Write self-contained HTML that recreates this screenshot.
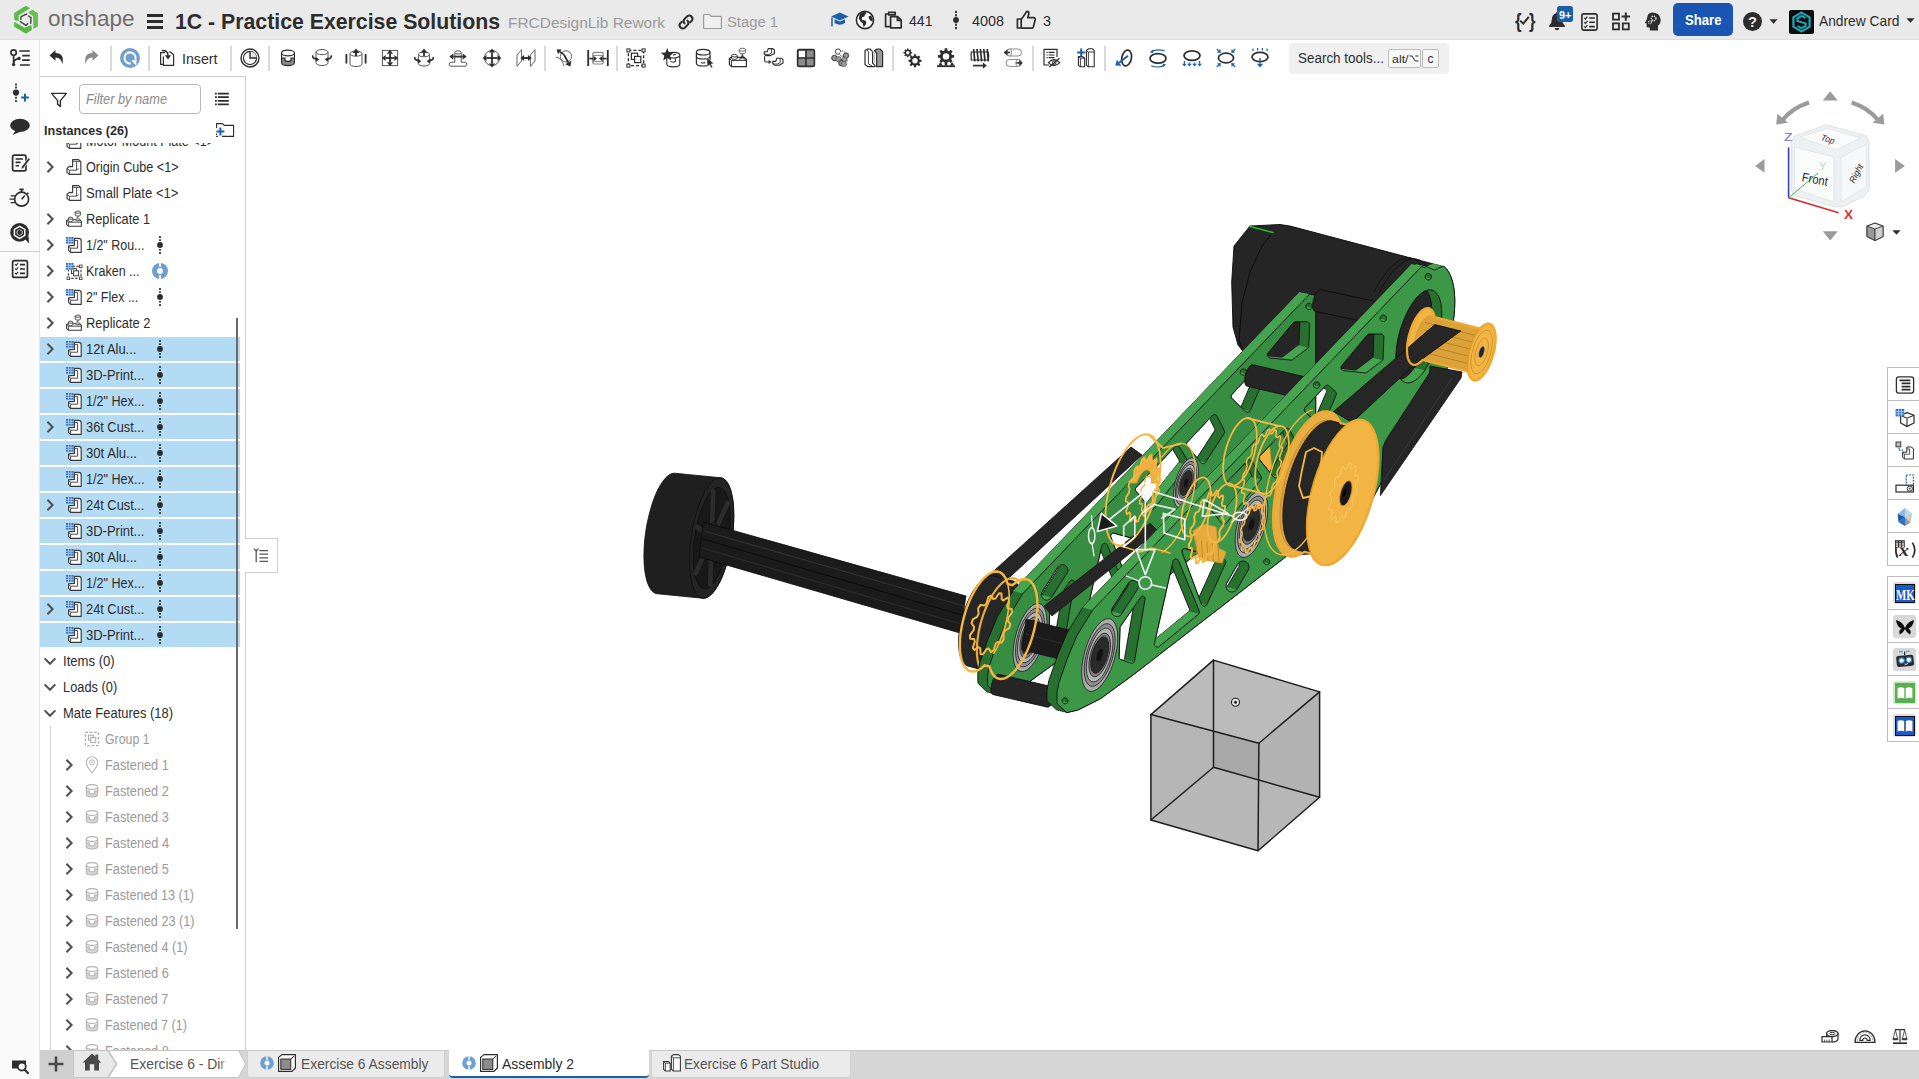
<!DOCTYPE html>
<html lang="en">
<head>
<meta charset="utf-8">
<title>1C - Practice Exercise Solutions</title>
<style>
*{box-sizing:border-box;margin:0;padding:0}
html,body{width:1919px;height:1079px;overflow:hidden;background:#fff}
body{position:relative;font-family:"Liberation Sans",sans-serif;color:#2d2d2d;font-size:14px}
.abs{position:absolute}
#header{position:absolute;left:0;top:0;width:1919px;height:40px;background:#eaeaea;border-bottom:1px solid #dedede}
#leftbar{position:absolute;left:0;top:40px;width:40px;height:1039px;background:#fafafa}
#toolbar{position:absolute;left:40px;top:40px;width:1879px;height:36px;background:#fff}
#panel{position:absolute;left:40px;top:76px;width:206px;height:974px;background:#fff;border-right:1px solid #ccc;overflow:hidden}
#tabs{position:absolute;left:40px;top:1050px;width:1879px;height:29px;background:#d6d6d6}
#view{position:absolute;left:246px;top:76px;width:1673px;height:974px;overflow:hidden}
.t{position:absolute;white-space:nowrap;line-height:1;transform-origin:0 50%}
svg{position:absolute;overflow:visible}
/* header */
/*HEADER_CSS*/
/* toolbar */
.sep{position:absolute;top:6px;width:2px;height:25px;background:#d9d9d9}
/*TOOLBAR_CSS*/
/* panel */
.row{position:absolute;left:0;width:200px;height:24px}
.row.sel{background:#b5dcf4}
.row .lbl{position:absolute;top:5px;font-size:14px;line-height:14px;white-space:nowrap;color:#2d2d2d;transform-origin:0 50%}
.row.dim .lbl{color:#999}
/*PANEL_CSS*/
/* tabs */
/*TABS_CSS*/
</style>
</head>
<body>
<div id="view">
<svg style="left:0;top:0" width="1673" height="974" viewBox="0 0 1673 974">
<path d="M428.5 397.2 L425.7 397.6 L422.9 399.1 L420.0 401.5 L417.1 404.9 L414.3 409.2 L411.5 414.3 L408.9 420.2 L406.5 426.7 L404.4 433.7 L402.5 441.2 L400.8 448.9 L399.6 456.8 L398.6 464.6 L398.1 472.4 L397.9 479.9 L398.1 487.0 L398.6 493.6 L399.6 499.6 L400.8 504.9 L402.5 509.4 L404.4 512.9 L406.5 515.6 L408.9 517.2 L411.5 517.8 L457.2 522.3 L460.0 521.9 L462.8 520.4 L465.7 518.0 L468.6 514.6 L471.4 510.3 L474.2 505.2 L476.8 499.3 L479.2 492.8 L481.3 485.8 L483.2 478.3 L484.9 470.6 L486.1 462.7 L487.1 454.9 L487.6 447.1 L487.8 439.6 L487.6 432.5 L487.1 425.9 L486.1 419.9 L484.9 414.6 L483.2 410.1 L481.3 406.6 L479.2 403.9 L476.8 402.3 L474.2 401.7Z " fill="#1f1f1f" fill-rule="evenodd" stroke="#0c0c0c" stroke-width="0.8" stroke-linejoin="round" /><polygon points="487.8,439.6 487.6,432.5 487.1,425.9 486.1,419.9 484.9,414.6 483.2,410.1 481.3,406.6 479.2,403.9 476.8,402.3 474.2,401.7 471.4,402.1 468.6,403.6 465.7,406.0 462.8,409.4 460.0,413.7 457.2,418.8 454.6,424.7 452.2,431.2 450.1,438.2 448.2,445.7 446.5,453.4 445.3,461.3 444.3,469.1 443.8,476.9 443.6,484.4 443.8,491.5 444.3,498.1 445.3,504.1 446.5,509.4 448.2,513.9 450.1,517.4 452.2,520.1 454.6,521.7 457.2,522.3 460.0,521.9 462.8,520.4 465.7,518.0 468.6,514.6 471.4,510.3 474.2,505.2 476.8,499.3 479.2,492.8 481.3,485.8 483.2,478.3 484.9,470.6 486.1,462.7 487.1,454.9 487.6,447.1" fill="#242424" stroke="#0c0c0c" stroke-width="0.8" stroke-linejoin="round" /><polygon points="484.3,443.2 484.1,437.2 483.6,431.7 482.9,426.6 481.8,422.2 480.4,418.5 478.8,415.5 477.0,413.3 475.0,411.9 472.8,411.4 470.5,411.7 468.1,412.9 465.7,415.0 463.3,417.9 460.9,421.5 458.6,425.8 456.4,430.7 454.4,436.2 452.6,442.1 451.0,448.3 449.6,454.8 448.5,461.4 447.8,468.0 447.3,474.5 447.1,480.8 447.3,486.8 447.8,492.3 448.5,497.4 449.6,501.8 451.0,505.5 452.6,508.5 454.4,510.7 456.4,512.1 458.6,512.6 460.9,512.3 463.3,511.1 465.7,509.0 468.1,506.1 470.5,502.5 472.8,498.2 475.0,493.3 477.0,487.8 478.8,481.9 480.4,475.7 481.8,469.2 482.9,462.6 483.6,456.0 484.1,449.5" fill="#181818" stroke="#0c0c0c" stroke-width="0.8" stroke-linejoin="round" /><polyline points="470.0,452.6 481.8,426.7" fill="none" stroke="#2c2c2c" stroke-width="4.5" stroke-linecap="round" stroke-linejoin="round" /><polyline points="466.1,449.6 467.2,415.6" fill="none" stroke="#2c2c2c" stroke-width="4.5" stroke-linecap="round" stroke-linejoin="round" /><polyline points="461.8,459.0 451.1,450.9" fill="none" stroke="#2c2c2c" stroke-width="4.5" stroke-linecap="round" stroke-linejoin="round" /><polyline points="461.4,471.4 449.6,497.3" fill="none" stroke="#2c2c2c" stroke-width="4.5" stroke-linecap="round" stroke-linejoin="round" /><polyline points="465.3,474.4 464.2,508.4" fill="none" stroke="#2c2c2c" stroke-width="4.5" stroke-linecap="round" stroke-linejoin="round" /><polyline points="469.6,465.0 480.3,473.1" fill="none" stroke="#2c2c2c" stroke-width="4.5" stroke-linecap="round" stroke-linejoin="round" /><polygon points="471.6,456.0 471.6,454.1 471.4,452.3 471.2,450.7 470.8,449.3 470.4,448.1 469.9,447.2 469.3,446.4 468.7,446.0 468.0,445.8 467.2,446.0 466.5,446.3 465.7,447.0 464.9,447.9 464.2,449.1 463.4,450.4 462.7,452.0 462.1,453.8 461.5,455.6 461.0,457.6 460.6,459.7 460.2,461.8 460.0,463.9 459.8,466.0 459.8,468.0 459.8,469.9 460.0,471.7 460.2,473.3 460.6,474.7 461.0,475.9 461.5,476.8 462.1,477.6 462.7,478.0 463.4,478.2 464.2,478.0 464.9,477.7 465.7,477.0 466.5,476.1 467.2,474.9 468.0,473.6 468.7,472.0 469.3,470.2 469.9,468.4 470.4,466.4 470.8,464.3 471.2,462.2 471.4,460.1 471.6,458.0" fill="#222" stroke="#0c0c0c" stroke-width="0.8" stroke-linejoin="round" /><polygon points="457.0,446.0 720.0,520.0 714.0,557.0 453.0,481.0" fill="#1b1b1b" stroke="#0a0a0a" stroke-width="0.8" stroke-linejoin="round" /><polyline points="458.0,455.0 718.0,530.0" fill="none" stroke="#303030" stroke-width="1.2" stroke-linecap="round" stroke-linejoin="round" /><polyline points="456.0,472.0 715.0,548.0" fill="none" stroke="#2c2c2c" stroke-width="1.2" stroke-linecap="round" stroke-linejoin="round" /><polyline points="457.0,463.0 716.0,539.0" fill="none" stroke="#0c0c0c" stroke-width="1" stroke-linecap="round" stroke-linejoin="round" />
<path d="M1034.0 148.5 L1004.0 150.0 L988.0 170.0 L985.7 206.0 L987.0 251.0 L992.0 269.0 L1000.0 279.0 L1016.0 296.0 L1143.2 329.1 L1147.1 330.0 L1151.3 329.6 L1155.6 328.1 L1160.2 325.3 L1164.8 321.4 L1169.4 316.4 L1174.0 310.4 L1178.3 303.6 L1182.5 295.9 L1186.4 287.6 L1189.8 278.8 L1192.9 269.7 L1195.5 260.4 L1197.5 251.0 L1199.0 241.8 L1199.9 232.8 L1200.2 224.3 L1199.9 216.4 L1199.0 209.2 L1197.5 202.8 L1195.5 197.4 L1192.9 193.0 L1189.8 189.8 L1186.4 187.7 L1044.0 150.0Z " fill="#252525" fill-rule="evenodd" stroke="#0a0a0a" stroke-width="0.9" stroke-linejoin="round" /><polyline points="1027.0,156.5 1016.0,170.0 1004.0,196.0 996.0,227.0 993.0,264.0 1000.0,286.0" fill="none" stroke="#0c0c0c" stroke-width="1" stroke-linecap="round" stroke-linejoin="round" /><polyline points="1004.0,150.5 1027.0,156.5" fill="none" stroke="#21c02b" stroke-width="1.6" stroke-linecap="round" stroke-linejoin="round" /><path d="M1184.1 200.8 L1183.6 199.1 L1183.1 197.5 L1182.6 196.0 L1182.0 194.5 L1181.3 193.1 L1180.7 191.8 L1179.9 190.6 L1179.2 189.4 L1178.4 188.4 L1177.6 187.4 L1176.7 186.5 L1175.8 185.8 L1174.9 185.1 L1174.0 184.4 L1173.0 183.9 L1171.9 183.5 L1170.9 183.2 L1169.8 183.0 L1168.7 182.8 L1167.6 182.8 L1166.5 182.8 L1165.3 183.0 L1164.1 183.2 L1162.9 183.5 L1161.7 184.0 L1160.5 184.5 L1159.2 185.1 L1158.0 185.8 L1156.7 186.6 L1155.4 187.5 L1154.1 188.5 L1152.9 189.5 L1151.6 190.7 L1150.3 191.9 L1149.0 193.2 L1147.7 194.6 L1146.4 196.1 L1145.2 197.6 L1143.9 199.3 L1142.6 201.0 L1141.4 202.7 L1140.2 204.6 L1138.9 206.5 L1137.7 208.4 L1136.5 210.5 L1135.4 212.5 L1134.2 214.7 L1133.1 216.9" fill="none" stroke="#0e0e0e" stroke-width="0.9" /><path d="M1179.1 199.8 L1178.6 198.1 L1178.1 196.5 L1177.6 195.0 L1177.0 193.5 L1176.3 192.1 L1175.7 190.8 L1174.9 189.6 L1174.2 188.4 L1173.4 187.4 L1172.6 186.4 L1171.7 185.5 L1170.8 184.8 L1169.9 184.1 L1169.0 183.4 L1168.0 182.9 L1166.9 182.5 L1165.9 182.2 L1164.8 182.0 L1163.7 181.8 L1162.6 181.8 L1161.5 181.8 L1160.3 182.0 L1159.1 182.2 L1157.9 182.5 L1156.7 183.0 L1155.5 183.5 L1154.2 184.1 L1153.0 184.8 L1151.7 185.6 L1150.4 186.5 L1149.1 187.5 L1147.9 188.5 L1146.6 189.7 L1145.3 190.9 L1144.0 192.2 L1142.7 193.6 L1141.4 195.1 L1140.2 196.6 L1138.9 198.3 L1137.6 200.0 L1136.4 201.7 L1135.2 203.6 L1133.9 205.5 L1132.7 207.4 L1131.5 209.5 L1130.4 211.5 L1129.2 213.7 L1128.1 215.9" fill="none" stroke="#0e0e0e" stroke-width="0.9" />
<polygon points="740.0,502.0 885.0,371.0 896.0,379.0 752.0,512.0" fill="#262626" stroke="#0a0a0a" stroke-width="0.8" stroke-linejoin="round" /><path d="M746.2 499.5 L743.6 499.8 L740.8 500.8 L737.9 502.5 L735.0 505.0 L732.1 508.2 L729.2 512.0 L726.4 516.3 L723.8 521.2 L721.3 526.4 L719.1 532.0 L717.2 537.8 L715.5 543.7 L714.2 549.7 L713.3 555.5 L712.7 561.2 L712.5 566.6 L712.7 571.7 L713.3 576.3 L714.2 580.3 L715.5 583.7 L717.2 586.5 L719.1 588.6 L721.3 589.9 L740.3 594.9 L742.8 595.5 L745.4 595.2 L748.2 594.2 L751.1 592.5 L754.0 590.0 L756.9 586.8 L759.8 583.0 L762.6 578.7 L765.2 573.8 L767.7 568.6 L769.9 563.0 L771.8 557.2 L773.5 551.3 L774.8 545.3 L775.7 539.5 L776.3 533.8 L776.5 528.4 L776.3 523.3 L775.7 518.7 L774.8 514.7 L773.5 511.3 L771.8 508.5 L769.9 506.4 L767.7 505.1 L748.7 500.1Z " fill="#262626" fill-rule="evenodd" stroke="#0a0a0a" stroke-width="0.8" stroke-linejoin="round" /><path d="M779.2 527.7 L779.0 522.3 L778.3 517.4 L777.3 513.1 L775.9 509.4 L774.2 506.4 L772.1 504.1 L769.7 502.7 L767.1 502.1 L764.2 502.4 L761.3 503.4 L758.2 505.3 L755.0 508.0 L751.8 511.4 L748.7 515.5 L745.8 520.2 L742.9 525.4 L740.3 531.0 L737.9 537.0 L735.8 543.3 L734.1 549.6 L732.7 556.0 L731.7 562.3 L731.0 568.5 L730.8 574.3 L731.0 579.7 L731.7 584.6 L732.7 588.9 L734.1 592.6 L735.8 595.6 L737.9 597.9 L740.3 599.3 L742.9 599.9 L745.8 599.6 L748.7 598.6 L751.8 596.7 L755.0 594.0 L758.2 590.6 L761.3 586.5 L764.2 581.8 L767.1 576.6 L769.7 571.0 L772.1 565.0 L774.2 558.7 L775.9 552.4 L777.3 546.0 L778.3 539.7 L779.0 533.5Z" fill="none" stroke="#e8aa3c" stroke-width="2.2" /><path d="M767.5 514.4 L767.3 514.7 L767.0 515.1 L751.7 540.1 L751.5 540.3 L751.4 540.6 L741.7 563.9 L741.6 564.1 L733.9 586.4 L733.7 586.9 L731.9 596.1 L731.8 596.5 L731.8 596.9 L731.8 605.6 L731.8 606.0 L731.9 606.4 L732.0 606.8 L732.1 607.2 L732.3 607.5 L732.5 607.9 L732.8 608.2 L733.1 608.5 L741.5 616.3 L742.4 616.1 L743.1 616.7 L744.1 616.5 L744.8 617.1 L745.7 616.9 L746.4 617.5 L747.4 617.3 L748.0 617.9 L749.0 617.7 L749.7 618.4 L750.6 618.1 L751.3 618.8 L761.9 616.3 L762.3 616.1 L762.7 616.0 L783.7 605.5 L784.0 605.3 L784.3 605.1 L816.5 581.7 L816.6 581.7 L899.2 517.7 L969.1 463.6 L969.2 463.5 L969.3 463.5 L1001.7 461.6 L1002.1 461.5 L1002.5 461.5 L1002.8 461.4 L1003.2 461.2 L1003.5 461.0 L1031.3 444.3 L1031.7 444.1 L1032.0 443.8 L1032.3 443.6 L1032.5 443.2 L1032.7 442.9 L1051.9 409.4 L1051.9 409.3 L1069.6 376.0 L1069.7 375.9 L1069.7 219.2 L1053.9 216.3 L1053.9 215.5Z M1021.6 277.5 L1021.8 277.3 L1022.0 277.0 L1047.1 246.9 L1047.3 246.7 L1047.5 246.5 L1047.7 246.3 L1048.0 246.2 L1048.2 246.0 L1048.5 245.9 L1048.8 245.9 L1049.1 245.8 L1049.4 245.8 L1053.7 245.8 L1053.7 245.8 L1053.8 246.1 L1053.8 246.4 L1053.0 267.6 L1052.9 267.9 L1052.9 268.1 L1052.8 268.4 L1052.7 268.7 L1052.6 268.9 L1052.4 269.2 L1052.2 269.4 L1052.0 269.6 L1051.8 269.8 L1037.1 281.1 L1036.9 281.2 L1036.6 281.3 L1036.4 281.5 L1036.1 281.5 L1035.8 281.6 L1035.5 281.6 L1035.3 281.7 L1035.0 281.6 L1021.6 280.2 L1021.5 280.0 L1021.4 279.8 L1021.3 279.5 L1021.3 279.2 L1021.3 278.9 L1021.3 278.6 L1021.3 278.3 L1021.4 278.0 L1021.5 277.8Z M985.6 319.0 L985.7 318.8 L985.9 318.5 L1004.4 298.6 L1006.0 300.1 L1006.2 300.3 L1006.4 300.5 L1006.6 300.7 L1006.7 300.9 L1006.8 301.2 L1006.9 301.5 L1007.0 301.8 L1007.0 302.0 L1007.0 302.3 L1007.0 302.6 L1006.9 302.9 L1006.9 303.1 L1006.8 303.4 L994.9 331.1 L986.1 322.7 L985.9 322.5 L985.7 322.2 L985.5 322.0 L985.4 321.7 L985.3 321.5 L985.2 321.2 L985.2 320.9 L985.2 320.6 L985.2 320.3 L985.2 320.1 L985.2 319.8 L985.3 319.5 L985.4 319.2Z M941.1 366.5 L941.2 366.3 L941.4 366.1 L963.6 342.4 L968.4 352.2 L968.5 352.4 L968.6 352.7 L968.7 353.0 L968.7 353.2 L968.7 353.5 L968.7 353.8 L968.7 354.1 L968.6 354.3 L968.5 354.6 L968.4 354.8 L968.3 355.1 L951.0 381.8 L941.3 370.0 L941.1 369.7 L941.0 369.5 L940.8 369.2 L940.7 369.0 L940.7 368.7 L940.6 368.4 L940.6 368.1 L940.6 367.8 L940.6 367.6 L940.7 367.3 L940.8 367.0 L940.9 366.8Z M889.9 411.8 L890.0 411.6 L890.2 411.4 L926.6 373.3 L932.7 383.4 L932.8 383.7 L932.9 384.0 L933.0 384.3 L933.1 384.6 L933.1 384.9 L933.1 385.2 L933.0 385.4 L933.0 385.7 L932.9 386.0 L932.8 386.3 L932.6 386.6 L932.5 386.8 L900.1 427.6 L890.1 415.3 L889.9 415.1 L889.7 414.8 L889.6 414.6 L889.5 414.3 L889.5 414.0 L889.4 413.7 L889.4 413.4 L889.4 413.2 L889.4 412.9 L889.5 412.6 L889.6 412.3 L889.7 412.1Z M866.6 457.2 L866.9 457.1 L867.2 457.1 L895.9 465.0 L896.2 465.1 L896.4 465.2 L896.7 465.4 L896.9 465.5 L897.1 465.7 L897.3 465.9 L897.5 466.1 L897.7 466.4 L897.8 466.6 L897.9 466.9 L898.0 467.2 L898.1 467.4 L898.1 467.7 L898.1 468.0 L898.1 468.3 L898.0 468.6 L897.9 468.8 L897.8 469.1 L881.5 505.4 L864.8 461.1 L864.7 460.8 L864.7 460.5 L864.7 460.2 L864.7 459.9 L864.7 459.6 L864.7 459.3 L864.8 459.0 L864.9 458.8 L865.1 458.5 L865.2 458.2 L865.4 458.0 L865.6 457.8 L865.9 457.6 L866.1 457.5 L866.4 457.3Z M920.1 471.9 L920.4 471.4 L920.7 471.2 L920.7 471.3 L920.8 471.9 L920.9 472.5 L920.9 473.1 L920.9 473.6 L920.8 474.2 L920.6 474.8 L920.4 475.3 L920.1 475.8 L909.3 494.5 L909.0 495.0 L908.6 495.5 L908.4 495.7 L908.3 495.6 L908.2 495.0 L908.1 494.4 L908.1 493.8 L908.2 493.3 L908.3 492.7 L908.4 492.1 L908.6 491.6 L908.9 491.1 L919.7 472.4Z M796.2 515.7 L811.9 491.1 L812.0 491.0 L812.1 491.5 L812.1 492.0 L812.0 492.5 L811.9 493.0 L811.7 493.5 L811.5 494.0 L811.2 494.5 L795.5 519.1 L795.4 519.3 L795.3 518.8 L795.3 518.2 L795.4 517.7 L795.5 517.2 L795.7 516.7 L795.9 516.2Z M871.2 519.4 L871.0 519.6 L838.6 546.1 L854.7 474.5 L871.8 516.1 L871.9 516.4 L872.0 516.7 L872.0 517.0 L872.0 517.3 L872.0 517.6 L872.0 517.9 L871.9 518.1 L871.8 518.4 L871.7 518.7 L871.5 518.9 L871.4 519.1Z M803.9 534.2 L804.0 534.0 L804.1 533.8 L816.7 515.7 L808.1 565.6 L808.1 565.8 L808.0 566.0 L807.9 566.2 L807.8 566.5 L807.7 566.6 L807.5 566.8 L807.3 567.0 L807.2 567.1 L807.0 567.3 L806.9 567.3 L804.5 566.5 L804.2 566.4 L804.0 566.3 L803.8 566.2 L803.6 566.0 L803.4 565.9 L803.3 565.7 L803.1 565.5 L803.0 565.3 L802.9 565.1 L802.9 564.8 L802.8 564.6 L802.8 564.3 L802.8 564.1 L803.7 535.1 L803.7 534.9 L803.7 534.7 L803.8 534.5Z " fill="#27702f" fill-rule="evenodd" stroke="#111" stroke-width="0.9" stroke-linejoin="round" /><path d="M996.8 299.1 L997.1 299.2 L997.4 299.2 L997.8 299.2 L998.1 299.1 L998.4 299.1 L998.7 299.0 L998.9 298.8 L999.2 298.7 L999.4 298.5 L999.7 298.3 L999.9 298.0 L1000.1 297.8 L990.2 295.3 L990.0 295.6 L989.8 295.8 L989.6 296.0 L989.4 296.2 L989.1 296.4 L988.8 296.5 L988.5 296.6 L988.4 296.6 L1063.6 218.1 L1053.9 216.3 L1053.9 215.5 L767.5 514.4 L767.3 514.7 L767.0 515.1 L776.9 517.5 L777.1 517.2 L777.4 516.9 L988.1 296.9Z M792.6 521.3 L792.1 521.5 L791.5 521.6 L791.0 521.6 L790.5 521.6 L789.9 521.5 L789.4 521.4 L799.3 523.9 L799.8 524.0 L800.3 524.1 L800.9 524.1 L801.4 524.0 L801.9 524.0 L802.4 523.8 L802.9 523.6 L803.4 523.4 L803.8 523.1 L804.3 522.8 L804.7 522.4 L805.0 522.0 L805.3 521.6 L795.5 519.1 L795.4 519.3 L795.1 519.6 L794.8 520.0 L794.4 520.3 L794.0 520.6 L793.5 520.9 L793.1 521.2Z M806.1 567.6 L805.8 567.6 L805.6 567.6 L805.4 567.6 L805.1 567.6 L815.0 570.0 L815.2 570.1 L815.5 570.1 L815.7 570.1 L815.9 570.1 L816.2 570.0 L816.4 569.9 L816.6 569.8 L816.8 569.7 L817.0 569.6 L817.2 569.5 L817.4 569.3 L817.5 569.1 L817.6 568.9 L807.8 566.5 L807.7 566.6 L807.5 566.8 L807.3 567.0 L807.2 567.1 L807.0 567.3 L806.8 567.4 L806.5 567.5 L806.3 567.5Z M740.5 607.5 L740.3 607.5 L740.0 607.6 L739.7 607.6 L739.4 607.6 L739.1 607.5 L748.9 610.0 L749.2 610.1 L749.5 610.1 L749.8 610.1 L750.1 610.0 L750.4 609.9 L750.7 609.8 L750.9 609.7 L751.2 609.6 L751.4 609.4 L751.6 609.2 L751.8 609.0 L752.0 608.8 L742.1 606.3 L742.0 606.5 L741.8 606.7 L741.5 606.9 L741.3 607.1 L741.1 607.3 L740.8 607.4Z M905.3 433.1 L905.5 433.1 L905.8 433.2 L906.1 433.2 L906.4 433.2 L906.7 433.1 L907.0 433.0 L907.3 432.9 L907.5 432.8 L907.8 432.7 L908.0 432.5 L908.2 432.3 L908.4 432.1 L942.3 389.3 L942.5 389.0 L932.6 386.6 L932.5 386.8 L898.6 429.6 L898.4 429.8 L898.2 430.0 L897.9 430.2 L897.7 430.3 L897.4 430.5 L897.1 430.6 L896.9 430.7 L896.6 430.7 L896.3 430.7 L896.0 430.7 L895.7 430.7 L895.4 430.6Z M878.4 511.0 L878.2 511.1 L877.9 511.2 L877.6 511.3 L877.3 511.4 L877.0 511.4 L876.7 511.4 L876.5 511.4 L876.2 511.3 L886.0 513.8 L886.3 513.8 L886.6 513.9 L886.9 513.9 L887.2 513.8 L887.5 513.8 L887.7 513.7 L888.0 513.6 L888.3 513.4 L888.5 513.3 L888.7 513.1 L888.9 512.9 L889.1 512.6 L879.2 510.2 L879.1 510.4 L878.9 510.6 L878.6 510.8Z M831.8 551.6 L831.5 551.7 L831.2 551.7 L830.9 551.8 L830.6 551.8 L830.3 551.8 L830.0 551.7 L839.9 554.2 L840.2 554.2 L840.5 554.3 L840.8 554.2 L841.0 554.2 L841.3 554.1 L841.6 554.0 L841.9 553.9 L842.1 553.8 L842.4 553.6 L880.8 522.0 L881.0 521.8 L881.2 521.6 L881.4 521.4 L871.5 518.9 L871.4 519.1 L871.2 519.4 L871.0 519.6 L838.6 546.1 L838.6 546.1 L832.5 551.1 L832.3 551.3 L832.0 551.5Z M957.4 387.6 L957.7 387.5 L958.0 387.4 L958.2 387.3 L958.5 387.2 L958.8 387.1 L959.0 386.9 L959.2 386.7 L959.4 386.5 L959.6 386.2 L949.7 383.8 L949.5 384.0 L949.3 384.2 L949.1 384.4 L948.9 384.6 L948.7 384.7 L948.4 384.9 L948.1 385.0 L947.8 385.0 L947.5 385.1 L947.2 385.1 L947.0 385.1 L946.7 385.1 L956.5 387.5 L956.8 387.6 L957.1 387.6Z M950.5 472.0 L950.7 471.7 L940.8 469.3 L940.6 469.5 L940.4 469.7 L940.2 469.9 L940.0 470.1 L939.7 470.2 L939.5 470.4 L939.2 470.5 L938.9 470.5 L938.6 470.6 L938.3 470.6 L938.1 470.6 L937.8 470.5 L947.6 473.0 L947.9 473.0 L948.2 473.1 L948.5 473.0 L948.8 473.0 L949.1 472.9 L949.3 472.8 L949.6 472.7 L949.8 472.6 L950.1 472.4 L950.3 472.2Z M905.7 497.3 L905.1 497.4 L904.5 497.5 L904.0 497.5 L903.4 497.4 L902.8 497.3 L912.7 499.8 L913.2 499.9 L913.8 499.9 L914.4 499.9 L915.0 499.9 L915.5 499.7 L916.1 499.6 L916.6 499.3 L917.1 499.1 L917.6 498.7 L918.1 498.4 L918.5 497.9 L918.8 497.5 L909.0 495.0 L908.6 495.5 L908.4 495.7 L908.4 495.7 L908.2 495.9 L907.8 496.3 L907.3 496.6 L906.8 496.9 L906.2 497.1Z M1045.4 284.1 L1045.7 284.1 L1045.9 284.0 L1046.2 283.9 L1046.5 283.8 L1046.7 283.7 L1046.9 283.5 L1061.7 272.3 L1061.9 272.1 L1062.1 271.9 L1062.3 271.7 L1052.4 269.2 L1052.2 269.4 L1052.0 269.6 L1051.8 269.8 L1037.1 281.1 L1036.9 281.2 L1036.6 281.3 L1036.4 281.5 L1036.1 281.5 L1035.8 281.6 L1035.5 281.6 L1035.3 281.7 L1035.0 281.6 L1014.1 279.4 L1013.8 279.4 L1023.6 281.8 L1023.9 281.9 L1044.8 284.1 L1045.1 284.1Z M992.6 333.7 L992.4 333.8 L992.1 333.8 L991.8 333.8 L991.5 333.8 L991.2 333.8 L991.0 333.7 L1000.8 336.2 L1001.1 336.3 L1001.4 336.3 L1001.7 336.3 L1001.9 336.3 L1002.2 336.2 L1002.5 336.2 L1002.8 336.1 L1003.0 335.9 L1003.3 335.8 L1003.5 335.6 L1003.7 335.4 L1003.9 335.2 L1004.1 335.0 L994.2 332.5 L994.0 332.8 L993.9 333.0 L993.6 333.2 L993.4 333.3 L993.2 333.5 L992.9 333.6Z M1055.0 230.5 L1054.7 230.7 L1054.4 230.8 L1054.1 230.9 L1053.8 231.0 L1053.5 231.0 L1053.2 231.0 L1052.9 231.0 L1052.6 231.0 L1062.4 233.4 L1062.7 233.5 L1063.1 233.5 L1063.4 233.5 L1063.7 233.4 L1064.0 233.4 L1064.3 233.3 L1064.5 233.1 L1064.8 233.0 L1065.1 232.8 L1065.3 232.6 L1065.5 232.4 L1065.7 232.1 L1055.8 229.6 L1055.6 229.9 L1055.4 230.1 L1055.2 230.3Z " fill="#46a350" fill-rule="evenodd" stroke="none" stroke-width="0" stroke-linejoin="round" /><path d="M777.4 516.9 L777.1 517.2 L776.9 517.5 L761.5 542.5 L761.4 542.8 L761.2 543.1 L751.5 566.3 L751.5 566.5 L743.7 588.8 L743.6 589.4 L741.7 598.6 L741.7 598.9 L741.6 599.3 L741.6 608.1 L741.7 608.5 L741.7 608.9 L741.8 609.3 L742.0 609.6 L742.2 610.0 L742.4 610.3 L742.6 610.7 L742.9 610.9 L751.3 618.8 L761.9 616.3 L762.3 616.1 L762.7 616.0 L783.7 605.5 L784.0 605.3 L784.3 605.1 L816.5 581.7 L816.6 581.7 L899.2 517.7 L969.1 463.6 L969.2 463.5 L969.3 463.5 L1001.7 461.6 L1002.1 461.5 L1002.5 461.5 L1002.8 461.4 L1003.2 461.2 L1003.5 461.0 L1031.3 444.3 L1031.7 444.1 L1032.0 443.8 L1032.3 443.6 L1032.5 443.2 L1032.7 442.9 L1051.9 409.4 L1051.9 409.3 L1069.6 376.0 L1069.7 375.9 L1069.7 219.2 L1063.6 218.1Z M890.0 411.6 L890.2 411.4 L929.1 370.8 L929.3 370.6 L929.5 370.4 L929.7 370.2 L930.0 370.1 L930.3 370.0 L930.5 369.9 L930.8 369.9 L931.1 369.8 L931.4 369.8 L931.7 369.9 L932.0 369.9 L932.2 370.0 L932.5 370.1 L932.7 370.3 L933.0 370.4 L933.2 370.6 L933.4 370.8 L933.6 371.0 L933.7 371.3 L942.5 385.9 L942.7 386.2 L942.8 386.4 L942.9 386.7 L942.9 387.0 L942.9 387.3 L942.9 387.6 L942.9 387.9 L942.8 388.2 L942.7 388.5 L942.6 388.8 L942.5 389.0 L942.3 389.3 L908.4 432.1 L908.2 432.3 L908.0 432.5 L907.8 432.7 L907.5 432.8 L907.3 432.9 L907.0 433.0 L906.7 433.1 L906.4 433.2 L906.1 433.2 L905.8 433.2 L905.5 433.1 L905.3 433.1 L905.0 433.0 L904.7 432.8 L904.5 432.7 L904.2 432.5 L904.0 432.3 L903.8 432.1 L890.1 415.3 L889.9 415.1 L889.7 414.8 L889.6 414.6 L889.5 414.3 L889.5 414.0 L889.4 413.7 L889.4 413.4 L889.4 413.2 L889.4 412.9 L889.5 412.6 L889.6 412.3 L889.7 412.1 L889.9 411.8Z M930.4 477.2 L930.2 477.8 L930.0 478.3 L919.1 497.0 L918.8 497.5 L918.5 497.9 L918.1 498.4 L917.6 498.7 L917.1 499.1 L916.6 499.3 L916.1 499.6 L915.5 499.7 L915.0 499.9 L914.4 499.9 L913.8 499.9 L913.2 499.9 L912.7 499.8 L912.1 499.6 L911.6 499.4 L911.1 499.1 L910.6 498.8 L910.1 498.5 L909.7 498.1 L909.3 497.6 L909.0 497.1 L908.7 496.6 L908.5 496.1 L908.3 495.6 L908.2 495.0 L908.1 494.4 L908.1 493.8 L908.2 493.3 L908.3 492.7 L908.4 492.1 L908.6 491.6 L908.9 491.1 L919.7 472.4 L920.1 471.9 L920.4 471.4 L920.8 471.0 L921.3 470.6 L921.7 470.3 L922.2 470.0 L922.8 469.8 L923.3 469.6 L923.9 469.5 L924.5 469.4 L925.1 469.4 L925.6 469.5 L926.2 469.6 L926.8 469.7 L927.3 469.9 L927.8 470.2 L928.3 470.5 L928.8 470.9 L929.2 471.3 L929.5 471.7 L929.9 472.2 L930.2 472.7 L930.4 473.2 L930.6 473.8 L930.7 474.4 L930.8 474.9 L930.8 475.5 L930.7 476.1 L930.6 476.7Z M867.8 457.1 L868.1 457.1 L868.4 457.2 L905.8 467.5 L906.0 467.6 L906.3 467.7 L906.5 467.8 L906.8 468.0 L907.0 468.2 L907.2 468.4 L907.4 468.6 L907.5 468.8 L907.7 469.1 L907.8 469.4 L907.8 469.6 L907.9 469.9 L907.9 470.2 L907.9 470.5 L907.9 470.8 L907.9 471.0 L907.8 471.3 L907.7 471.6 L889.4 512.1 L889.3 512.4 L889.1 512.6 L888.9 512.9 L888.7 513.1 L888.5 513.3 L888.3 513.4 L888.0 513.6 L887.7 513.7 L887.5 513.8 L887.2 513.8 L886.9 513.9 L886.6 513.9 L886.3 513.8 L886.0 513.8 L885.7 513.7 L885.5 513.6 L885.2 513.5 L885.0 513.3 L884.7 513.1 L884.5 512.9 L884.3 512.7 L884.2 512.5 L884.0 512.2 L883.9 512.0 L864.8 461.1 L864.7 460.8 L864.7 460.5 L864.7 460.2 L864.7 459.9 L864.7 459.6 L864.7 459.3 L864.8 459.0 L864.9 458.8 L865.1 458.5 L865.2 458.2 L865.4 458.0 L865.6 457.8 L865.9 457.6 L866.1 457.5 L866.4 457.3 L866.6 457.2 L866.9 457.1 L867.2 457.1 L867.5 457.1Z M821.3 496.5 L821.1 497.0 L805.3 521.6 L805.0 522.0 L804.7 522.4 L804.3 522.8 L803.8 523.1 L803.4 523.4 L802.9 523.6 L802.4 523.8 L801.9 524.0 L801.4 524.0 L800.9 524.1 L800.3 524.1 L799.8 524.0 L799.3 523.9 L798.8 523.7 L798.3 523.5 L797.8 523.2 L797.4 522.9 L797.0 522.6 L796.6 522.2 L796.3 521.8 L796.0 521.3 L795.8 520.8 L795.6 520.3 L795.5 519.8 L795.4 519.3 L795.3 518.8 L795.3 518.2 L795.4 517.7 L795.5 517.2 L795.7 516.7 L795.9 516.2 L796.2 515.7 L811.9 491.1 L812.3 490.7 L812.6 490.3 L813.0 489.9 L813.4 489.6 L813.9 489.3 L814.3 489.1 L814.8 488.9 L815.3 488.7 L815.9 488.7 L816.4 488.6 L816.9 488.6 L817.5 488.7 L818.0 488.8 L818.5 489.0 L819.0 489.2 L819.4 489.5 L819.9 489.8 L820.3 490.1 L820.6 490.5 L820.9 490.9 L821.2 491.4 L821.5 491.9 L821.7 492.4 L821.8 492.9 L821.9 493.4 L821.9 493.9 L821.9 494.5 L821.8 495.0 L821.7 495.5 L821.6 496.0Z M861.2 468.7 L861.3 469.0 L861.4 469.2 L881.7 518.6 L881.8 518.9 L881.8 519.2 L881.9 519.4 L881.9 519.7 L881.9 520.0 L881.8 520.3 L881.8 520.6 L881.7 520.9 L881.5 521.1 L881.4 521.4 L881.2 521.6 L881.0 521.8 L880.8 522.0 L842.4 553.6 L842.1 553.8 L841.9 553.9 L841.6 554.0 L841.3 554.1 L841.0 554.2 L840.8 554.2 L840.5 554.3 L840.2 554.2 L839.9 554.2 L839.6 554.1 L839.3 554.0 L839.1 553.9 L838.8 553.7 L838.6 553.6 L838.4 553.4 L838.2 553.1 L838.0 552.9 L837.9 552.7 L837.7 552.4 L837.6 552.1 L837.6 551.8 L837.5 551.5 L837.5 551.2 L837.5 550.9 L837.6 550.7 L855.8 469.7 L855.9 469.4 L856.0 469.2 L856.1 468.9 L856.3 468.7 L856.5 468.4 L856.7 468.2 L856.9 468.0 L857.1 467.9 L857.4 467.7 L857.6 467.6 L857.9 467.5 L858.2 467.4 L858.5 467.4 L858.7 467.4 L859.0 467.4 L859.3 467.5 L859.6 467.5 L859.9 467.6 L860.1 467.8 L860.4 467.9 L860.6 468.1 L860.8 468.3 L861.0 468.5Z M828.5 506.5 L828.5 506.7 L828.4 507.0 L818.0 568.0 L817.9 568.3 L817.9 568.5 L817.8 568.7 L817.6 568.9 L817.5 569.1 L817.4 569.3 L817.2 569.5 L817.0 569.6 L816.8 569.7 L816.6 569.8 L816.4 569.9 L816.2 570.0 L815.9 570.1 L815.7 570.1 L815.5 570.1 L815.2 570.1 L815.0 570.0 L814.8 570.0 L804.5 566.5 L804.2 566.4 L804.0 566.3 L803.8 566.2 L803.6 566.0 L803.4 565.9 L803.3 565.7 L803.1 565.5 L803.0 565.3 L802.9 565.1 L802.9 564.8 L802.8 564.6 L802.8 564.3 L802.8 564.1 L803.7 535.1 L803.7 534.9 L803.7 534.7 L803.8 534.5 L803.9 534.2 L804.0 534.0 L804.1 533.8 L824.0 505.1 L824.1 505.0 L824.3 504.8 L824.5 504.6 L824.6 504.5 L824.9 504.4 L825.1 504.3 L825.3 504.2 L825.5 504.1 L825.8 504.1 L826.0 504.1 L826.2 504.1 L826.5 504.1 L826.7 504.2 L826.9 504.3 L827.1 504.4 L827.3 504.5 L827.5 504.6 L827.7 504.8 L827.9 505.0 L828.0 505.1 L828.1 505.3 L828.3 505.6 L828.3 505.8 L828.4 506.0 L828.4 506.2Z M752.5 606.8 L752.5 607.1 L752.5 607.4 L752.4 607.7 L752.4 608.0 L752.3 608.2 L752.1 608.5 L752.0 608.8 L751.8 609.0 L751.6 609.2 L751.4 609.4 L751.2 609.6 L750.9 609.7 L750.7 609.8 L750.4 609.9 L750.1 610.0 L749.8 610.1 L749.5 610.1 L749.2 610.1 L748.9 610.0 L748.7 609.9 L748.4 609.8 L748.1 609.7 L747.9 609.6 L747.7 609.4 L747.4 609.2 L747.2 609.0 L747.1 608.8 L746.9 608.5 L746.8 608.2 L746.7 608.0 L746.6 607.7 L746.6 607.4 L746.6 607.1 L746.6 606.8 L746.6 606.5 L746.7 606.3 L746.8 606.0 L746.9 605.7 L747.1 605.5 L747.2 605.2 L747.4 605.0 L747.7 604.8 L747.9 604.7 L748.1 604.5 L748.4 604.4 L748.7 604.3 L748.9 604.2 L749.2 604.2 L749.5 604.2 L749.8 604.2 L750.1 604.2 L750.4 604.3 L750.7 604.4 L750.9 604.5 L751.2 604.7 L751.4 604.8 L751.6 605.0 L751.8 605.2 L752.0 605.5 L752.1 605.7 L752.3 606.0 L752.4 606.3 L752.4 606.5Z M1066.1 229.7 L1066.2 230.0 L1066.2 230.4 L1066.2 230.7 L1066.1 231.0 L1066.1 231.3 L1066.0 231.6 L1065.8 231.8 L1065.7 232.1 L1065.5 232.4 L1065.3 232.6 L1065.1 232.8 L1064.8 233.0 L1064.5 233.1 L1064.3 233.3 L1064.0 233.4 L1063.7 233.4 L1063.4 233.5 L1063.1 233.5 L1062.7 233.5 L1062.4 233.4 L1062.1 233.4 L1061.8 233.3 L1061.6 233.1 L1061.3 233.0 L1061.1 232.8 L1060.8 232.6 L1060.6 232.4 L1060.4 232.1 L1060.3 231.8 L1060.1 231.6 L1060.0 231.3 L1060.0 231.0 L1059.9 230.7 L1059.9 230.4 L1059.9 230.0 L1060.0 229.7 L1060.0 229.4 L1060.1 229.1 L1060.3 228.9 L1060.4 228.6 L1060.6 228.4 L1060.8 228.1 L1061.1 227.9 L1061.3 227.7 L1061.6 227.6 L1061.8 227.4 L1062.1 227.3 L1062.4 227.3 L1062.7 227.2 L1063.1 227.2 L1063.4 227.2 L1063.7 227.3 L1064.0 227.3 L1064.3 227.4 L1064.5 227.6 L1064.8 227.7 L1065.1 227.9 L1065.3 228.1 L1065.5 228.4 L1065.7 228.6 L1065.8 228.9 L1066.0 229.1 L1066.1 229.4Z M1021.6 277.5 L1021.8 277.3 L1022.0 277.0 L1047.1 246.9 L1047.3 246.7 L1047.5 246.5 L1047.7 246.3 L1048.0 246.2 L1048.2 246.0 L1048.5 245.9 L1048.8 245.9 L1049.1 245.8 L1049.4 245.8 L1060.7 245.8 L1061.0 245.8 L1061.3 245.9 L1061.5 245.9 L1061.8 246.1 L1062.1 246.2 L1062.3 246.3 L1062.6 246.5 L1062.8 246.7 L1063.0 246.9 L1063.2 247.2 L1063.3 247.4 L1063.4 247.7 L1063.5 248.0 L1063.6 248.3 L1063.6 248.6 L1063.6 248.9 L1062.8 270.0 L1062.8 270.3 L1062.7 270.6 L1062.6 270.9 L1062.5 271.2 L1062.4 271.4 L1062.3 271.7 L1062.1 271.9 L1061.9 272.1 L1061.7 272.3 L1046.9 283.5 L1046.7 283.7 L1046.5 283.8 L1046.2 283.9 L1045.9 284.0 L1045.7 284.1 L1045.4 284.1 L1045.1 284.1 L1044.8 284.1 L1023.9 281.9 L1023.6 281.8 L1023.4 281.7 L1023.1 281.6 L1022.8 281.5 L1022.6 281.4 L1022.3 281.2 L1022.1 281.0 L1021.9 280.8 L1021.8 280.5 L1021.6 280.3 L1021.5 280.0 L1021.4 279.8 L1021.3 279.5 L1021.3 279.2 L1021.3 278.9 L1021.3 278.6 L1021.3 278.3 L1021.4 278.0 L1021.5 277.8Z M1000.5 295.4 L1000.6 295.7 L1000.6 296.1 L1000.6 296.4 L1000.5 296.7 L1000.5 297.0 L1000.4 297.3 L1000.2 297.5 L1000.1 297.8 L999.9 298.0 L999.7 298.3 L999.4 298.5 L999.2 298.7 L998.9 298.8 L998.7 299.0 L998.4 299.1 L998.1 299.1 L997.8 299.2 L997.4 299.2 L997.1 299.2 L996.8 299.1 L996.5 299.1 L996.2 299.0 L996.0 298.8 L995.7 298.7 L995.4 298.5 L995.2 298.3 L995.0 298.0 L994.8 297.8 L994.7 297.5 L994.5 297.3 L994.4 297.0 L994.4 296.7 L994.3 296.4 L994.3 296.1 L994.3 295.7 L994.4 295.4 L994.4 295.1 L994.5 294.8 L994.7 294.6 L994.8 294.3 L995.0 294.1 L995.2 293.8 L995.4 293.6 L995.7 293.4 L996.0 293.3 L996.2 293.1 L996.5 293.0 L996.8 293.0 L997.1 292.9 L997.4 292.9 L997.8 292.9 L998.1 293.0 L998.4 293.0 L998.7 293.1 L998.9 293.3 L999.2 293.4 L999.4 293.6 L999.7 293.8 L999.9 294.1 L1000.1 294.3 L1000.2 294.6 L1000.4 294.8 L1000.5 295.1Z M985.6 319.0 L985.7 318.8 L985.9 318.5 L1005.6 297.2 L1005.8 297.0 L1006.0 296.8 L1006.3 296.7 L1006.5 296.5 L1006.8 296.4 L1007.1 296.3 L1007.4 296.3 L1007.7 296.3 L1007.9 296.3 L1008.2 296.3 L1008.5 296.3 L1008.8 296.4 L1009.0 296.5 L1009.3 296.7 L1009.5 296.8 L1009.8 297.0 L1015.9 302.5 L1016.1 302.7 L1016.3 302.9 L1016.4 303.2 L1016.5 303.4 L1016.7 303.7 L1016.7 303.9 L1016.8 304.2 L1016.8 304.5 L1016.8 304.8 L1016.8 305.1 L1016.8 305.3 L1016.7 305.6 L1016.6 305.9 L1004.3 334.5 L1004.2 334.8 L1004.1 335.0 L1003.9 335.2 L1003.7 335.4 L1003.5 335.6 L1003.3 335.8 L1003.0 335.9 L1002.8 336.1 L1002.5 336.2 L1002.2 336.2 L1001.9 336.3 L1001.7 336.3 L1001.4 336.3 L1001.1 336.3 L1000.8 336.2 L1000.5 336.1 L1000.3 336.0 L1000.0 335.8 L999.8 335.7 L999.6 335.5 L986.1 322.7 L985.9 322.5 L985.7 322.2 L985.5 322.0 L985.4 321.7 L985.3 321.5 L985.2 321.2 L985.2 320.9 L985.2 320.6 L985.2 320.3 L985.2 320.1 L985.2 319.8 L985.3 319.5 L985.4 319.2Z M941.1 366.5 L941.2 366.3 L941.4 366.1 L966.3 339.5 L966.5 339.3 L966.7 339.2 L966.9 339.0 L967.2 338.9 L967.5 338.8 L967.7 338.7 L968.0 338.6 L968.3 338.6 L968.6 338.6 L968.9 338.6 L969.1 338.7 L969.4 338.8 L969.7 338.9 L969.9 339.0 L970.2 339.2 L970.4 339.3 L970.6 339.5 L970.8 339.7 L970.9 340.0 L971.1 340.2 L978.3 354.6 L978.4 354.9 L978.5 355.1 L978.5 355.4 L978.6 355.7 L978.6 356.0 L978.6 356.2 L978.5 356.5 L978.5 356.8 L978.4 357.1 L978.3 357.3 L978.1 357.6 L959.6 386.2 L959.4 386.5 L959.2 386.7 L959.0 386.9 L958.8 387.1 L958.5 387.2 L958.2 387.3 L958.0 387.4 L957.7 387.5 L957.4 387.6 L957.1 387.6 L956.8 387.6 L956.5 387.5 L956.2 387.4 L956.0 387.4 L955.7 387.2 L955.4 387.1 L955.2 386.9 L955.0 386.7 L954.8 386.5 L941.3 370.0 L941.1 369.7 L941.0 369.5 L940.8 369.2 L940.7 369.0 L940.7 368.7 L940.6 368.4 L940.6 368.1 L940.6 367.8 L940.6 367.6 L940.7 367.3 L940.8 367.0 L940.9 366.8Z M951.1 469.5 L951.1 469.8 L951.2 470.1 L951.1 470.4 L951.1 470.7 L951.0 471.0 L950.9 471.2 L950.8 471.5 L950.7 471.7 L950.5 472.0 L950.3 472.2 L950.1 472.4 L949.8 472.6 L949.6 472.7 L949.3 472.8 L949.1 472.9 L948.8 473.0 L948.5 473.0 L948.2 473.1 L947.9 473.0 L947.6 473.0 L947.3 472.9 L947.1 472.8 L946.8 472.7 L946.6 472.6 L946.3 472.4 L946.1 472.2 L945.9 472.0 L945.7 471.7 L945.6 471.5 L945.5 471.2 L945.4 471.0 L945.3 470.7 L945.3 470.4 L945.2 470.1 L945.3 469.8 L945.3 469.5 L945.4 469.2 L945.5 469.0 L945.6 468.7 L945.7 468.5 L945.9 468.2 L946.1 468.0 L946.3 467.8 L946.6 467.6 L946.8 467.5 L947.1 467.4 L947.3 467.3 L947.6 467.2 L947.9 467.2 L948.2 467.1 L948.5 467.2 L948.8 467.2 L949.1 467.3 L949.3 467.4 L949.6 467.5 L949.8 467.6 L950.1 467.8 L950.3 468.0 L950.5 468.2 L950.7 468.5 L950.8 468.7 L950.9 469.0 L951.0 469.2Z " fill="#378d41" fill-rule="evenodd" stroke="#111" stroke-width="0.9" stroke-linejoin="round" /><polygon points="800.9,545.3 800.7,540.8 800.0,536.8 799.0,533.4 797.6,530.7 795.9,528.8 793.9,527.7 791.7,527.4 789.2,528.0 786.6,529.3 784.0,531.5 781.4,534.4 778.8,538.0 776.3,542.1 774.1,546.8 772.1,551.8 770.4,557.0 769.0,562.3 768.0,567.7 767.3,572.8 767.1,577.7 767.3,582.2 768.0,586.2 769.0,589.6 770.4,592.3 772.1,594.2 774.1,595.3 776.3,595.6 778.8,595.0 781.4,593.7 784.0,591.5 786.6,588.6 789.2,585.0 791.7,580.9 793.9,576.2 795.9,571.2 797.6,566.0 799.0,560.7 800.0,555.3 800.7,550.2" fill="#a9a9a9" stroke="#1a1a1a" stroke-width="0.8" stroke-linejoin="round" /><polygon points="798.5,547.5 798.3,543.7 797.8,540.3 796.9,537.4 795.7,535.0 794.3,533.4 792.5,532.4 790.6,532.2 788.5,532.6 786.3,533.8 784.0,535.7 781.7,538.2 779.5,541.3 777.4,544.8 775.5,548.8 773.7,553.1 772.3,557.6 771.1,562.2 770.2,566.8 769.7,571.2 769.5,575.5 769.7,579.3 770.2,582.7 771.1,585.6 772.3,588.0 773.7,589.6 775.5,590.6 777.4,590.8 779.5,590.4 781.7,589.2 784.0,587.3 786.3,584.8 788.5,581.7 790.6,578.2 792.5,574.2 794.3,569.9 795.7,565.4 796.9,560.8 797.8,556.2 798.3,551.8" fill="#8e8e8e" stroke="#1a1a1a" stroke-width="0.8" stroke-linejoin="round" /><polygon points="796.5,549.5 796.3,546.2 795.9,543.2 795.1,540.7 794.1,538.7 792.8,537.3 791.3,536.5 789.7,536.3 787.9,536.7 786.0,537.7 784.0,539.3 782.0,541.5 780.1,544.1 778.3,547.2 776.7,550.6 775.2,554.3 773.9,558.2 772.9,562.1 772.1,566.1 771.7,569.9 771.5,573.5 771.7,576.8 772.1,579.8 772.9,582.3 773.9,584.3 775.2,585.7 776.7,586.5 778.3,586.7 780.1,586.3 782.0,585.3 784.0,583.7 786.0,581.5 787.9,578.9 789.7,575.8 791.3,572.4 792.8,568.7 794.1,564.8 795.1,560.9 795.9,556.9 796.3,553.1" fill="#b4b4b4" stroke="#1a1a1a" stroke-width="0.8" stroke-linejoin="round" /><polygon points="794.1,551.8 794.0,549.1 793.6,546.7 793.0,544.7 792.2,543.0 791.2,541.9 789.9,541.2 788.6,541.0 787.1,541.4 785.6,542.2 784.0,543.5 782.4,545.2 780.9,547.4 779.4,549.9 778.1,552.7 776.8,555.7 775.8,558.8 775.0,562.0 774.4,565.2 774.0,568.3 773.9,571.2 774.0,573.9 774.4,576.3 775.0,578.3 775.8,580.0 776.8,581.1 778.1,581.8 779.4,582.0 780.9,581.6 782.4,580.8 784.0,579.5 785.6,577.8 787.1,575.6 788.6,573.1 789.9,570.3 791.2,567.3 792.2,564.2 793.0,561.0 793.6,557.8 794.0,554.7" fill="#7d7d7d" stroke="#1a1a1a" stroke-width="0.8" stroke-linejoin="round" /><polygon points="792.4,553.4 792.3,551.1 792.0,549.1 791.5,547.5 790.8,546.1 790.0,545.2 789.0,544.6 787.8,544.5 786.6,544.7 785.3,545.4 784.0,546.5 782.7,548.0 781.4,549.7 780.2,551.8 779.0,554.1 778.0,556.6 777.2,559.2 776.5,561.9 776.0,564.6 775.7,567.2 775.6,569.6 775.7,571.9 776.0,573.9 776.5,575.5 777.2,576.9 778.0,577.8 779.0,578.4 780.2,578.5 781.4,578.3 782.7,577.6 784.0,576.5 785.3,575.0 786.6,573.3 787.8,571.2 789.0,568.9 790.0,566.4 790.8,563.8 791.5,561.1 792.0,558.4 792.3,555.8" fill="#2a2a2a" stroke="#1a1a1a" stroke-width="0.8" stroke-linejoin="round" /><polygon points="786.9,558.7 786.8,558.0 786.7,557.3 786.6,556.7 786.3,556.3 786.0,555.9 785.7,555.8 785.3,555.7 784.9,555.8 784.4,556.0 784.0,556.4 783.6,556.9 783.1,557.5 782.7,558.2 782.3,559.0 782.0,559.8 781.7,560.7 781.4,561.6 781.3,562.5 781.2,563.4 781.1,564.3 781.2,565.0 781.3,565.7 781.4,566.3 781.7,566.7 782.0,567.1 782.3,567.2 782.7,567.3 783.1,567.2 783.6,567.0 784.0,566.6 784.4,566.1 784.9,565.5 785.3,564.8 785.7,564.0 786.0,563.2 786.3,562.3 786.6,561.4 786.7,560.5 786.8,559.6" fill="#111" stroke="#1a1a1a" stroke-width="0.8" stroke-linejoin="round" /><polygon points="952.4,395.1 952.2,391.8 951.8,388.9 951.0,386.4 950.0,384.4 948.7,383.0 947.3,382.2 945.6,382.0 943.8,382.4 941.9,383.4 940.0,385.0 938.1,387.1 936.2,389.8 934.4,392.8 932.7,396.2 931.3,399.9 930.0,403.7 929.0,407.6 928.2,411.5 927.8,415.3 927.6,418.9 927.8,422.2 928.2,425.1 929.0,427.6 930.0,429.6 931.3,431.0 932.7,431.8 934.4,432.0 936.2,431.6 938.1,430.6 940.0,429.0 941.9,426.9 943.8,424.2 945.6,421.2 947.3,417.8 948.7,414.1 950.0,410.3 951.0,406.4 951.8,402.5 952.2,398.7" fill="#a9a9a9" stroke="#1a1a1a" stroke-width="0.8" stroke-linejoin="round" /><polygon points="950.6,396.8 950.5,393.9 950.1,391.4 949.5,389.3 948.6,387.6 947.5,386.4 946.2,385.7 944.8,385.5 943.3,385.8 941.7,386.7 940.0,388.1 938.3,389.9 936.7,392.2 935.2,394.8 933.8,397.7 932.5,400.9 931.4,404.2 930.5,407.5 929.9,410.9 929.5,414.1 929.4,417.2 929.5,420.1 929.9,422.6 930.5,424.7 931.4,426.4 932.5,427.6 933.8,428.3 935.2,428.5 936.7,428.2 938.3,427.3 940.0,425.9 941.7,424.1 943.3,421.8 944.8,419.2 946.2,416.3 947.5,413.1 948.6,409.8 949.5,406.5 950.1,403.1 950.5,399.9" fill="#8e8e8e" stroke="#1a1a1a" stroke-width="0.8" stroke-linejoin="round" /><polygon points="949.1,398.2 949.0,395.8 948.7,393.6 948.2,391.8 947.4,390.3 946.5,389.3 945.4,388.7 944.2,388.5 942.8,388.8 941.4,389.5 940.0,390.7 938.6,392.3 937.2,394.2 935.8,396.5 934.6,399.0 933.5,401.7 932.6,404.6 931.8,407.5 931.3,410.3 931.0,413.2 930.9,415.8 931.0,418.2 931.3,420.4 931.8,422.2 932.6,423.7 933.5,424.7 934.6,425.3 935.8,425.5 937.2,425.2 938.6,424.5 940.0,423.3 941.4,421.7 942.8,419.8 944.2,417.5 945.4,415.0 946.5,412.3 947.4,409.4 948.2,406.5 948.7,403.7 949.0,400.8" fill="#b4b4b4" stroke="#1a1a1a" stroke-width="0.8" stroke-linejoin="round" /><polygon points="947.4,399.9 947.3,397.9 947.1,396.1 946.6,394.6 946.0,393.5 945.2,392.6 944.4,392.1 943.4,392.0 942.3,392.2 941.2,392.8 940.0,393.8 938.8,395.1 937.7,396.7 936.6,398.5 935.6,400.5 934.8,402.7 934.0,405.0 933.4,407.4 932.9,409.7 932.7,412.0 932.6,414.1 932.7,416.1 932.9,417.9 933.4,419.4 934.0,420.5 934.8,421.4 935.6,421.9 936.6,422.0 937.7,421.8 938.8,421.2 940.0,420.2 941.2,418.9 942.3,417.3 943.4,415.5 944.4,413.5 945.2,411.3 946.0,409.0 946.6,406.6 947.1,404.3 947.3,402.0" fill="#7d7d7d" stroke="#1a1a1a" stroke-width="0.8" stroke-linejoin="round" /><polygon points="946.2,401.0 946.1,399.4 945.9,397.9 945.5,396.7 945.0,395.7 944.4,395.0 943.6,394.6 942.8,394.5 941.9,394.7 941.0,395.2 940.0,396.0 939.0,397.1 938.1,398.4 937.2,399.9 936.4,401.6 935.6,403.4 935.0,405.3 934.5,407.3 934.1,409.3 933.9,411.2 933.8,413.0 933.9,414.6 934.1,416.1 934.5,417.3 935.0,418.3 935.6,419.0 936.4,419.4 937.2,419.5 938.1,419.3 939.0,418.8 940.0,418.0 941.0,416.9 941.9,415.6 942.8,414.1 943.6,412.4 944.4,410.6 945.0,408.7 945.5,406.7 945.9,404.7 946.1,402.8" fill="#2a2a2a" stroke="#1a1a1a" stroke-width="0.8" stroke-linejoin="round" /><polygon points="942.1,405.0 942.1,404.4 942.0,403.9 941.9,403.5 941.7,403.2 941.5,402.9 941.2,402.8 941.0,402.7 940.6,402.8 940.3,403.0 940.0,403.3 939.7,403.6 939.4,404.1 939.0,404.6 938.8,405.2 938.5,405.8 938.3,406.4 938.1,407.1 938.0,407.8 937.9,408.4 937.9,409.0 937.9,409.6 938.0,410.1 938.1,410.5 938.3,410.8 938.5,411.1 938.8,411.2 939.0,411.3 939.4,411.2 939.7,411.0 940.0,410.7 940.3,410.4 940.6,409.9 941.0,409.4 941.2,408.8 941.5,408.2 941.7,407.6 941.9,406.9 942.0,406.2 942.1,405.6" fill="#111" stroke="#1a1a1a" stroke-width="0.8" stroke-linejoin="round" /><polygon points="798.0,530.0 904.0,447.0 912.0,455.0 806.0,540.0" fill="#262626" stroke="#0a0a0a" stroke-width="0.6" stroke-linejoin="round" /><polygon points="780.0,543.0 854.0,562.0 850.0,592.0 776.0,574.0" fill="#1b1b1b" stroke="#0a0a0a" stroke-width="0.6" stroke-linejoin="round" /><polyline points="779.0,558.0 852.0,577.0" fill="none" stroke="#2e2e2e" stroke-width="1" stroke-linecap="round" stroke-linejoin="round" /><path d="M752.5 598.3 L751.3 598.5 L750.0 599.5 L748.7 601.1 L747.5 603.1 L746.4 605.6 L745.6 608.2 L745.1 610.9 L744.9 613.4 L745.1 615.5 L745.6 617.2 L746.4 618.3 L747.5 618.7 L801.5 631.2 L802.7 631.0 L804.0 630.0 L805.3 628.4 L806.5 626.4 L807.6 623.9 L808.4 621.3 L808.9 618.6 L809.1 616.1 L808.9 614.0 L808.4 612.3 L807.6 611.2 L806.5 610.8Z " fill="#252525" fill-rule="evenodd" stroke="#0a0a0a" stroke-width="0.8" stroke-linejoin="round" /><path d="M1074.7 213.7 L1073.4 214.0 L1072.0 215.0 L1070.6 216.7 L1069.3 218.8 L1068.2 221.4 L1067.4 224.2 L1066.8 227.0 L1066.7 229.6 L1066.8 231.9 L1067.4 233.7 L1068.2 234.9 L1069.3 235.3 L1125.3 247.3 L1126.6 247.0 L1128.0 246.0 L1129.4 244.3 L1130.7 242.2 L1131.8 239.6 L1132.6 236.8 L1133.2 234.0 L1133.3 231.4 L1133.2 229.1 L1132.6 227.3 L1131.8 226.1 L1130.7 225.7Z " fill="#252525" fill-rule="evenodd" stroke="#0a0a0a" stroke-width="0.8" stroke-linejoin="round" /><path d="M1006.7 288.7 L1005.4 289.0 L1004.0 290.0 L1002.6 291.7 L1001.3 293.8 L1000.2 296.4 L999.4 299.2 L998.8 302.0 L998.7 304.6 L998.8 306.9 L999.4 308.7 L1000.2 309.9 L1001.3 310.3 L1055.3 322.8 L1056.6 322.5 L1058.0 321.5 L1059.4 319.8 L1060.7 317.7 L1061.8 315.1 L1062.6 312.3 L1063.2 309.5 L1063.3 306.9 L1063.2 304.6 L1062.6 302.8 L1061.8 301.6 L1060.7 301.2Z " fill="#252525" fill-rule="evenodd" stroke="#0a0a0a" stroke-width="0.8" stroke-linejoin="round" /><polygon points="1010.0,361.0 1022.0,355.0 1026.0,394.0 1016.0,402.0" fill="#f2b544" stroke="#d99a2c" stroke-width="0.8" stroke-linejoin="round" /><path d="M910.6 392.0 L910.1 389.6 L911.5 383.5 L910.5 381.5 L907.4 384.5 L906.3 383.5 L906.3 378.0 L904.6 377.8 L902.0 383.0 L900.3 383.7 L899.0 380.2 L897.0 381.8 L895.3 388.0 L893.7 390.1 L891.2 389.3 L889.4 392.5 L889.1 398.2 L887.7 401.3 L884.7 403.5 L883.6 407.0 L890.7 407.0 L891.0 406.1 L891.9 404.0 L892.8 402.1 L893.8 400.2 L894.8 398.6 L895.9 397.2 L897.0 396.0 L898.1 395.1 L899.2 394.4 L900.2 394.0 L901.2 394.0 L902.1 394.2 L903.0 394.7 L903.7 395.4 L904.3 396.5 L904.8 397.8 L905.1 399.3 L905.4 401.0 L905.4 402.9 L905.4 404.9 L905.1 407.0 L912.2 407.0 L912.3 406.6 L910.6 403.9 L910.9 400.7 L913.4 395.2 L913.3 391.8Z " fill="#eeb042" fill-rule="evenodd" stroke="#d99a2c" stroke-width="0.8" stroke-linejoin="round" /><path d="M1186.6 188.0 L1183.2 189.1 L1180.5 190.5 L1180.1 190.7 L1178.8 190.1 L1178.5 190.3 L1177.1 189.7 L1176.8 189.9 L1175.5 189.3 L1175.1 189.5 L1173.8 188.9 L1173.5 189.0 L1172.1 188.5 L1171.8 188.6 L1170.5 188.0 L1169.8 188.4 L1169.3 188.8 L1169.2 188.7 L1169.0 188.8 L1168.9 188.9 L1167.5 188.3 L1167.3 188.4 L1167.2 188.5 L1165.8 187.9 L1165.7 188.0 L1165.4 188.2 L1165.1 188.5 L837.3 530.7 L837.0 531.0 L836.8 531.4 L821.2 556.7 L821.0 557.0 L820.9 557.3 L811.0 580.9 L811.0 581.1 L803.1 603.7 L802.9 604.3 L801.1 613.6 L801.0 614.0 L801.0 614.4 L801.0 623.3 L801.0 623.7 L801.1 624.1 L801.2 624.5 L801.3 624.9 L801.5 625.2 L801.7 625.6 L802.0 625.9 L802.3 626.2 L810.8 634.1 L811.8 633.9 L812.5 634.5 L813.5 634.3 L814.2 635.0 L815.1 634.7 L815.8 635.4 L816.8 635.1 L817.5 635.8 L818.5 635.6 L819.2 636.2 L820.1 636.0 L820.8 636.6 L831.5 634.1 L832.0 634.0 L832.4 633.8 L853.7 623.1 L854.0 623.0 L854.3 622.8 L887.0 599.0 L887.0 599.0 L971.0 534.0 L1041.9 479.1 L1042.0 479.0 L1042.1 479.0 L1075.0 477.1 L1075.4 477.0 L1075.8 476.9 L1076.1 476.8 L1076.5 476.7 L1076.8 476.5 L1105.1 459.5 L1105.4 459.3 L1105.8 459.0 L1106.0 458.8 L1106.3 458.4 L1106.5 458.1 L1126.0 424.1 L1126.0 423.9 L1143.9 390.1 L1144.1 389.9 L1166.0 360.1 L1166.0 359.9 L1193.6 319.6 L1193.8 319.2 L1194.0 318.8 L1194.2 318.3 L1205.7 275.0 L1205.8 274.6 L1205.9 274.2 L1205.9 273.8 L1205.8 273.4 L1205.8 273.0 L1203.6 263.8 L1204.5 260.0 L1206.0 252.9 L1207.2 245.8 L1208.1 238.9 L1208.6 232.2 L1208.8 225.8 L1208.6 219.7 L1208.1 214.0 L1207.2 208.7 L1206.0 203.9 L1204.5 199.7 L1202.7 196.1 L1200.6 193.0 L1198.2 190.7 L1197.8 190.4 L1196.8 190.5 L1196.6 190.2 L1196.1 190.0 L1195.1 190.1 L1194.9 189.8 L1194.5 189.5 L1193.5 189.7 L1193.2 189.4 L1192.8 189.1 L1191.8 189.2 L1191.6 189.0 L1191.1 188.7 L1190.1 188.8 L1189.9 188.6 L1189.5 188.3 L1188.5 188.4 L1188.2 188.2 L1187.8 187.9Z M1172.8 219.4 L1175.8 216.9 L1178.8 215.1 L1180.3 214.5 L1181.1 215.3 L1182.8 218.2 L1184.1 221.7 L1185.1 225.9 L1185.6 230.6 L1185.8 235.7 L1185.6 241.3 L1185.1 247.1 L1184.1 253.1 L1182.8 259.2 L1181.1 265.3 L1179.1 271.2 L1176.8 276.9 L1174.3 282.3 L1171.6 287.3 L1168.8 291.8 L1165.8 295.7 L1162.8 298.9 L1159.8 301.4 L1156.8 303.2 L1155.3 303.8 L1154.5 303.0 L1152.8 300.1 L1151.5 296.6 L1150.5 292.4 L1150.0 287.7 L1149.8 282.6 L1150.0 277.0 L1150.5 271.2 L1151.5 265.2 L1152.8 259.1 L1154.5 253.0 L1156.5 247.1 L1158.8 241.4 L1161.3 236.0 L1164.0 231.0 L1166.8 226.5 L1169.8 222.6Z M1095.1 290.4 L1095.3 290.2 L1095.4 289.9 L1095.6 289.7 L1121.1 259.1 L1121.3 258.9 L1121.5 258.7 L1121.8 258.5 L1122.0 258.3 L1122.3 258.2 L1122.5 258.1 L1122.8 258.1 L1123.1 258.0 L1123.4 258.0 L1127.8 258.0 L1127.8 258.0 L1127.9 258.3 L1127.9 258.6 L1127.1 280.1 L1127.0 280.4 L1127.0 280.7 L1126.9 281.0 L1126.8 281.2 L1126.6 281.5 L1126.5 281.7 L1126.3 282.0 L1126.1 282.2 L1125.9 282.4 L1111.0 293.8 L1110.7 293.9 L1110.5 294.1 L1110.2 294.2 L1109.9 294.3 L1109.7 294.3 L1109.4 294.4 L1109.1 294.4 L1108.8 294.4 L1095.2 292.9 L1095.1 292.7 L1095.0 292.5 L1094.9 292.2 L1094.9 291.9 L1094.9 291.6 L1094.9 291.3 L1095.0 291.0 L1095.0 290.7Z M1058.5 332.5 L1058.7 332.3 L1058.8 332.0 L1059.0 331.8 L1077.7 311.6 L1079.4 313.1 L1079.6 313.3 L1079.8 313.5 L1080.0 313.7 L1080.1 314.0 L1080.2 314.2 L1080.3 314.5 L1080.4 314.8 L1080.4 315.1 L1080.4 315.4 L1080.4 315.6 L1080.3 315.9 L1080.3 316.2 L1080.2 316.5 L1068.1 344.5 L1059.1 336.0 L1058.9 335.8 L1058.8 335.6 L1058.6 335.4 L1058.5 335.1 L1058.4 334.8 L1058.3 334.5 L1058.2 334.3 L1058.2 334.0 L1058.2 333.7 L1058.3 333.4 L1058.3 333.1 L1058.4 332.8Z M1013.2 381.1 L1013.3 380.8 L1013.4 380.5 L1013.6 380.3 L1013.8 380.1 L1036.3 356.1 L1041.2 366.0 L1041.3 366.2 L1041.4 366.5 L1041.5 366.8 L1041.5 367.1 L1041.6 367.3 L1041.5 367.6 L1041.5 367.9 L1041.4 368.2 L1041.3 368.4 L1041.2 368.7 L1041.1 368.9 L1023.5 396.1 L1013.7 384.0 L1013.5 383.8 L1013.3 383.6 L1013.2 383.3 L1013.1 383.0 L1013.0 382.7 L1013.0 382.5 L1013.0 382.2 L1013.0 381.9 L1013.0 381.6 L1013.1 381.3Z M961.2 427.1 L961.3 426.8 L961.5 426.5 L961.6 426.3 L961.8 426.1 L998.8 387.5 L1004.9 397.7 L1005.1 398.0 L1005.2 398.3 L1005.3 398.6 L1005.3 398.9 L1005.4 399.2 L1005.4 399.5 L1005.3 399.8 L1005.3 400.1 L1005.2 400.3 L1005.0 400.6 L1004.9 400.9 L1004.7 401.1 L971.9 442.6 L961.7 430.1 L961.5 429.8 L961.4 429.6 L961.2 429.3 L961.1 429.0 L961.1 428.8 L961.0 428.5 L961.0 428.2 L961.0 427.9 L961.1 427.6 L961.1 427.3Z M937.6 472.7 L937.9 472.6 L938.2 472.5 L938.4 472.5 L967.6 480.6 L967.9 480.7 L968.2 480.8 L968.4 480.9 L968.6 481.1 L968.9 481.3 L969.1 481.5 L969.2 481.7 L969.4 481.9 L969.5 482.2 L969.7 482.4 L969.7 482.7 L969.8 483.0 L969.8 483.3 L969.8 483.6 L969.8 483.9 L969.7 484.1 L969.7 484.4 L969.6 484.7 L952.9 521.5 L936.1 476.5 L936.0 476.2 L935.9 475.9 L935.9 475.6 L935.9 475.3 L935.9 475.0 L936.0 474.7 L936.0 474.5 L936.2 474.2 L936.3 473.9 L936.5 473.7 L936.7 473.4 L936.9 473.2 L937.1 473.0 L937.4 472.9Z M991.8 488.0 L992.1 487.5 L992.5 487.0 L992.7 486.8 L992.8 487.0 L992.9 487.5 L993.0 488.1 L993.0 488.7 L992.9 489.3 L992.8 489.9 L992.7 490.4 L992.5 491.0 L992.2 491.5 L981.2 510.5 L980.9 511.0 L980.5 511.5 L980.3 511.7 L980.2 511.5 L980.1 511.0 L980.0 510.4 L980.0 509.8 L980.1 509.2 L980.2 508.6 L980.3 508.1 L980.5 507.5 L980.8 507.0Z M866.1 532.5 L866.4 532.0 L882.4 507.0 L882.5 506.9 L882.5 507.4 L882.5 507.9 L882.4 508.5 L882.3 509.0 L882.1 509.5 L881.9 510.0 L881.6 510.5 L865.6 535.5 L865.5 535.6 L865.5 535.1 L865.5 534.6 L865.6 534.0 L865.7 533.5 L865.9 533.0Z M942.7 535.5 L942.5 535.7 L942.3 535.9 L909.5 562.9 L925.8 490.1 L943.2 532.4 L943.3 532.7 L943.3 533.0 L943.4 533.3 L943.4 533.6 L943.4 533.9 L943.3 534.2 L943.3 534.5 L943.2 534.7 L943.0 535.0 L942.9 535.3Z M874.1 551.0 L874.2 550.8 L874.3 550.6 L874.4 550.4 L887.2 532.0 L878.5 582.6 L878.4 582.9 L878.4 583.1 L878.3 583.3 L878.2 583.5 L878.0 583.7 L877.9 583.9 L877.7 584.1 L877.5 584.2 L877.3 584.4 L877.2 584.4 L874.8 583.6 L874.5 583.5 L874.3 583.4 L874.1 583.3 L873.9 583.1 L873.7 582.9 L873.6 582.7 L873.4 582.5 L873.3 582.3 L873.2 582.1 L873.1 581.9 L873.1 581.6 L873.1 581.4 L873.1 581.1 L874.0 551.7 L874.0 551.5 L874.0 551.3Z " fill="#27702f" fill-rule="evenodd" stroke="#111" stroke-width="0.9" stroke-linejoin="round" /><path d="M1061.2 309.9 L1070.1 312.1 L1070.4 312.2 L1070.7 312.2 L1071.0 312.2 L1071.3 312.1 L1071.6 312.1 L1071.9 312.0 L1072.2 311.8 L1072.5 311.7 L1072.7 311.5 L1073.0 311.3 L1073.2 311.0 L1073.4 310.8 L1063.4 308.3 L1063.2 308.5 L1063.0 308.8 L1062.7 309.0 L1062.5 309.2 L1062.2 309.3 L1061.9 309.5 L1061.6 309.6 L1061.5 309.6 L1175.1 191.0 L1175.3 190.8 L1178.7 191.7 L1188.7 194.2 L1189.8 193.4 L1193.2 191.6 L1196.6 190.5 L1197.8 190.4 L1196.8 190.5 L1196.6 190.2 L1196.1 190.0 L1195.1 190.1 L1194.9 189.8 L1194.5 189.5 L1193.5 189.7 L1193.2 189.4 L1192.8 189.1 L1191.8 189.2 L1191.6 189.0 L1191.1 188.7 L1190.1 188.8 L1189.9 188.6 L1189.5 188.3 L1188.5 188.4 L1188.2 188.2 L1187.8 187.9 L1186.6 188.0 L1183.2 189.1 L1179.8 190.9 L1180.5 190.5 L1180.1 190.7 L1178.8 190.1 L1178.5 190.3 L1177.1 189.7 L1176.8 189.9 L1175.5 189.3 L1175.1 189.5 L1173.8 188.9 L1173.5 189.0 L1172.1 188.5 L1171.8 188.6 L1170.5 188.0 L1169.8 188.4 L1169.3 188.8 L1169.2 188.7 L1169.0 188.8 L1168.9 188.9 L1167.5 188.3 L1167.3 188.4 L1167.2 188.5 L1165.8 187.9 L1165.7 188.0 L1165.4 188.2 L1165.1 188.5 L837.3 530.7 L837.0 531.0 L836.8 531.4 L846.8 533.9 L847.0 533.5 L847.3 533.2Z M862.7 537.7 L862.2 537.9 L861.6 538.0 L861.1 538.0 L860.6 538.0 L860.0 537.9 L859.5 537.8 L869.5 540.3 L870.0 540.4 L870.6 540.5 L871.1 540.5 L871.6 540.5 L872.2 540.4 L872.7 540.2 L873.2 540.0 L873.7 539.8 L874.1 539.5 L874.6 539.2 L875.0 538.8 L875.3 538.4 L875.6 538.0 L865.6 535.5 L865.5 535.6 L865.3 535.9 L865.0 536.3 L864.6 536.7 L864.1 537.0 L863.7 537.3 L863.2 537.5Z M876.9 584.6 L876.7 584.6 L876.4 584.7 L876.2 584.7 L875.9 584.7 L875.7 584.7 L875.5 584.6 L885.5 587.1 L885.7 587.2 L885.9 587.2 L886.2 587.2 L886.4 587.2 L886.7 587.1 L886.9 587.1 L887.1 587.0 L887.3 586.9 L887.5 586.7 L887.7 586.6 L887.9 586.4 L888.0 586.2 L888.2 586.0 L878.2 583.5 L878.0 583.7 L877.9 583.9 L877.7 584.1 L877.5 584.2 L877.3 584.4 L877.1 584.5Z M810.1 625.1 L809.9 625.2 L809.6 625.2 L809.3 625.3 L809.0 625.3 L808.7 625.3 L808.4 625.2 L818.4 627.7 L818.7 627.8 L819.0 627.8 L819.3 627.8 L819.6 627.7 L819.9 627.7 L820.1 627.6 L820.4 627.4 L820.7 627.3 L820.9 627.1 L821.1 626.9 L821.3 626.7 L821.5 626.5 L811.5 624.0 L811.3 624.2 L811.1 624.4 L810.9 624.6 L810.7 624.8 L810.4 624.9Z M968.9 445.6 L968.6 445.7 L968.3 445.7 L968.0 445.7 L967.7 445.7 L967.4 445.7 L967.1 445.6 L977.1 448.1 L977.4 448.2 L977.7 448.2 L978.0 448.2 L978.3 448.2 L978.6 448.2 L978.9 448.1 L979.1 448.0 L979.4 447.8 L979.7 447.7 L979.9 447.5 L980.1 447.3 L980.3 447.1 L1014.7 403.6 L1014.9 403.4 L1004.9 400.9 L1004.7 401.1 L970.3 444.6 L970.1 444.8 L969.9 445.0 L969.7 445.2 L969.4 445.3 L969.1 445.5Z M984.6 515.8 L985.2 515.9 L985.8 516.0 L986.4 516.0 L987.0 515.9 L987.5 515.8 L988.1 515.6 L988.6 515.4 L989.2 515.1 L989.6 514.8 L990.1 514.4 L990.5 514.0 L990.9 513.5 L980.9 511.0 L980.5 511.5 L980.3 511.7 L980.3 511.7 L980.1 511.9 L979.6 512.3 L979.2 512.6 L978.6 512.9 L978.1 513.1 L977.5 513.3 L977.0 513.4 L976.4 513.5 L975.8 513.5 L975.2 513.4 L974.6 513.3Z M949.0 527.5 L948.7 527.6 L948.5 527.6 L948.2 527.6 L947.9 527.6 L947.6 527.6 L957.6 530.1 L957.9 530.1 L958.2 530.1 L958.5 530.1 L958.7 530.1 L959.0 530.0 L959.3 529.9 L959.6 529.8 L959.8 529.7 L960.1 529.5 L960.3 529.3 L960.5 529.1 L960.7 528.9 L950.7 526.4 L950.5 526.6 L950.3 526.8 L950.1 527.0 L949.8 527.2 L949.6 527.3 L949.3 527.4Z M902.5 568.4 L902.2 568.5 L901.9 568.6 L901.6 568.6 L901.3 568.6 L901.0 568.6 L900.7 568.6 L910.7 571.1 L911.0 571.1 L911.3 571.1 L911.6 571.1 L911.9 571.1 L912.2 571.0 L912.5 570.9 L912.8 570.8 L913.0 570.6 L913.2 570.5 L952.3 538.4 L952.5 538.2 L952.7 538.0 L952.9 537.8 L942.9 535.3 L942.7 535.5 L942.5 535.7 L942.3 535.9 L909.5 562.9 L909.5 562.9 L903.2 568.0 L903.0 568.1 L902.8 568.3Z M1020.6 399.3 L1020.3 399.4 L1020.0 399.4 L1019.7 399.4 L1019.4 399.4 L1019.1 399.4 L1029.1 401.9 L1029.4 401.9 L1029.7 401.9 L1030.0 401.9 L1030.3 401.9 L1030.6 401.8 L1030.9 401.7 L1031.2 401.5 L1031.4 401.4 L1031.6 401.2 L1031.9 401.0 L1032.1 400.8 L1032.2 400.5 L1022.2 398.0 L1022.1 398.3 L1021.9 398.5 L1021.6 398.7 L1021.4 398.9 L1021.2 399.0 L1020.9 399.2Z M1023.2 487.4 L1013.2 484.9 L1013.0 485.1 L1012.8 485.3 L1012.6 485.5 L1012.4 485.7 L1012.1 485.8 L1011.8 486.0 L1011.6 486.1 L1011.3 486.1 L1011.0 486.2 L1010.7 486.2 L1010.4 486.2 L1010.1 486.1 L1020.1 488.6 L1020.4 488.7 L1020.7 488.7 L1021.0 488.7 L1021.3 488.6 L1021.6 488.6 L1021.8 488.5 L1022.1 488.3 L1022.4 488.2 L1022.6 488.0 L1022.8 487.8 L1023.0 487.6Z M1137.0 245.5 L1137.3 245.5 L1137.6 245.5 L1137.9 245.4 L1138.2 245.4 L1138.5 245.3 L1138.8 245.1 L1139.1 245.0 L1139.3 244.8 L1139.6 244.6 L1139.8 244.3 L1140.0 244.1 L1130.0 241.6 L1129.8 241.8 L1129.6 242.1 L1129.3 242.3 L1129.1 242.5 L1128.8 242.6 L1128.5 242.8 L1128.2 242.9 L1127.9 242.9 L1127.6 243.0 L1127.3 243.0 L1127.0 243.0 L1126.7 242.9 L1136.7 245.4Z M1110.5 294.1 L1110.2 294.2 L1109.9 294.3 L1109.7 294.3 L1109.4 294.4 L1109.1 294.4 L1108.8 294.4 L1087.6 292.1 L1087.3 292.1 L1097.3 294.6 L1097.6 294.6 L1118.8 296.9 L1119.1 296.9 L1119.4 296.9 L1119.7 296.8 L1119.9 296.8 L1120.2 296.7 L1120.5 296.6 L1120.7 296.4 L1121.0 296.3 L1135.9 284.9 L1136.1 284.7 L1136.3 284.5 L1136.5 284.2 L1126.5 281.7 L1126.3 282.0 L1126.1 282.2 L1125.9 282.4 L1111.0 293.8 L1110.7 293.9Z M1077.4 348.5 L1067.4 346.0 L1067.2 346.3 L1067.1 346.5 L1066.8 346.7 L1066.6 346.9 L1066.4 347.0 L1066.1 347.1 L1065.8 347.2 L1065.5 347.3 L1065.3 347.3 L1065.0 347.4 L1064.7 347.4 L1064.4 347.3 L1064.1 347.2 L1074.1 349.7 L1074.4 349.8 L1074.7 349.9 L1075.0 349.9 L1075.3 349.8 L1075.5 349.8 L1075.8 349.7 L1076.1 349.6 L1076.4 349.5 L1076.6 349.4 L1076.8 349.2 L1077.1 349.0 L1077.2 348.8Z M1173.2 201.3 L1172.9 201.3 L1172.6 201.4 L1172.3 201.4 L1172.0 201.4 L1171.7 201.3 L1181.7 203.8 L1182.0 203.9 L1182.3 203.9 L1182.6 203.9 L1182.9 203.8 L1183.2 203.8 L1183.5 203.7 L1183.8 203.5 L1184.1 203.4 L1184.3 203.2 L1184.6 203.0 L1184.8 202.7 L1185.0 202.5 L1175.0 200.0 L1174.8 200.2 L1174.6 200.5 L1174.3 200.7 L1174.1 200.9 L1173.8 201.0 L1173.5 201.2Z M1151.3 304.5 L1148.8 303.9 L1158.8 306.4 L1161.3 307.0 L1164.0 306.8 L1166.8 305.7 L1169.8 303.9 L1172.8 301.4 L1175.8 298.2 L1178.8 294.3 L1168.8 291.8 L1165.8 295.7 L1162.8 298.9 L1159.8 301.4 L1156.8 303.2 L1155.3 303.8 L1154.0 304.3Z " fill="#46a350" fill-rule="evenodd" stroke="none" stroke-width="0" stroke-linejoin="round" /><path d="M1207.2 208.7 L1206.0 203.9 L1204.5 199.7 L1202.7 196.1 L1200.6 193.0 L1198.2 190.7 L1197.8 190.4 L1196.6 190.5 L1193.2 191.6 L1189.8 193.4 L1188.7 194.2 L1180.5 190.5 L1179.8 190.9 L1178.7 191.7 L1175.8 190.4 L1175.7 190.5 L1175.4 190.7 L1175.1 191.0 L847.3 533.2 L847.0 533.5 L846.8 533.9 L831.2 559.2 L831.0 559.5 L830.9 559.8 L821.0 583.4 L821.0 583.6 L813.1 606.2 L812.9 606.8 L811.1 616.1 L811.0 616.5 L811.0 616.9 L811.0 625.8 L811.0 626.2 L811.1 626.6 L811.2 627.0 L811.3 627.4 L811.5 627.7 L811.7 628.1 L812.0 628.4 L812.3 628.7 L820.8 636.6 L831.5 634.1 L832.0 634.0 L832.4 633.8 L853.7 623.1 L854.0 623.0 L854.3 622.8 L887.0 599.0 L887.0 599.0 L971.0 534.0 L1041.9 479.1 L1042.0 479.0 L1042.1 479.0 L1075.0 477.1 L1075.4 477.0 L1075.8 476.9 L1076.1 476.8 L1076.5 476.7 L1076.8 476.5 L1105.1 459.5 L1105.4 459.3 L1105.8 459.0 L1106.0 458.8 L1106.3 458.4 L1106.5 458.1 L1126.0 424.1 L1126.0 423.9 L1143.9 390.1 L1144.1 389.9 L1166.0 360.1 L1166.0 359.9 L1193.6 319.6 L1193.8 319.2 L1194.0 318.8 L1194.2 318.3 L1205.7 275.0 L1205.8 274.6 L1205.9 274.2 L1205.9 273.8 L1205.8 273.4 L1205.8 273.0 L1203.6 263.8 L1204.5 260.0 L1206.0 252.9 L1207.2 245.8 L1208.1 238.9 L1208.6 232.2 L1208.8 225.8 L1208.6 219.7 L1208.1 214.0Z M961.5 426.5 L961.6 426.3 L961.8 426.1 L1001.3 384.8 L1001.5 384.6 L1001.7 384.5 L1002.0 384.3 L1002.2 384.2 L1002.5 384.1 L1002.8 384.0 L1003.1 383.9 L1003.3 383.9 L1003.6 383.9 L1003.9 384.0 L1004.2 384.0 L1004.5 384.1 L1004.8 384.2 L1005.0 384.4 L1005.3 384.5 L1005.5 384.7 L1005.7 384.9 L1005.9 385.1 L1006.0 385.4 L1014.9 400.2 L1015.1 400.5 L1015.2 400.8 L1015.3 401.1 L1015.3 401.4 L1015.4 401.7 L1015.4 402.0 L1015.3 402.3 L1015.3 402.6 L1015.2 402.8 L1015.0 403.1 L1014.9 403.4 L1014.7 403.6 L980.3 447.1 L980.1 447.3 L979.9 447.5 L979.7 447.7 L979.4 447.8 L979.1 448.0 L978.9 448.1 L978.6 448.2 L978.3 448.2 L978.0 448.2 L977.7 448.2 L977.4 448.2 L977.1 448.1 L976.8 448.0 L976.6 447.9 L976.3 447.7 L976.1 447.5 L975.8 447.3 L975.6 447.1 L961.7 430.1 L961.5 429.8 L961.4 429.6 L961.2 429.3 L961.1 429.0 L961.1 428.8 L961.0 428.5 L961.0 428.2 L961.0 427.9 L961.1 427.6 L961.1 427.3 L961.2 427.1 L961.3 426.8Z M1023.6 484.8 L1023.6 485.1 L1023.7 485.4 L1023.7 485.7 L1023.7 486.0 L1023.6 486.3 L1023.6 486.6 L1023.5 486.8 L1023.3 487.1 L1023.2 487.4 L1023.0 487.6 L1022.8 487.8 L1022.6 488.0 L1022.4 488.2 L1022.1 488.3 L1021.8 488.5 L1021.6 488.6 L1021.3 488.6 L1021.0 488.7 L1020.7 488.7 L1020.4 488.7 L1020.1 488.6 L1019.8 488.6 L1019.6 488.5 L1019.3 488.3 L1019.0 488.2 L1018.8 488.0 L1018.6 487.8 L1018.4 487.6 L1018.2 487.4 L1018.1 487.1 L1017.9 486.8 L1017.8 486.6 L1017.8 486.3 L1017.7 486.0 L1017.7 485.7 L1017.7 485.4 L1017.8 485.1 L1017.8 484.8 L1017.9 484.6 L1018.1 484.3 L1018.2 484.0 L1018.4 483.8 L1018.6 483.6 L1018.8 483.4 L1019.0 483.2 L1019.3 483.1 L1019.6 482.9 L1019.8 482.8 L1020.1 482.8 L1020.4 482.7 L1020.7 482.7 L1021.0 482.7 L1021.3 482.8 L1021.6 482.8 L1021.8 482.9 L1022.1 483.1 L1022.4 483.2 L1022.6 483.4 L1022.8 483.6 L1023.0 483.8 L1023.2 484.0 L1023.3 484.3 L1023.5 484.6Z M1002.8 492.4 L1002.7 492.9 L1002.5 493.5 L1002.2 494.0 L991.2 513.0 L990.9 513.5 L990.5 514.0 L990.1 514.4 L989.6 514.8 L989.2 515.1 L988.6 515.4 L988.1 515.6 L987.5 515.8 L987.0 515.9 L986.4 516.0 L985.8 516.0 L985.2 515.9 L984.6 515.8 L984.1 515.7 L983.5 515.5 L983.0 515.2 L982.5 514.9 L982.0 514.5 L981.6 514.1 L981.2 513.6 L980.9 513.2 L980.6 512.6 L980.4 512.1 L980.2 511.5 L980.1 511.0 L980.0 510.4 L980.0 509.8 L980.1 509.2 L980.2 508.6 L980.3 508.1 L980.5 507.5 L980.8 507.0 L991.8 488.0 L992.1 487.5 L992.5 487.0 L992.9 486.6 L993.4 486.2 L993.8 485.9 L994.4 485.6 L994.9 485.4 L995.5 485.2 L996.0 485.1 L996.6 485.0 L997.2 485.0 L997.8 485.1 L998.4 485.2 L998.9 485.3 L999.5 485.5 L1000.0 485.8 L1000.5 486.1 L1001.0 486.5 L1001.4 486.9 L1001.8 487.4 L1002.1 487.8 L1002.4 488.4 L1002.6 488.9 L1002.8 489.5 L1002.9 490.0 L1003.0 490.6 L1003.0 491.2 L1002.9 491.8Z M938.8 472.5 L939.1 472.5 L939.4 472.5 L939.7 472.6 L977.6 483.1 L977.9 483.2 L978.2 483.3 L978.4 483.4 L978.6 483.6 L978.9 483.8 L979.1 484.0 L979.2 484.2 L979.4 484.4 L979.5 484.7 L979.7 484.9 L979.7 485.2 L979.8 485.5 L979.8 485.8 L979.8 486.1 L979.8 486.4 L979.7 486.6 L979.7 486.9 L979.6 487.2 L961.0 528.4 L960.9 528.6 L960.7 528.9 L960.5 529.1 L960.3 529.3 L960.1 529.5 L959.8 529.7 L959.6 529.8 L959.3 529.9 L959.0 530.0 L958.7 530.1 L958.5 530.1 L958.2 530.1 L957.9 530.1 L957.6 530.1 L957.3 530.0 L957.0 529.9 L956.8 529.7 L956.5 529.6 L956.3 529.4 L956.1 529.2 L955.9 529.0 L955.7 528.7 L955.6 528.5 L955.4 528.2 L936.1 476.5 L936.0 476.2 L935.9 475.9 L935.9 475.6 L935.9 475.3 L935.9 475.0 L936.0 474.7 L936.0 474.5 L936.2 474.2 L936.3 473.9 L936.5 473.7 L936.7 473.4 L936.9 473.2 L937.1 473.0 L937.4 472.9 L937.6 472.7 L937.9 472.6 L938.2 472.5 L938.5 472.5Z M892.3 511.5 L892.1 512.0 L891.9 512.5 L891.6 513.0 L875.6 538.0 L875.3 538.4 L875.0 538.8 L874.6 539.2 L874.1 539.5 L873.7 539.8 L873.2 540.0 L872.7 540.2 L872.2 540.4 L871.6 540.5 L871.1 540.5 L870.6 540.5 L870.0 540.4 L869.5 540.3 L869.0 540.1 L868.5 539.9 L868.0 539.6 L867.6 539.3 L867.2 539.0 L866.8 538.6 L866.5 538.1 L866.2 537.7 L866.0 537.2 L865.8 536.7 L865.6 536.2 L865.5 535.6 L865.5 535.1 L865.5 534.6 L865.6 534.0 L865.7 533.5 L865.9 533.0 L866.1 532.5 L866.4 532.0 L882.4 507.0 L882.7 506.6 L883.0 506.2 L883.4 505.8 L883.9 505.5 L884.3 505.2 L884.8 505.0 L885.3 504.8 L885.8 504.6 L886.4 504.5 L886.9 504.5 L887.4 504.5 L888.0 504.6 L888.5 504.7 L889.0 504.9 L889.5 505.1 L890.0 505.4 L890.4 505.7 L890.8 506.0 L891.2 506.4 L891.5 506.9 L891.8 507.3 L892.0 507.8 L892.2 508.3 L892.4 508.8 L892.5 509.4 L892.5 509.9 L892.5 510.4 L892.4 511.0Z M932.2 484.1 L932.3 484.3 L932.5 484.5 L932.6 484.8 L953.2 534.9 L953.3 535.2 L953.3 535.5 L953.4 535.8 L953.4 536.1 L953.4 536.4 L953.3 536.7 L953.3 537.0 L953.2 537.2 L953.0 537.5 L952.9 537.8 L952.7 538.0 L952.5 538.2 L952.3 538.4 L913.2 570.5 L913.0 570.6 L912.8 570.8 L912.5 570.9 L912.2 571.0 L911.9 571.1 L911.6 571.1 L911.3 571.1 L911.0 571.1 L910.7 571.1 L910.4 571.0 L910.2 570.9 L909.9 570.8 L909.6 570.6 L909.4 570.4 L909.2 570.2 L909.0 570.0 L908.8 569.8 L908.7 569.5 L908.6 569.2 L908.5 569.0 L908.4 568.7 L908.4 568.4 L908.3 568.1 L908.4 567.8 L908.4 567.5 L926.9 485.3 L927.0 485.0 L927.1 484.7 L927.2 484.5 L927.4 484.2 L927.6 484.0 L927.8 483.8 L928.0 483.6 L928.2 483.4 L928.5 483.3 L928.7 483.2 L929.0 483.1 L929.3 483.0 L929.6 483.0 L929.9 483.0 L930.2 483.0 L930.5 483.0 L930.7 483.1 L931.0 483.2 L931.3 483.3 L931.5 483.5 L931.8 483.6 L932.0 483.8Z M899.1 522.4 L899.1 522.6 L899.1 522.9 L899.1 523.1 L888.5 585.1 L888.4 585.4 L888.4 585.6 L888.3 585.8 L888.2 586.0 L888.0 586.2 L887.9 586.4 L887.7 586.6 L887.5 586.7 L887.3 586.9 L887.1 587.0 L886.9 587.1 L886.7 587.1 L886.4 587.2 L886.2 587.2 L885.9 587.2 L885.7 587.2 L885.5 587.1 L885.2 587.1 L874.8 583.6 L874.5 583.5 L874.3 583.4 L874.1 583.3 L873.9 583.1 L873.7 582.9 L873.6 582.7 L873.4 582.5 L873.3 582.3 L873.2 582.1 L873.1 581.9 L873.1 581.6 L873.1 581.4 L873.1 581.1 L874.0 551.7 L874.0 551.5 L874.0 551.3 L874.1 551.0 L874.2 550.8 L874.3 550.6 L874.4 550.4 L894.6 521.3 L894.7 521.1 L894.9 520.9 L895.1 520.7 L895.3 520.6 L895.5 520.5 L895.7 520.4 L895.9 520.3 L896.2 520.2 L896.4 520.2 L896.6 520.2 L896.9 520.2 L897.1 520.2 L897.4 520.3 L897.6 520.4 L897.8 520.5 L898.0 520.6 L898.2 520.8 L898.4 520.9 L898.5 521.1 L898.7 521.3 L898.8 521.5 L898.9 521.7 L899.0 521.9 L899.1 522.2Z M821.9 623.9 L821.9 624.2 L822.0 624.5 L822.0 624.8 L822.0 625.1 L821.9 625.4 L821.9 625.7 L821.8 625.9 L821.6 626.2 L821.5 626.5 L821.3 626.7 L821.1 626.9 L820.9 627.1 L820.7 627.3 L820.4 627.4 L820.1 627.6 L819.9 627.7 L819.6 627.7 L819.3 627.8 L819.0 627.8 L818.7 627.8 L818.4 627.7 L818.1 627.7 L817.9 627.6 L817.6 627.4 L817.3 627.3 L817.1 627.1 L816.9 626.9 L816.7 626.7 L816.5 626.5 L816.4 626.2 L816.2 625.9 L816.1 625.7 L816.1 625.4 L816.0 625.1 L816.0 624.8 L816.0 624.5 L816.1 624.2 L816.1 623.9 L816.2 623.7 L816.4 623.4 L816.5 623.1 L816.7 622.9 L816.9 622.7 L817.1 622.5 L817.3 622.3 L817.6 622.2 L817.9 622.0 L818.1 621.9 L818.4 621.9 L818.7 621.8 L819.0 621.8 L819.3 621.8 L819.6 621.9 L819.9 621.9 L820.1 622.0 L820.4 622.2 L820.7 622.3 L820.9 622.5 L821.1 622.7 L821.3 622.9 L821.5 623.1 L821.6 623.4 L821.8 623.7Z M1185.4 199.8 L1185.4 200.1 L1185.5 200.4 L1185.5 200.7 L1185.5 201.0 L1185.4 201.3 L1185.4 201.6 L1185.3 201.9 L1185.1 202.2 L1185.0 202.5 L1184.8 202.7 L1184.6 203.0 L1184.3 203.2 L1184.1 203.4 L1183.8 203.5 L1183.5 203.7 L1183.2 203.8 L1182.9 203.8 L1182.6 203.9 L1182.3 203.9 L1182.0 203.9 L1181.7 203.8 L1181.4 203.8 L1181.1 203.7 L1180.8 203.5 L1180.5 203.4 L1180.3 203.2 L1180.0 203.0 L1179.8 202.7 L1179.6 202.5 L1179.5 202.2 L1179.3 201.9 L1179.2 201.6 L1179.2 201.3 L1179.1 201.0 L1179.1 200.7 L1179.1 200.4 L1179.2 200.1 L1179.2 199.8 L1179.3 199.5 L1179.5 199.2 L1179.6 198.9 L1179.8 198.7 L1180.0 198.4 L1180.3 198.2 L1180.5 198.0 L1180.8 197.9 L1181.1 197.7 L1181.4 197.6 L1181.7 197.6 L1182.0 197.5 L1182.3 197.5 L1182.6 197.5 L1182.9 197.6 L1183.2 197.6 L1183.5 197.7 L1183.8 197.9 L1184.1 198.0 L1184.3 198.2 L1184.6 198.4 L1184.8 198.7 L1185.0 198.9 L1185.1 199.2 L1185.3 199.5Z M1140.4 241.4 L1140.4 241.7 L1140.5 242.0 L1140.5 242.3 L1140.5 242.6 L1140.4 242.9 L1140.4 243.2 L1140.3 243.5 L1140.1 243.8 L1140.0 244.1 L1139.8 244.3 L1139.6 244.6 L1139.3 244.8 L1139.1 245.0 L1138.8 245.1 L1138.5 245.3 L1138.2 245.4 L1137.9 245.4 L1137.6 245.5 L1137.3 245.5 L1137.0 245.5 L1136.7 245.4 L1136.4 245.4 L1136.1 245.3 L1135.8 245.1 L1135.5 245.0 L1135.3 244.8 L1135.0 244.6 L1134.8 244.3 L1134.6 244.1 L1134.5 243.8 L1134.3 243.5 L1134.2 243.2 L1134.2 242.9 L1134.1 242.6 L1134.1 242.3 L1134.1 242.0 L1134.2 241.7 L1134.2 241.4 L1134.3 241.1 L1134.5 240.8 L1134.6 240.5 L1134.8 240.3 L1135.0 240.0 L1135.3 239.8 L1135.5 239.6 L1135.8 239.5 L1136.1 239.3 L1136.4 239.2 L1136.7 239.2 L1137.0 239.1 L1137.3 239.1 L1137.6 239.1 L1137.9 239.2 L1138.2 239.2 L1138.5 239.3 L1138.8 239.5 L1139.1 239.6 L1139.3 239.8 L1139.6 240.0 L1139.8 240.3 L1140.0 240.5 L1140.1 240.8 L1140.3 241.1Z M1194.1 224.2 L1195.1 228.4 L1195.6 233.1 L1195.8 238.2 L1195.6 243.8 L1195.1 249.6 L1194.1 255.6 L1192.8 261.7 L1191.1 267.8 L1189.1 273.7 L1186.8 279.4 L1184.3 284.8 L1181.6 289.8 L1178.8 294.3 L1175.8 298.2 L1172.8 301.4 L1169.8 303.9 L1166.8 305.7 L1164.0 306.8 L1161.3 307.0 L1158.8 306.4 L1156.5 305.1 L1154.5 303.0 L1152.8 300.1 L1151.5 296.6 L1150.5 292.4 L1150.0 287.7 L1149.8 282.6 L1150.0 277.0 L1150.5 271.2 L1151.5 265.2 L1152.8 259.1 L1154.5 253.0 L1156.5 247.1 L1158.8 241.4 L1161.3 236.0 L1164.0 231.0 L1166.8 226.5 L1169.8 222.6 L1172.8 219.4 L1175.8 216.9 L1178.8 215.1 L1181.6 214.0 L1184.3 213.8 L1186.8 214.4 L1189.1 215.7 L1191.1 217.8 L1192.8 220.7Z M1095.1 290.4 L1095.3 290.2 L1095.4 289.9 L1095.6 289.7 L1121.1 259.1 L1121.3 258.9 L1121.5 258.7 L1121.8 258.5 L1122.0 258.3 L1122.3 258.2 L1122.5 258.1 L1122.8 258.1 L1123.1 258.0 L1123.4 258.0 L1134.9 258.0 L1135.2 258.0 L1135.5 258.1 L1135.8 258.1 L1136.1 258.2 L1136.3 258.4 L1136.6 258.5 L1136.8 258.7 L1137.0 258.9 L1137.2 259.1 L1137.4 259.4 L1137.6 259.7 L1137.7 259.9 L1137.8 260.2 L1137.8 260.5 L1137.9 260.8 L1137.9 261.1 L1137.1 282.6 L1137.0 282.9 L1137.0 283.2 L1136.9 283.5 L1136.8 283.7 L1136.6 284.0 L1136.5 284.2 L1136.3 284.5 L1136.1 284.7 L1135.9 284.9 L1121.0 296.3 L1120.7 296.4 L1120.5 296.6 L1120.2 296.7 L1119.9 296.8 L1119.7 296.8 L1119.4 296.9 L1119.1 296.9 L1118.8 296.9 L1097.6 294.6 L1097.3 294.6 L1097.0 294.5 L1096.7 294.4 L1096.5 294.2 L1096.2 294.1 L1096.0 293.9 L1095.8 293.7 L1095.6 293.5 L1095.4 293.3 L1095.2 293.0 L1095.1 292.7 L1095.0 292.5 L1094.9 292.2 L1094.9 291.9 L1094.9 291.6 L1094.9 291.3 L1095.0 291.0 L1095.0 290.7Z M1073.8 308.1 L1073.8 308.4 L1073.9 308.7 L1073.9 309.0 L1073.9 309.3 L1073.8 309.6 L1073.8 309.9 L1073.7 310.2 L1073.5 310.5 L1073.4 310.8 L1073.2 311.0 L1073.0 311.3 L1072.7 311.5 L1072.5 311.7 L1072.2 311.8 L1071.9 312.0 L1071.6 312.1 L1071.3 312.1 L1071.0 312.2 L1070.7 312.2 L1070.4 312.2 L1070.1 312.1 L1069.8 312.1 L1069.5 312.0 L1069.2 311.8 L1068.9 311.7 L1068.7 311.5 L1068.4 311.3 L1068.2 311.0 L1068.0 310.8 L1067.9 310.5 L1067.7 310.2 L1067.6 309.9 L1067.6 309.6 L1067.5 309.3 L1067.5 309.0 L1067.5 308.7 L1067.6 308.4 L1067.6 308.1 L1067.7 307.8 L1067.9 307.5 L1068.0 307.2 L1068.2 307.0 L1068.4 306.7 L1068.7 306.5 L1068.9 306.3 L1069.2 306.2 L1069.5 306.0 L1069.8 305.9 L1070.1 305.9 L1070.4 305.8 L1070.7 305.8 L1071.0 305.8 L1071.3 305.9 L1071.6 305.9 L1071.9 306.0 L1072.2 306.2 L1072.5 306.3 L1072.7 306.5 L1073.0 306.7 L1073.2 307.0 L1073.4 307.2 L1073.5 307.5 L1073.7 307.8Z M1058.5 332.5 L1058.7 332.3 L1058.8 332.0 L1059.0 331.8 L1079.0 310.2 L1079.2 310.0 L1079.4 309.8 L1079.7 309.6 L1079.9 309.5 L1080.2 309.4 L1080.5 309.3 L1080.8 309.2 L1081.1 309.2 L1081.3 309.2 L1081.6 309.2 L1081.9 309.3 L1082.2 309.4 L1082.5 309.5 L1082.7 309.6 L1083.0 309.8 L1083.2 310.0 L1089.4 315.6 L1089.6 315.8 L1089.8 316.0 L1090.0 316.2 L1090.1 316.5 L1090.2 316.7 L1090.3 317.0 L1090.4 317.3 L1090.4 317.6 L1090.4 317.9 L1090.4 318.1 L1090.3 318.4 L1090.3 318.7 L1090.2 319.0 L1077.7 348.0 L1077.6 348.3 L1077.4 348.5 L1077.2 348.8 L1077.1 349.0 L1076.8 349.2 L1076.6 349.4 L1076.4 349.5 L1076.1 349.6 L1075.8 349.7 L1075.5 349.8 L1075.3 349.8 L1075.0 349.9 L1074.7 349.9 L1074.4 349.8 L1074.1 349.7 L1073.8 349.7 L1073.6 349.5 L1073.3 349.4 L1073.1 349.2 L1072.9 349.0 L1059.1 336.0 L1058.9 335.8 L1058.8 335.6 L1058.6 335.4 L1058.5 335.1 L1058.4 334.8 L1058.3 334.5 L1058.2 334.3 L1058.2 334.0 L1058.2 333.7 L1058.3 333.4 L1058.3 333.1 L1058.4 332.8Z M1013.3 380.8 L1013.4 380.5 L1013.6 380.3 L1013.8 380.1 L1039.1 353.1 L1039.3 352.9 L1039.5 352.8 L1039.7 352.6 L1040.0 352.5 L1040.3 352.4 L1040.5 352.3 L1040.8 352.2 L1041.1 352.2 L1041.4 352.2 L1041.7 352.2 L1042.0 352.3 L1042.2 352.4 L1042.5 352.5 L1042.8 352.6 L1043.0 352.8 L1043.2 352.9 L1043.4 353.1 L1043.6 353.4 L1043.8 353.6 L1043.9 353.9 L1051.2 368.5 L1051.3 368.7 L1051.4 369.0 L1051.5 369.3 L1051.5 369.6 L1051.6 369.8 L1051.5 370.1 L1051.5 370.4 L1051.4 370.7 L1051.3 370.9 L1051.2 371.2 L1051.1 371.4 L1032.2 400.5 L1032.1 400.8 L1031.9 401.0 L1031.6 401.2 L1031.4 401.4 L1031.2 401.5 L1030.9 401.7 L1030.6 401.8 L1030.3 401.9 L1030.0 401.9 L1029.7 401.9 L1029.4 401.9 L1029.1 401.9 L1028.9 401.8 L1028.6 401.7 L1028.3 401.6 L1028.1 401.4 L1027.8 401.2 L1027.6 401.0 L1027.4 400.8 L1013.7 384.0 L1013.5 383.8 L1013.3 383.6 L1013.2 383.3 L1013.1 383.0 L1013.0 382.7 L1013.0 382.5 L1013.0 382.2 L1013.0 381.9 L1013.0 381.6 L1013.1 381.3 L1013.2 381.1Z " fill="#3c9846" fill-rule="evenodd" stroke="#111" stroke-width="0.9" stroke-linejoin="round" /><polygon points="871.7,561.7 871.5,556.9 870.8,552.6 869.7,549.0 868.2,546.2 866.4,544.1 864.3,542.9 861.9,542.6 859.3,543.2 856.5,544.7 853.7,547.0 850.9,550.1 848.1,553.9 845.5,558.3 843.1,563.3 841.0,568.6 839.2,574.2 837.7,579.9 836.6,585.6 835.9,591.1 835.7,596.3 835.9,601.1 836.6,605.4 837.7,609.0 839.2,611.8 841.0,613.9 843.1,615.1 845.5,615.4 848.1,614.8 850.9,613.3 853.7,611.0 856.5,607.9 859.3,604.1 861.9,599.7 864.3,594.7 866.4,589.4 868.2,583.8 869.7,578.1 870.8,572.4 871.5,566.9" fill="#a9a9a9" stroke="#1a1a1a" stroke-width="0.8" stroke-linejoin="round" /><polygon points="869.2,564.1 869.0,560.0 868.4,556.3 867.5,553.2 866.2,550.8 864.6,549.0 862.8,548.0 860.7,547.7 858.5,548.2 856.1,549.5 853.7,551.5 851.3,554.1 848.9,557.4 846.7,561.2 844.6,565.5 842.8,570.1 841.2,574.9 839.9,579.8 839.0,584.7 838.4,589.4 838.2,593.9 838.4,598.0 839.0,601.7 839.9,604.8 841.2,607.2 842.8,609.0 844.6,610.0 846.7,610.3 848.9,609.8 851.3,608.5 853.7,606.5 856.1,603.9 858.5,600.6 860.7,596.8 862.8,592.5 864.6,587.9 866.2,583.1 867.5,578.2 868.4,573.3 869.0,568.6" fill="#8e8e8e" stroke="#1a1a1a" stroke-width="0.8" stroke-linejoin="round" /><polygon points="867.0,566.2 866.8,562.6 866.4,559.5 865.6,556.8 864.5,554.7 863.1,553.2 861.5,552.3 859.7,552.1 857.8,552.5 855.8,553.6 853.7,555.3 851.6,557.6 849.6,560.4 847.7,563.7 845.9,567.4 844.3,571.3 842.9,575.4 841.8,579.7 841.0,583.9 840.6,587.9 840.4,591.8 840.6,595.4 841.0,598.5 841.8,601.2 842.9,603.3 844.3,604.8 845.9,605.7 847.7,605.9 849.6,605.5 851.6,604.4 853.7,602.7 855.8,600.4 857.8,597.6 859.7,594.3 861.5,590.6 863.1,586.7 864.5,582.6 865.6,578.3 866.4,574.1 866.8,570.1" fill="#b4b4b4" stroke="#1a1a1a" stroke-width="0.8" stroke-linejoin="round" /><polygon points="864.5,568.6 864.4,565.7 864.0,563.2 863.3,561.0 862.4,559.3 861.3,558.1 860.0,557.4 858.6,557.2 857.0,557.5 855.4,558.4 853.7,559.8 852.0,561.7 850.4,563.9 848.8,566.6 847.4,569.6 846.1,572.8 845.0,576.1 844.1,579.5 843.4,582.9 843.0,586.3 842.9,589.4 843.0,592.3 843.4,594.8 844.1,597.0 845.0,598.7 846.1,599.9 847.4,600.6 848.8,600.8 850.4,600.5 852.0,599.6 853.7,598.2 855.4,596.3 857.0,594.1 858.6,591.4 860.0,588.4 861.3,585.2 862.4,581.9 863.3,578.5 864.0,575.1 864.4,571.7" fill="#7d7d7d" stroke="#1a1a1a" stroke-width="0.8" stroke-linejoin="round" /><polygon points="862.7,570.3 862.6,567.9 862.3,565.8 861.7,564.0 861.0,562.6 860.1,561.6 859.0,561.0 857.8,560.8 856.5,561.1 855.1,561.8 853.7,563.0 852.3,564.6 850.9,566.5 849.6,568.7 848.4,571.1 847.3,573.8 846.4,576.6 845.7,579.4 845.1,582.3 844.8,585.0 844.7,587.7 844.8,590.1 845.1,592.2 845.7,594.0 846.4,595.4 847.3,596.4 848.4,597.0 849.6,597.2 850.9,596.9 852.3,596.2 853.7,595.0 855.1,593.4 856.5,591.5 857.8,589.3 859.0,586.9 860.1,584.2 861.0,581.4 861.7,578.6 862.3,575.7 862.6,573.0" fill="#2a2a2a" stroke="#1a1a1a" stroke-width="0.8" stroke-linejoin="round" /><polygon points="856.8,576.1 856.7,575.2 856.6,574.5 856.4,573.9 856.2,573.4 855.9,573.1 855.5,572.9 855.1,572.8 854.6,572.9 854.2,573.2 853.7,573.6 853.2,574.1 852.8,574.7 852.3,575.5 851.9,576.3 851.5,577.2 851.2,578.2 851.0,579.2 850.8,580.1 850.7,581.1 850.6,581.9 850.7,582.8 850.8,583.5 851.0,584.1 851.2,584.6 851.5,584.9 851.9,585.1 852.3,585.2 852.8,585.1 853.2,584.8 853.7,584.4 854.2,583.9 854.6,583.3 855.1,582.5 855.5,581.7 855.9,580.8 856.2,579.8 856.4,578.8 856.6,577.9 856.7,576.9" fill="#111" stroke="#1a1a1a" stroke-width="0.8" stroke-linejoin="round" /><polygon points="1021.8,432.8 1021.6,428.5 1021.0,424.6 1020.0,421.4 1018.7,418.8 1017.0,416.9 1015.1,415.8 1012.9,415.5 1010.5,416.1 1008.0,417.4 1005.5,419.5 1003.0,422.3 1000.5,425.8 998.1,429.8 995.9,434.3 994.0,439.1 992.3,444.1 991.0,449.3 990.0,454.5 989.4,459.5 989.2,464.2 989.4,468.5 990.0,472.4 991.0,475.6 992.3,478.2 994.0,480.1 995.9,481.2 998.1,481.5 1000.5,480.9 1003.0,479.6 1005.5,477.5 1008.0,474.7 1010.5,471.2 1012.9,467.2 1015.1,462.7 1017.0,457.9 1018.7,452.9 1020.0,447.7 1021.0,442.5 1021.6,437.5" fill="#a9a9a9" stroke="#1a1a1a" stroke-width="0.8" stroke-linejoin="round" /><polygon points="1019.5,435.0 1019.3,431.3 1018.8,428.0 1018.0,425.2 1016.8,422.9 1015.4,421.3 1013.7,420.4 1011.9,420.2 1009.8,420.6 1007.7,421.8 1005.5,423.6 1003.3,426.0 1001.2,429.0 999.1,432.4 997.3,436.3 995.6,440.4 994.2,444.8 993.0,449.2 992.2,453.6 991.7,457.9 991.5,462.0 991.7,465.7 992.2,469.0 993.0,471.8 994.2,474.1 995.6,475.7 997.3,476.6 999.1,476.8 1001.2,476.4 1003.3,475.2 1005.5,473.4 1007.7,471.0 1009.8,468.0 1011.9,464.6 1013.7,460.7 1015.4,456.6 1016.8,452.2 1018.0,447.8 1018.8,443.4 1019.3,439.1" fill="#8e8e8e" stroke="#1a1a1a" stroke-width="0.8" stroke-linejoin="round" /><polygon points="1017.6,436.9 1017.4,433.7 1017.0,430.8 1016.2,428.4 1015.3,426.5 1014.0,425.1 1012.6,424.3 1011.0,424.1 1009.2,424.5 1007.4,425.5 1005.5,427.0 1003.6,429.1 1001.8,431.7 1000.0,434.6 998.4,438.0 997.0,441.5 995.7,445.3 994.8,449.1 994.0,452.9 993.6,456.6 993.4,460.1 993.6,463.3 994.0,466.2 994.8,468.6 995.7,470.5 997.0,471.9 998.4,472.7 1000.0,472.9 1001.8,472.5 1003.6,471.5 1005.5,470.0 1007.4,467.9 1009.2,465.3 1011.0,462.4 1012.6,459.0 1014.0,455.5 1015.3,451.7 1016.2,447.9 1017.0,444.1 1017.4,440.4" fill="#b4b4b4" stroke="#1a1a1a" stroke-width="0.8" stroke-linejoin="round" /><polygon points="1015.3,439.1 1015.2,436.5 1014.8,434.2 1014.2,432.2 1013.4,430.7 1012.4,429.5 1011.2,428.9 1009.9,428.7 1008.5,429.0 1007.0,429.8 1005.5,431.1 1004.0,432.8 1002.5,434.9 1001.1,437.3 999.8,440.0 998.6,442.9 997.6,445.9 996.8,449.0 996.2,452.1 995.8,455.1 995.7,457.9 995.8,460.5 996.2,462.8 996.8,464.8 997.6,466.3 998.6,467.5 999.8,468.1 1001.1,468.3 1002.5,468.0 1004.0,467.2 1005.5,465.9 1007.0,464.2 1008.5,462.1 1009.9,459.7 1011.2,457.0 1012.4,454.1 1013.4,451.1 1014.2,448.0 1014.8,444.9 1015.2,441.9" fill="#7d7d7d" stroke="#1a1a1a" stroke-width="0.8" stroke-linejoin="round" /><polygon points="1013.6,440.7 1013.5,438.5 1013.3,436.6 1012.8,434.9 1012.1,433.6 1011.3,432.7 1010.3,432.2 1009.2,432.0 1008.0,432.3 1006.8,433.0 1005.5,434.0 1004.2,435.4 1003.0,437.1 1001.8,439.1 1000.7,441.4 999.7,443.8 998.9,446.3 998.2,448.9 997.7,451.5 997.5,454.0 997.4,456.3 997.5,458.5 997.7,460.4 998.2,462.1 998.9,463.4 999.7,464.3 1000.7,464.8 1001.8,465.0 1003.0,464.7 1004.2,464.0 1005.5,463.0 1006.8,461.6 1008.0,459.9 1009.2,457.9 1010.3,455.6 1011.3,453.2 1012.1,450.7 1012.8,448.1 1013.3,445.5 1013.5,443.0" fill="#2a2a2a" stroke="#1a1a1a" stroke-width="0.8" stroke-linejoin="round" /><polygon points="1008.3,445.8 1008.2,445.1 1008.1,444.4 1008.0,443.9 1007.7,443.4 1007.5,443.1 1007.1,442.9 1006.8,442.9 1006.4,443.0 1005.9,443.2 1005.5,443.6 1005.1,444.0 1004.6,444.6 1004.2,445.3 1003.9,446.1 1003.5,446.9 1003.3,447.8 1003.0,448.6 1002.9,449.5 1002.8,450.4 1002.7,451.2 1002.8,451.9 1002.9,452.6 1003.0,453.1 1003.3,453.6 1003.5,453.9 1003.9,454.1 1004.2,454.1 1004.6,454.0 1005.1,453.8 1005.5,453.4 1005.9,453.0 1006.4,452.4 1006.8,451.7 1007.1,450.9 1007.5,450.1 1007.7,449.2 1008.0,448.4 1008.1,447.5 1008.2,446.6" fill="#111" stroke="#1a1a1a" stroke-width="0.8" stroke-linejoin="round" /><polygon points="947.0,455.0 957.0,448.0 970.0,451.0 972.0,472.0 980.0,476.0 976.0,487.0 953.0,483.0" fill="#e6aa3e" stroke="#d99a2c" stroke-width="0.8" stroke-linejoin="round" /><polyline points="950.0,464.0 951.0,482.0" fill="none" stroke="#c48d2c" stroke-width="1" stroke-linecap="round" stroke-linejoin="round" /><polyline points="955.5,465.2 956.5,483.2" fill="none" stroke="#c48d2c" stroke-width="1" stroke-linecap="round" stroke-linejoin="round" /><polyline points="961.0,466.4 962.0,484.4" fill="none" stroke="#c48d2c" stroke-width="1" stroke-linecap="round" stroke-linejoin="round" /><polyline points="966.5,467.6 967.5,485.6" fill="none" stroke="#c48d2c" stroke-width="1" stroke-linecap="round" stroke-linejoin="round" /><polyline points="972.0,468.8 973.0,486.8" fill="none" stroke="#c48d2c" stroke-width="1" stroke-linecap="round" stroke-linejoin="round" />
<polygon points="1189.0,247.0 1188.9,243.8 1188.6,241.0 1188.0,238.4 1187.2,236.3 1186.1,234.6 1184.9,233.3 1183.6,232.4 1182.0,232.1 1180.4,232.2 1178.6,232.9 1176.8,233.9 1175.0,235.5 1173.2,237.5 1171.4,239.9 1169.6,242.6 1168.0,245.6 1166.4,248.9 1165.1,252.4 1163.9,256.0 1162.8,259.7 1162.0,263.4 1161.4,267.1 1161.1,270.6 1161.0,274.0 1161.1,277.2 1161.4,280.0 1162.0,282.6 1162.8,284.7 1163.9,286.4 1165.1,287.7 1166.4,288.6 1168.0,288.9 1169.6,288.8 1171.4,288.1 1173.2,287.1 1175.0,285.5 1176.8,283.5 1178.6,281.1 1180.4,278.4 1182.0,275.4 1183.6,272.1 1184.9,268.6 1186.1,265.0 1187.2,261.3 1188.0,257.6 1188.6,253.9 1188.9,250.4" fill="#f2b544" stroke="#e09b22" stroke-width="1.2" stroke-linejoin="round" /><path d="M1184.3 240.0 L1183.0 240.1 L1181.7 240.5 L1180.3 241.4 L1178.9 242.5 L1177.5 244.1 L1176.2 245.9 L1174.8 247.9 L1173.6 250.2 L1172.4 252.7 L1171.4 255.4 L1170.5 258.1 L1169.7 260.9 L1169.1 263.8 L1168.6 266.6 L1168.3 269.3 L1168.2 271.8 L1168.3 274.2 L1168.6 276.4 L1169.1 278.3 L1169.7 279.9 L1170.5 281.3 L1171.4 282.3 L1172.4 282.9 L1225.2 296.3 L1226.3 296.5 L1227.6 296.4 L1228.9 296.0 L1230.3 295.1 L1231.7 294.0 L1233.1 292.4 L1234.4 290.6 L1235.8 288.6 L1237.0 286.3 L1238.2 283.8 L1239.2 281.1 L1240.1 278.4 L1240.9 275.6 L1241.5 272.7 L1242.0 269.9 L1242.3 267.2 L1242.3 264.7 L1242.3 262.3 L1242.0 260.1 L1241.5 258.2 L1240.9 256.6 L1240.1 255.2 L1239.2 254.2 L1238.2 253.6 L1185.4 240.2Z " fill="#dca23a" fill-rule="evenodd" stroke="#e09b22" stroke-width="1.0" stroke-linejoin="round" /><polyline points="1178.9,246.5 1231.7,260.0" fill="none" stroke="#b98324" stroke-width="1" stroke-linecap="round" stroke-linejoin="round" /><polyline points="1178.9,254.0 1231.7,267.5" fill="none" stroke="#b98324" stroke-width="1" stroke-linecap="round" stroke-linejoin="round" /><polyline points="1178.9,261.5 1231.7,275.0" fill="none" stroke="#b98324" stroke-width="1" stroke-linecap="round" stroke-linejoin="round" /><polyline points="1178.9,269.0 1231.7,282.5" fill="none" stroke="#b98324" stroke-width="1" stroke-linecap="round" stroke-linejoin="round" /><polyline points="1178.9,276.5 1231.7,290.0" fill="none" stroke="#b98324" stroke-width="1" stroke-linecap="round" stroke-linejoin="round" /><polygon points="1188.9,248.6 1214.8,255.0 1168.0,289.0 1106.0,346.5 1087.7,335.5" fill="#262626" stroke="#0a0a0a" stroke-width="0.8" stroke-linejoin="round" /><polygon points="1184.0,290.0 1216.0,296.0 1215.0,302.0 1134.4,419.5 1137.0,371.0 1140.0,364.0 1183.7,296.6" fill="#262626" stroke="#0a0a0a" stroke-width="0.8" stroke-linejoin="round" /><polyline points="1206.0,302.0 1138.0,404.0" fill="none" stroke="#3a3a3a" stroke-width="0.9" stroke-linecap="round" stroke-linejoin="round" /><polygon points="1249.6,262.5 1249.5,259.3 1249.2,256.5 1248.6,253.9 1247.8,251.8 1246.7,250.1 1245.5,248.8 1244.2,247.9 1242.6,247.6 1241.0,247.7 1239.2,248.4 1237.4,249.4 1235.6,251.0 1233.8,253.0 1232.0,255.4 1230.2,258.1 1228.6,261.1 1227.0,264.4 1225.7,267.9 1224.5,271.5 1223.4,275.2 1222.6,278.9 1222.0,282.6 1221.7,286.1 1221.5,289.5 1221.7,292.7 1222.0,295.5 1222.6,298.1 1223.4,300.2 1224.5,301.9 1225.7,303.2 1227.0,304.1 1228.6,304.4 1230.2,304.3 1232.0,303.6 1233.8,302.6 1235.6,301.0 1237.4,299.0 1239.2,296.6 1241.0,293.9 1242.6,290.9 1244.2,287.6 1245.5,284.1 1246.7,280.5 1247.8,276.8 1248.6,273.1 1249.2,269.4 1249.5,265.9" fill="#f2b544" stroke="#e09b22" stroke-width="1.4" stroke-linejoin="round" /><path d="M1246.3 265.7 L1246.2 263.3 L1245.9 261.2 L1245.5 259.2 L1244.8 257.6 L1244.1 256.3 L1243.2 255.3 L1242.1 254.7 L1240.9 254.4 L1239.7 254.5 L1238.4 255.0 L1237.0 255.8 L1235.6 257.0 L1234.2 258.5 L1232.8 260.3 L1231.5 262.4 L1230.3 264.7 L1229.1 267.2 L1228.0 269.8 L1227.1 272.6 L1226.4 275.4 L1225.7 278.2 L1225.3 281.0 L1225.0 283.7 L1224.9 286.3 L1225.0 288.7 L1225.3 290.8 L1225.7 292.8 L1226.4 294.4 L1227.1 295.7 L1228.0 296.7 L1229.1 297.3 L1230.3 297.6 L1231.5 297.5 L1232.8 297.0 L1234.2 296.2 L1235.6 295.0 L1237.0 293.5 L1238.4 291.7 L1239.7 289.6 L1240.9 287.3 L1242.1 284.8 L1243.2 282.2 L1244.1 279.4 L1244.8 276.6 L1245.5 273.8 L1245.9 271.0 L1246.2 268.3Z" fill="none" stroke="#c98f2a" stroke-width="0.9" /><path d="M1242.3 269.5 L1242.3 268.0 L1242.1 266.6 L1241.8 265.4 L1241.4 264.4 L1241.0 263.5 L1240.4 262.9 L1239.7 262.5 L1239.0 262.4 L1238.2 262.4 L1237.3 262.7 L1236.5 263.3 L1235.6 264.0 L1234.7 265.0 L1233.9 266.1 L1233.0 267.4 L1232.2 268.9 L1231.5 270.4 L1230.8 272.1 L1230.2 273.8 L1229.8 275.6 L1229.4 277.4 L1229.1 279.2 L1228.9 280.9 L1228.9 282.5 L1228.9 284.0 L1229.1 285.4 L1229.4 286.6 L1229.8 287.6 L1230.2 288.5 L1230.8 289.1 L1231.5 289.5 L1232.2 289.6 L1233.0 289.6 L1233.9 289.3 L1234.7 288.7 L1235.6 288.0 L1236.5 287.0 L1237.3 285.9 L1238.2 284.6 L1239.0 283.1 L1239.7 281.6 L1240.4 279.9 L1241.0 278.2 L1241.4 276.4 L1241.8 274.6 L1242.1 272.8 L1242.3 271.1Z" fill="none" stroke="#c98f2a" stroke-width="0.9" /><polygon points="1238.4,273.3 1238.4,272.7 1238.3,272.1 1238.2,271.6 1238.0,271.2 1237.8,270.8 1237.6,270.6 1237.3,270.4 1237.0,270.3 1236.7,270.3 1236.3,270.5 1236.0,270.7 1235.6,271.0 1235.2,271.4 1234.9,271.9 1234.5,272.4 1234.2,273.0 1233.9,273.7 1233.6,274.4 1233.4,275.1 1233.2,275.8 1233.0,276.6 1232.9,277.3 1232.8,278.0 1232.8,278.7 1232.8,279.3 1232.9,279.9 1233.0,280.4 1233.2,280.8 1233.4,281.2 1233.6,281.4 1233.9,281.6 1234.2,281.7 1234.5,281.7 1234.9,281.5 1235.2,281.3 1235.6,281.0 1236.0,280.6 1236.3,280.1 1236.7,279.6 1237.0,279.0 1237.3,278.3 1237.6,277.6 1237.8,276.9 1238.0,276.2 1238.2,275.4 1238.3,274.7 1238.4,274.0" fill="#222" stroke="#888" stroke-width="0.8" stroke-linejoin="round" /><polygon points="1099.0,373.4 1098.7,365.3 1097.7,358.0 1096.2,351.5 1094.1,346.0 1091.5,341.6 1088.4,338.3 1084.9,336.1 1081.0,335.3 1076.8,335.6 1072.3,337.2 1067.7,340.0 1063.0,344.0 1058.3,349.1 1053.7,355.1 1049.2,362.1 1045.0,369.9 1041.1,378.3 1037.6,387.2 1034.5,396.5 1031.9,406.0 1029.8,415.5 1028.3,424.9 1027.3,434.0 1027.0,442.6 1027.3,450.7 1028.3,458.0 1029.8,464.5 1031.9,470.0 1034.5,474.4 1037.6,477.7 1041.1,479.9 1045.0,480.7 1049.2,480.4 1053.7,478.8 1058.3,476.0 1063.0,472.0 1067.7,466.9 1072.3,460.9 1076.8,453.9 1081.0,446.1 1084.9,437.7 1088.4,428.8 1091.5,419.5 1094.1,410.0 1096.2,400.5 1097.7,391.1 1098.7,382.0" fill="#e9ae42" stroke="#e09b22" stroke-width="1.4" stroke-linejoin="round" /><polygon points="1098.0,377.9 1097.7,370.8 1096.9,364.2 1095.5,358.5 1093.7,353.6 1091.4,349.6 1088.6,346.7 1085.4,344.8 1082.0,344.0 1078.2,344.3 1074.2,345.7 1070.1,348.2 1065.9,351.8 1061.8,356.3 1057.7,361.7 1053.7,367.9 1049.9,374.8 1046.4,382.3 1043.3,390.3 1040.5,398.6 1038.2,407.0 1036.4,415.5 1035.0,423.8 1034.2,431.9 1033.9,439.6 1034.2,446.8 1035.0,453.3 1036.4,459.1 1038.2,464.0 1040.5,468.0 1043.3,470.9 1046.4,472.8 1049.9,473.6 1053.7,473.2 1057.7,471.8 1061.8,469.3 1065.9,465.8 1070.1,461.3 1074.2,455.9 1078.2,449.6 1082.0,442.7 1085.4,435.2 1088.6,427.3 1091.4,419.0 1093.7,410.6 1095.5,402.1 1096.9,393.8 1097.7,385.7" fill="#d8a03a" stroke="#c08a28" stroke-width="0.8" stroke-linejoin="round" /><path d="M1084.9 344.8 L1081.2 345.1 L1077.2 346.5 L1073.1 349.0 L1068.9 352.6 L1064.7 357.1 L1060.6 362.5 L1056.6 368.7 L1052.9 375.6 L1049.4 383.1 L1046.2 391.1 L1043.5 399.3 L1041.1 407.8 L1039.3 416.2 L1037.9 424.6 L1037.1 432.7 L1036.9 440.4 L1037.1 447.6 L1037.9 454.1 L1039.3 459.9 L1041.1 464.8 L1043.5 468.7 L1046.2 471.7 L1049.4 473.6 L1077.0 480.5 L1080.5 481.3 L1084.2 481.0 L1088.2 479.5 L1092.3 477.0 L1096.5 473.5 L1100.7 469.0 L1104.8 463.6 L1108.8 457.4 L1112.5 450.4 L1116.0 442.9 L1119.2 435.0 L1121.9 426.7 L1124.2 418.3 L1126.1 409.8 L1127.4 401.5 L1128.3 393.4 L1128.5 385.7 L1128.3 378.5 L1127.4 372.0 L1126.1 366.2 L1124.2 361.3 L1121.9 357.3 L1119.2 354.4 L1116.0 352.5 L1088.4 345.6Z " fill="#262626" fill-rule="evenodd" stroke="#0a0a0a" stroke-width="0.8" stroke-linejoin="round" /><polygon points="1132.5,381.9 1132.2,373.8 1131.2,366.5 1129.7,360.0 1127.6,354.5 1125.0,350.1 1121.9,346.8 1118.4,344.6 1114.5,343.8 1110.3,344.1 1105.8,345.7 1101.2,348.5 1096.5,352.5 1091.8,357.6 1087.2,363.6 1082.7,370.6 1078.5,378.4 1074.6,386.8 1071.1,395.7 1068.0,405.0 1065.4,414.5 1063.3,424.0 1061.8,433.4 1060.8,442.5 1060.5,451.1 1060.8,459.2 1061.8,466.5 1063.3,473.0 1065.4,478.5 1068.0,482.9 1071.1,486.2 1074.6,488.4 1078.5,489.2 1082.7,488.9 1087.2,487.3 1091.8,484.5 1096.5,480.5 1101.2,475.4 1105.8,469.4 1110.3,462.4 1114.5,454.6 1118.4,446.2 1121.9,437.3 1125.0,428.0 1127.6,418.5 1129.7,409.0 1131.2,399.6 1132.2,390.5" fill="#f2b544" stroke="#e09b22" stroke-width="1.4" stroke-linejoin="round" /><polygon points="1112.3,402.5 1112.2,399.2 1109.2,399.9 1108.7,397.7 1110.3,391.2 1109.3,389.4 1106.1,393.2 1104.9,392.5 1104.9,386.8 1103.2,386.9 1100.6,392.9 1099.1,393.8 1097.5,390.4 1095.5,392.5 1094.3,398.9 1092.8,401.3 1090.1,401.0 1088.4,404.5 1088.9,409.8 1087.9,412.9 1084.6,415.9 1083.8,419.9 1085.8,422.5 1085.4,425.5 1082.6,431.0 1082.8,434.4 1085.8,433.6 1086.3,435.8 1084.6,442.3 1085.7,444.2 1088.9,440.3 1090.1,441.0 1090.1,446.8 1091.8,446.6 1094.3,440.7 1095.9,439.7 1097.5,443.2 1099.4,441.1 1100.6,434.6 1102.1,432.2 1104.9,432.5 1106.5,429.0 1106.1,423.8 1107.1,420.6 1110.3,417.6 1111.2,413.7 1109.2,411.1 1109.5,408.0" fill="none" stroke="#f7c767" stroke-width="1" stroke-linejoin="round" /><polygon points="1106.0,411.3 1105.9,410.0 1105.8,408.7 1105.5,407.6 1105.2,406.6 1104.7,405.9 1104.2,405.3 1103.6,405.0 1102.9,404.8 1102.2,404.9 1101.4,405.1 1100.6,405.6 1099.8,406.3 1099.0,407.2 1098.2,408.2 1097.4,409.4 1096.7,410.7 1096.0,412.2 1095.4,413.7 1094.9,415.3 1094.4,417.0 1094.1,418.6 1093.8,420.2 1093.7,421.8 1093.6,423.3 1093.7,424.6 1093.8,425.9 1094.1,427.0 1094.4,428.0 1094.9,428.7 1095.4,429.3 1096.0,429.6 1096.7,429.8 1097.4,429.7 1098.2,429.5 1099.0,429.0 1099.8,428.3 1100.6,427.4 1101.4,426.4 1102.2,425.2 1102.9,423.9 1103.6,422.4 1104.2,420.9 1104.7,419.3 1105.2,417.6 1105.5,416.0 1105.8,414.4 1105.9,412.8" fill="#1a1a1a" stroke="#e09b22" stroke-width="0.8" stroke-linejoin="round" /><polygon points="1100.7,414.8 1100.7,414.3 1100.7,413.9 1100.6,413.5 1100.4,413.1 1100.3,412.8 1100.1,412.6 1099.9,412.5 1099.6,412.5 1099.4,412.5 1099.1,412.6 1098.8,412.8 1098.5,413.0 1098.2,413.3 1097.9,413.7 1097.6,414.1 1097.4,414.6 1097.1,415.1 1096.9,415.7 1096.7,416.3 1096.6,416.9 1096.4,417.5 1096.3,418.1 1096.3,418.6 1096.3,419.2 1096.3,419.7 1096.3,420.1 1096.4,420.5 1096.6,420.9 1096.7,421.2 1096.9,421.4 1097.1,421.5 1097.4,421.5 1097.6,421.5 1097.9,421.4 1098.2,421.2 1098.5,421.0 1098.8,420.7 1099.1,420.3 1099.4,419.9 1099.6,419.4 1099.9,418.9 1100.1,418.3 1100.3,417.7 1100.4,417.1 1100.6,416.5 1100.7,415.9 1100.7,415.4" fill="#000" stroke="#333" stroke-width="0.5" stroke-linejoin="round" /><path d="M1094.1 346.0 L1091.5 341.6 L1088.4 338.3 L1084.9 336.1 L1081.0 335.3 L1076.8 335.6 L1072.3 337.2 L1067.7 340.0 L1063.0 344.0 L1058.3 349.1 L1053.7 355.1 L1049.2 362.1 L1045.0 369.9 L1041.1 378.3 L1037.6 387.2 L1034.5 396.5 L1031.9 406.0 L1029.8 415.5 L1028.3 424.9 L1027.3 434.0 L1027.0 442.6 L1027.3 450.7 L1028.3 458.0 L1029.8 464.5 L1031.9 470.0 L1034.5 474.4 L1037.6 477.7 L1041.1 479.9 L1045.0 480.7 L1049.2 480.4 L1053.7 478.8 L1058.3 476.0 L1058.5 475.8 L1065.0 477.5 L1065.4 478.5 L1068.0 482.9 L1071.1 486.2 L1074.6 488.4 L1078.5 489.2 L1082.7 488.9 L1087.2 487.3 L1091.8 484.5 L1096.5 480.5 L1101.2 475.4 L1105.8 469.4 L1110.3 462.4 L1114.5 454.6 L1118.4 446.2 L1121.9 437.3 L1125.0 428.0 L1127.6 418.5 L1129.7 409.0 L1131.2 399.6 L1132.2 390.5 L1132.5 381.9 L1132.2 373.8 L1131.2 366.5 L1129.7 360.0 L1127.6 354.5 L1125.0 350.1 L1121.9 346.8 L1118.4 344.6 L1114.5 343.8 L1110.3 344.1 L1105.8 345.7 L1101.2 348.5 L1101.0 348.7 L1094.6 347.1Z " fill="none" fill-rule="evenodd" stroke="#f0a830" stroke-width="2.2" stroke-linejoin="round" /><path d="M1188.6 241.0 L1188.0 238.4 L1187.2 236.3 L1186.1 234.6 L1184.9 233.3 L1183.6 232.4 L1182.0 232.1 L1180.4 232.2 L1178.6 232.9 L1176.8 233.9 L1175.0 235.5 L1173.2 237.5 L1171.4 239.9 L1169.6 242.6 L1168.0 245.6 L1166.4 248.9 L1165.1 252.4 L1163.9 256.0 L1162.8 259.7 L1162.0 263.4 L1161.4 267.1 L1161.1 270.6 L1161.0 274.0 L1161.1 277.2 L1161.4 280.0 L1162.0 282.6 L1162.8 284.7 L1163.9 286.4 L1165.1 287.7 L1166.4 288.6 L1168.0 288.9 L1169.6 288.8 L1171.4 288.1 L1173.2 287.1 L1175.0 285.5 L1176.5 283.9 L1222.0 295.5 L1222.0 295.5 L1222.6 298.1 L1223.4 300.2 L1224.5 301.9 L1225.7 303.2 L1227.0 304.1 L1228.6 304.4 L1230.2 304.3 L1232.0 303.6 L1233.8 302.6 L1235.6 301.0 L1237.4 299.0 L1239.2 296.6 L1241.0 293.9 L1242.6 290.9 L1244.2 287.6 L1245.5 284.1 L1246.7 280.5 L1247.8 276.8 L1248.6 273.1 L1249.2 269.4 L1249.5 265.9 L1249.6 262.5 L1249.5 259.3 L1249.2 256.5 L1248.6 253.9 L1247.8 251.8 L1246.7 250.1 L1245.5 248.8 L1244.2 247.9 L1242.6 247.6 L1241.0 247.7 L1239.2 248.4 L1237.4 249.4 L1235.6 251.0 L1234.1 252.6 L1188.6 241.0Z " fill="none" fill-rule="evenodd" stroke="#f0a830" stroke-width="2.2" stroke-linejoin="round" />
<path d="M761.3 506.7 L759.9 502.9 L758.1 499.8 L756.0 497.6 L753.6 496.1 L750.9 495.5 L748.0 495.7 L744.9 496.8 L741.7 498.8 L738.5 501.5 L735.3 505.0 L732.1 509.2 L729.0 514.0 L726.1 519.3 L723.4 525.1 L721.0 531.2 L718.9 537.6 L717.1 544.1 L715.7 550.7 L714.6 557.1 L714.0 563.4 L713.8 569.3 L714.0 574.8 L714.6 579.9 L715.7 584.3 L717.1 588.1 L718.9 591.2 L721.0 593.4 L723.4 594.9 L726.1 595.5 L729.0 595.3 L732.1 594.2 L735.3 592.2 L738.5 589.5 L738.7 589.3 L743.6 590.5 L743.9 591.8 L745.3 595.6 L747.1 598.7 L749.2 600.9 L751.6 602.4 L754.3 603.0 L757.2 602.8 L760.3 601.7 L763.5 599.7 L766.7 597.0 L769.9 593.5 L773.1 589.3 L776.2 584.5 L779.1 579.2 L781.8 573.4 L784.2 567.3 L786.3 560.9 L788.1 554.4 L789.5 547.8 L790.6 541.4 L791.2 535.1 L791.4 529.2 L791.2 523.7 L790.6 518.6 L789.5 514.2 L788.1 510.4 L786.3 507.3 L784.2 505.1 L781.8 503.6 L779.1 503.0 L776.2 503.2 L773.1 504.3 L769.9 506.3 L766.7 509.0 L766.5 509.2 L761.6 508.0Z " fill="none" fill-rule="evenodd" stroke="#f5b642" stroke-width="2.4" stroke-linejoin="round" /><path d="M747.5 577.9 L748.6 575.9 L749.7 573.9 L750.8 571.8 L751.9 569.7 L752.9 567.4 L753.9 565.2 L754.8 562.8 L755.7 560.5 L756.6 558.1 L757.4 555.6 L758.2 553.2 L758.9 550.7 L759.6 548.2 L760.2 545.7 L760.8 543.2 L761.3 540.7 L761.7 538.2 L762.1 535.8 L762.5 533.3 L762.7 530.9 L763.0 528.5 L763.1 526.2 L763.2 523.9 L763.2 521.7 L763.2 519.5 L763.1 517.4 L763.0 515.4 L762.7 513.4 L762.5 511.6 L762.1 509.8 L761.7 508.1 L761.3 506.4 L760.8 504.9 L760.2 503.5 L759.6 502.2 L758.9 501.0 L758.2 499.9 L757.4 498.9 L756.6 498.1 L755.7 497.4 L754.8 496.7 L753.9 496.2 L752.9 495.9 L751.9 495.6 L750.8 495.5 L749.7 495.5 L748.6 495.6 L747.5 495.9" fill="none" stroke="#f5b642" stroke-width="1.6" /><polygon points="766.0,536.5 765.8,532.9 761.9,532.5 761.2,530.0 763.2,523.8 761.6,521.6 757.4,524.4 755.7,523.3 755.5,517.6 753.0,517.3 749.5,522.5 747.3,523.1 745.0,519.5 742.3,521.2 740.5,527.4 738.3,529.6 734.5,528.9 732.2,532.2 732.6,537.8 731.1,540.9 726.8,543.4 725.6,547.4 728.1,550.8 727.6,554.1 724.0,559.1 724.2,562.7 728.1,563.1 728.8,565.6 726.8,571.8 728.4,574.0 732.6,571.2 734.3,572.3 734.5,578.0 737.0,578.3 740.5,573.1 742.7,572.5 745.0,576.1 747.7,574.4 749.5,568.2 751.7,566.0 755.5,566.7 757.8,563.4 757.4,557.8 758.9,554.7 763.2,552.2 764.4,548.2 761.9,544.8 762.4,541.5" fill="none" stroke="#f5b642" stroke-width="2.0" stroke-linejoin="round" /><path d="M914.5 387.5 L914.3 381.3 L913.6 375.7 L912.4 370.8 L910.8 366.5 L908.8 363.1 L906.5 360.6 L903.8 359.0 L900.8 358.3 L897.5 358.6 L894.1 359.8 L890.6 362.0 L887.0 365.0 L883.4 368.9 L879.9 373.5 L876.5 378.9 L873.2 384.8 L870.2 391.3 L867.5 398.1 L865.2 405.2 L863.2 412.5 L861.6 419.7 L860.4 426.9 L859.7 433.9 L859.5 440.5 L859.7 446.7 L860.4 452.3 L861.6 457.2 L863.2 461.5 L865.2 464.9 L867.5 467.4 L870.2 469.0 L873.2 469.7 L876.5 469.4 L879.9 468.2 L883.4 466.0 L887.0 463.0 L890.6 459.1 L894.1 454.5 L897.5 449.1 L900.8 443.2 L903.8 436.7 L906.5 429.9 L908.8 422.8 L910.8 415.5 L912.4 408.3 L913.6 401.1 L914.3 394.1Z" fill="none" stroke="#f5b642" stroke-width="1.9" /><path d="M915.7 476.7 L917.8 475.5 L919.8 473.9 L921.9 472.1 L923.9 470.0 L926.0 467.6 L928.0 465.0 L930.0 462.1 L932.0 459.1 L933.9 455.8 L935.7 452.3 L937.5 448.7 L939.1 444.9 L940.7 441.0 L942.1 437.0 L943.5 432.9 L944.7 428.8 L945.8 424.6 L946.8 420.4 L947.6 416.3 L948.3 412.2 L948.8 408.1 L949.2 404.1 L949.5 400.2 L949.5 396.5 L949.5 392.9 L949.2 389.5 L948.8 386.2 L948.3 383.2 L947.6 380.4 L946.8 377.8 L945.8 375.5 L944.7 373.5 L943.5 371.7 L942.1 370.2 L940.7 369.0 L939.1 368.1 L937.5 367.6 L935.7 367.3 L933.9 367.4 L932.0 367.7 L930.0 368.4 L928.0 369.4 L926.0 370.7 L923.9 372.2 L921.9 374.1 L919.8 376.3 L917.8 378.7 L915.7 381.3" fill="none" stroke="#f5b642" stroke-width="1.4" /><polyline points="904.0,360.0 917.0,372.0 934.0,368.0" fill="none" stroke="#f5b642" stroke-width="1.8" stroke-linecap="round" stroke-linejoin="round" /><polyline points="872.0,469.0 894.0,476.0 906.0,472.0 924.0,477.0" fill="none" stroke="#f5b642" stroke-width="1.8" stroke-linecap="round" stroke-linejoin="round" /><polygon points="912.4,397.2 912.3,393.8 909.6,394.0 909.1,391.6 910.5,385.5 909.5,383.5 906.4,386.5 905.3,385.5 905.3,380.0 903.6,379.8 901.0,385.0 899.3,385.7 898.0,382.2 896.0,383.8 894.3,390.0 892.7,392.1 890.2,391.3 888.4,394.5 888.1,400.2 886.7,403.3 883.7,405.5 882.5,409.4 883.6,413.4 882.9,416.8 880.1,421.3 879.7,425.1 882.0,426.4 882.1,429.3 880.1,435.3 880.7,438.1 883.6,436.4 884.5,438.2 883.7,444.1 885.1,445.3 888.1,441.1 889.5,441.2 890.2,445.9 892.1,445.1 894.3,439.3 896.0,437.8 898.0,440.0 899.9,437.5 901.0,431.5 902.5,428.7 905.3,428.0 906.9,424.4 906.4,419.4 907.5,416.1 910.5,412.6 911.3,408.6 909.6,405.9 909.9,402.7" fill="none" stroke="#f5b642" stroke-width="1.8" stroke-linejoin="round" /><polygon points="914.5,404.9 914.4,402.1 912.2,402.4 911.7,400.7 912.5,395.8 911.4,394.6 909.1,397.8 907.9,397.6 907.2,394.1 905.6,394.9 904.0,399.7 902.7,401.2 900.8,400.3 899.2,402.9 898.9,407.5 897.9,410.0 895.5,412.2 894.6,415.5 895.8,418.1 895.5,420.8 893.5,425.1 893.6,427.9 895.8,427.6 896.3,429.3 895.5,434.2 896.6,435.4 898.9,432.2 900.1,432.4 900.8,435.9 902.4,435.1 904.0,430.3 905.3,428.8 907.2,429.7 908.8,427.1 909.1,422.5 910.1,420.0 912.5,417.8 913.4,414.5 912.2,411.9 912.5,409.2" fill="none" stroke="#f5b642" stroke-width="1.5" stroke-linejoin="round" /><path d="M964.6 416.9 L964.5 413.7 L964.1 410.7 L963.5 408.1 L962.7 405.8 L961.6 404.0 L960.3 402.7 L958.9 401.8 L957.3 401.5 L955.6 401.6 L953.8 402.2 L951.9 403.4 L950.0 405.0 L948.1 407.1 L946.2 409.5 L944.4 412.4 L942.7 415.5 L941.1 418.9 L939.7 422.6 L938.4 426.3 L937.3 430.2 L936.5 434.0 L935.9 437.9 L935.5 441.6 L935.4 445.1 L935.5 448.3 L935.9 451.3 L936.5 453.9 L937.3 456.2 L938.4 458.0 L939.7 459.3 L941.1 460.2 L942.7 460.5 L944.4 460.4 L946.2 459.8 L948.1 458.6 L950.0 457.0 L951.9 454.9 L953.8 452.5 L955.6 449.6 L957.3 446.5 L958.9 443.1 L960.3 439.4 L961.6 435.7 L962.7 431.8 L963.5 428.0 L964.1 424.1 L964.5 420.4Z" fill="none" stroke="#f5b642" stroke-width="1.8" /><path d="M990.6 422.9 L990.5 419.7 L990.1 416.7 L989.5 414.1 L988.7 411.8 L987.6 410.0 L986.3 408.7 L984.9 407.8 L983.3 407.5 L981.6 407.6 L979.8 408.2 L977.9 409.4 L976.0 411.0 L974.1 413.1 L972.2 415.5 L970.4 418.4 L968.7 421.5 L967.1 424.9 L965.7 428.6 L964.4 432.3 L963.3 436.2 L962.5 440.0 L961.9 443.9 L961.5 447.6 L961.4 451.1 L961.5 454.3 L961.9 457.3 L962.5 459.9 L963.3 462.2 L964.4 464.0 L965.7 465.3 L967.1 466.2 L968.7 466.5 L970.4 466.4 L972.2 465.8 L974.1 464.6 L976.0 463.0 L977.9 460.9 L979.8 458.5 L981.6 455.6 L983.3 452.5 L984.9 449.1 L986.3 445.4 L987.6 441.7 L988.7 437.8 L989.5 434.0 L990.1 430.1 L990.5 426.4Z" fill="none" stroke="#f5b642" stroke-width="1.8" /><polygon points="979.0,433.6 978.9,430.1 976.3,430.1 975.8,427.5 977.3,421.4 976.3,419.2 973.3,421.8 972.1,420.6 972.2,415.1 970.6,414.6 967.8,419.3 966.2,419.7 965.0,415.8 963.0,417.2 961.0,423.1 959.2,425.0 957.0,423.6 955.0,426.4 954.2,432.4 952.7,435.4 949.8,436.7 948.2,440.6 948.7,445.4 947.7,448.9 944.7,452.7 944.0,456.8 945.7,459.5 945.4,462.9 943.0,468.4 943.1,471.9 945.7,471.9 946.2,474.5 944.7,480.6 945.7,482.8 948.7,480.2 949.9,481.4 949.8,486.9 951.4,487.4 954.2,482.7 955.8,482.3 957.0,486.2 959.0,484.8 961.0,478.9 962.8,477.0 965.0,478.4 967.0,475.6 967.8,469.6 969.3,466.6 972.2,465.3 973.8,461.4 973.3,456.6 974.3,453.1 977.3,449.3 978.0,445.2 976.3,442.5 976.6,439.1" fill="none" stroke="#f5b642" stroke-width="2.0" stroke-linejoin="round" /><path d="M1010.9 359.8 L1010.7 356.0 L1010.3 352.6 L1009.6 349.5 L1008.6 346.9 L1007.4 344.9 L1005.9 343.3 L1004.3 342.3 L1002.4 341.9 L1000.5 342.1 L998.4 342.8 L996.2 344.1 L994.0 346.0 L991.8 348.4 L989.6 351.2 L987.5 354.5 L985.6 358.1 L983.7 362.1 L982.1 366.3 L980.6 370.6 L979.4 375.1 L978.4 379.5 L977.7 383.9 L977.3 388.2 L977.1 392.2 L977.3 396.0 L977.7 399.4 L978.4 402.5 L979.4 405.1 L980.6 407.1 L982.1 408.7 L983.7 409.7 L985.6 410.1 L987.5 409.9 L989.6 409.2 L991.8 407.9 L994.0 406.0 L996.2 403.6 L998.4 400.8 L1000.5 397.5 L1002.4 393.9 L1004.3 389.9 L1005.9 385.7 L1007.4 381.4 L1008.6 376.9 L1009.6 372.5 L1010.3 368.1 L1010.7 363.8Z" fill="none" stroke="#f5b642" stroke-width="1.8" /><path d="M1042.9 367.8 L1042.7 364.0 L1042.3 360.6 L1041.6 357.5 L1040.6 354.9 L1039.4 352.9 L1037.9 351.3 L1036.3 350.3 L1034.4 349.9 L1032.5 350.1 L1030.4 350.8 L1028.2 352.1 L1026.0 354.0 L1023.8 356.4 L1021.6 359.2 L1019.5 362.5 L1017.6 366.1 L1015.7 370.1 L1014.1 374.3 L1012.6 378.6 L1011.4 383.1 L1010.4 387.5 L1009.7 391.9 L1009.3 396.2 L1009.1 400.2 L1009.3 404.0 L1009.7 407.4 L1010.4 410.5 L1011.4 413.1 L1012.6 415.1 L1014.1 416.7 L1015.7 417.7 L1017.6 418.1 L1019.5 417.9 L1021.6 417.2 L1023.8 415.9 L1026.0 414.0 L1028.2 411.6 L1030.4 408.8 L1032.5 405.5 L1034.4 401.9 L1036.3 397.9 L1037.9 393.7 L1039.4 389.4 L1040.6 384.9 L1041.6 380.5 L1042.3 376.1 L1042.7 371.8Z" fill="none" stroke="#f5b642" stroke-width="1.8" /><polyline points="1001.0,342.0 1033.0,350.0" fill="none" stroke="#f5b642" stroke-width="2.0" stroke-linecap="round" stroke-linejoin="round" /><polyline points="987.0,410.0 1019.0,418.0" fill="none" stroke="#f5b642" stroke-width="2.0" stroke-linecap="round" stroke-linejoin="round" /><polygon points="1036.3,374.5 1036.2,371.1 1033.6,370.8 1033.2,368.2 1034.7,362.2 1033.9,359.8 1030.9,361.9 1029.9,360.4 1030.3,354.7 1028.8,353.8 1026.0,357.8 1024.5,357.7 1023.8,353.2 1021.9,353.9 1019.5,359.3 1017.8,360.5 1016.0,358.0 1014.0,360.0 1012.5,366.0 1010.8,368.4 1008.2,368.2 1006.5,371.4 1006.0,377.0 1004.6,380.3 1001.7,382.3 1000.3,386.2 1001.1,390.6 1000.2,394.2 997.3,398.2 996.6,402.2 998.4,404.7 998.1,408.1 995.7,413.5 995.8,416.9 998.4,417.2 998.8,419.8 997.3,425.8 998.1,428.2 1001.1,426.1 1002.1,427.6 1001.7,433.3 1003.2,434.2 1006.0,430.2 1007.5,430.3 1008.2,434.8 1010.1,434.1 1012.5,428.7 1014.2,427.5 1016.0,430.0 1018.0,428.0 1019.5,422.0 1021.2,419.6 1023.8,419.8 1025.5,416.6 1026.0,411.0 1027.4,407.7 1030.3,405.7 1031.7,401.8 1030.9,397.4 1031.8,393.8 1034.7,389.8 1035.4,385.8 1033.6,383.3 1033.9,379.9" fill="none" stroke="#f5b642" stroke-width="1.6" stroke-linejoin="round" /><polygon points="1018.3,440.2 1018.1,437.5 1015.9,437.8 1015.4,435.9 1016.6,430.9 1015.7,429.4 1013.2,432.2 1012.2,431.6 1012.1,427.2 1010.7,427.3 1008.6,431.9 1007.3,432.7 1006.0,430.2 1004.4,431.9 1003.4,437.0 1002.1,439.0 999.9,439.0 998.5,441.9 998.8,446.1 997.9,448.7 995.4,451.3 994.7,454.6 996.1,456.8 995.9,459.4 993.7,463.8 993.9,466.5 996.1,466.2 996.6,468.1 995.4,473.1 996.3,474.6 998.8,471.8 999.8,472.4 999.9,476.8 1001.3,476.7 1003.4,472.1 1004.7,471.3 1006.0,473.8 1007.6,472.1 1008.6,467.0 1009.9,465.0 1012.1,465.0 1013.5,462.1 1013.2,457.9 1014.1,455.3 1016.6,452.7 1017.3,449.4 1015.9,447.2 1016.1,444.6" fill="none" stroke="#f5b642" stroke-width="1.5" stroke-linejoin="round" /><path d="M1067.0 333.8 L1064.3 334.7 L1061.6 336.1 L1058.8 338.0 L1055.9 340.2 L1053.1 342.9 L1050.3 345.9 L1047.4 349.4 L1044.7 353.2 L1041.9 357.3 L1039.3 361.7 L1036.8 366.4 L1034.3 371.4 L1032.0 376.6 L1029.8 381.9 L1027.8 387.4 L1025.9 393.0 L1024.2 398.7 L1022.7 404.5 L1021.4 410.3 L1020.3 416.0 L1019.4 421.7 L1018.7 427.2 L1018.3 432.7 L1018.1 437.9 L1018.1 443.0 L1018.3 447.8 L1018.7 452.4 L1019.4 456.7 L1020.3 460.7 L1021.4 464.3 L1022.7 467.6 L1024.1 470.4 L1025.8 472.9 L1027.7 475.0 L1029.7 476.6 L1031.9 477.8 L1034.2 478.5 L1036.6 478.8 L1039.2 478.6 L1041.8 477.9 L1044.5 476.9 L1047.3 475.3 L1050.1 473.4 L1053.0 471.0 L1055.8 468.2 L1058.6 465.0 L1061.4 461.4 L1064.2 457.5" fill="none" stroke="#f5b642" stroke-width="1.4" /><polyline points="1056.0,394.0 1060.0,376.0 1068.0,372.0 1076.0,376.0 1074.0,402.0 1066.0,420.0 1057.0,422.0 1053.0,410.0 1056.0,394.0" fill="none" stroke="#f5b642" stroke-width="1.8" stroke-linecap="round" stroke-linejoin="round" />
<circle cx="899.3" cy="413" r="6" fill="none" stroke="#f4f4f4" stroke-width="1.6"/><polyline points="905.5,415.0 986.0,440.0" fill="none" stroke="#f4f4f4" stroke-width="1.6" stroke-linejoin="round" stroke-linecap="round"/><polyline points="958.3,423.5 956.3,440.2 981.9,437.4 958.3,423.5" fill="none" stroke="#f4f4f4" stroke-width="1.6" stroke-linejoin="round" stroke-linecap="round"/><ellipse cx="993.9000000000001" cy="440.20000000000005" rx="7" ry="4" fill="none" stroke="#f4f4f4" stroke-width="1.6"/><polyline points="986.0,446.0 1002.0,432.0" fill="none" stroke="#f4f4f4" stroke-width="1.3" stroke-linejoin="round" stroke-linecap="round"/><polyline points="895.5,418.0 857.0,448.5" fill="none" stroke="#f4f4f4" stroke-width="1.6" stroke-linejoin="round" stroke-linecap="round"/><polyline points="855.4,437.4 870.7,449.9 851.3,455.5 855.4,437.4" fill="#1a1a1a" stroke="#f4f4f4" stroke-width="1.6" stroke-linejoin="round" stroke-linecap="round"/><ellipse cx="845.7" cy="459.70000000000005" rx="3.2" ry="8" fill="none" stroke="#f4f4f4" stroke-width="1.5"/><polyline points="845.5,440.0 846.5,452.0" fill="none" stroke="#f4f4f4" stroke-width="1.3" stroke-linejoin="round" stroke-linecap="round"/><polyline points="846.0,467.0 848.0,480.0" fill="none" stroke="#f4f4f4" stroke-width="1.3" stroke-linejoin="round" stroke-linecap="round"/><polyline points="899.3,419.4 899.3,473.6" fill="none" stroke="#f4f4f4" stroke-width="1.6" stroke-linejoin="round" stroke-linecap="round"/><polyline points="890.2,473.6 909.0,473.6 899.3,498.6 890.2,473.6" fill="none" stroke="#f4f4f4" stroke-width="1.6" stroke-linejoin="round" stroke-linecap="round"/><circle cx="899.3" cy="507" r="6.3" fill="none" stroke="#f4f4f4" stroke-width="1.6"/><polyline points="880.4,500.0 893.0,505.0" fill="none" stroke="#f4f4f4" stroke-width="1.3" stroke-linejoin="round" stroke-linecap="round"/><polyline points="906.0,509.0 919.4,512.0" fill="none" stroke="#f4f4f4" stroke-width="1.3" stroke-linejoin="round" stroke-linecap="round"/><polyline points="877.7,450.0 888.8,440.2 888.8,461.0 877.7,470.8 877.7,450.0" fill="none" stroke="#f4f4f4" stroke-width="1.6" stroke-linejoin="round" stroke-linecap="round"/><polyline points="917.4,437.4 938.8,443.0 938.8,463.8 918.0,456.9 917.4,437.4" fill="none" stroke="#f4f4f4" stroke-width="1.6" stroke-linejoin="round" stroke-linecap="round"/><polyline points="895.7,437.4 908.2,428.5 929.0,433.3 916.0,442.0" fill="none" stroke="#f4f4f4" stroke-width="1.6" stroke-linejoin="round" stroke-linecap="round"/>
<polygon points="967.5,584.1 1073.6,615.9 1073.6,721.3 1012.0,774.8 904.9,744.0 904.9,638.6" fill="#b5b5b5" stroke="none" stroke-width="0" stroke-linejoin="round" /><polygon points="967.5,584.1 1073.6,615.9 1012.9,667.2 904.9,638.6" fill="#bbbbbb" stroke="none" stroke-width="0" stroke-linejoin="round" /><polygon points="1012.9,667.2 1073.6,615.9 1073.6,721.3 1012.0,774.8" fill="#b3b3b3" stroke="none" stroke-width="0" stroke-linejoin="round" /><polygon points="967.5,691.2 1073.6,721.3 1012.0,774.8 904.9,744.0" fill="#bcbcbc" stroke="none" stroke-width="0" stroke-linejoin="round" opacity="0.5"/><polygon points="967.5,584.1 967.5,642.0 1012.9,667.2 1012.9,696.0 967.5,691.2" fill="#a9a9a9" stroke="none" stroke-width="0" stroke-linejoin="round" opacity="0.0"/><polygon points="967.5,655.0 1012.9,667.2 1012.4,703.0 967.5,691.2" fill="#a8a8a8" stroke="none" stroke-width="0" stroke-linejoin="round" /><polyline points="967.5,584.1 1073.6,615.9 1073.6,721.3 1012.0,774.8 904.9,744.0 904.9,638.6 967.5,584.1" fill="none" stroke="#1e1e1e" stroke-width="1.5" stroke-linecap="round" stroke-linejoin="round" /><polyline points="904.9,638.6 1012.9,667.2 1073.6,615.9" fill="none" stroke="#1e1e1e" stroke-width="1.5" stroke-linecap="round" stroke-linejoin="round" /><polyline points="1012.9,667.2 1012.0,774.8" fill="none" stroke="#1e1e1e" stroke-width="1.5" stroke-linecap="round" stroke-linejoin="round" /><polyline points="967.5,584.1 967.5,691.2" fill="none" stroke="#1e1e1e" stroke-width="1.5" stroke-linecap="round" stroke-linejoin="round" /><polyline points="904.9,744.0 967.5,691.2 1073.6,721.3" fill="none" stroke="#1e1e1e" stroke-width="1.5" stroke-linecap="round" stroke-linejoin="round" /><circle cx="989.5" cy="626.3" r="4" fill="#e8e8e8" stroke="#222" stroke-width="1.1"/><circle cx="989.5" cy="626.3" r="1.5" fill="#222"/>
</svg>
</div>
<div id="header">
<svg style="left:13px;top:5px" width="26" height="30" viewBox="0 0 26 30">
<polygon points="12.83,0.83 17.17,3.33 5.67,10.17 5.67,16.17 1.17,14.83 1.17,8" fill="#5cba47"/>
<polygon points="19.5,4.83 25,8.17 25,21.5 20.33,24 20,11.33 15,7.33" fill="#67bf52"/>
<polygon points="1.17,16.83 11.67,22.83 18.33,20 19,24.67 13,28.67 1.17,21.67" fill="#58b845"/>
<path d="M7.83 14.33 L8 11.67 L13.67 9 M15.67 11 L18 12.67 L17.67 18.33 M7.33 16.67 L13 20.33 L14.67 18.67" fill="none" stroke="#4a4a4a" stroke-width="1.5" stroke-linejoin="round" stroke-linecap="round"/>
</svg>
<span class="t" style="left:47.50px;top:8.00px;font-size:22.5px;color:#6e6e6e;transform:scaleX(1.0020);">onshape</span>
<div class="abs" style="left:147px;top:14px;width:16px;height:3px;background:#2d2d2d;box-shadow:0 6px 0 #2d2d2d,0 12px 0 #2d2d2d"></div>
<span class="t" style="left:175.00px;top:11.00px;font-size:22px;font-weight:700;color:#2d2d2d;transform:scaleX(0.9665);">1C - Practice Exercise Solutions</span>
<span class="t" style="left:508.00px;top:15.00px;font-size:15.5px;color:#9a9a9a;transform:scaleX(0.9960);">FRCDesignLib Rework</span>
<svg style="left:677px;top:13px" width="18" height="18" viewBox="0 0 18 18" fill="none" stroke="#2d2d2d" stroke-width="2" stroke-linecap="round">
<path d="M7.6 10.4 a3.2 3.2 0 0 1 0-4.5 l2.6-2.6 a3.2 3.2 0 0 1 4.5 4.5 l-1.5 1.5"/>
<path d="M10.4 7.6 a3.2 3.2 0 0 1 0 4.5 l-2.6 2.6 a3.2 3.2 0 0 1-4.5-4.5 l1.5-1.5"/></svg>
<svg style="left:703px;top:14px" width="19" height="15" viewBox="0 0 19 15"><path d="M0.6 1.5 a1 1 0 0 1 1-1 h5 l1.6 1.8 h9.2 a1 1 0 0 1 1 1 v10.2 a1 1 0 0 1-1 1 h-15.8 a1 1 0 0 1-1-1z" fill="#f1f1f1" stroke="#9a9a9a" stroke-width="1.2"/></svg>
<span class="t" style="left:727.00px;top:14.00px;font-size:15.4px;color:#9a9a9a;transform:scaleX(0.9607);">Stage 1</span>
<svg style="left:830px;top:12px" width="19" height="16" viewBox="0 0 19 16"><path d="M9.8 0.6 L18.6 4.6 L9.8 8.6 L1 4.6Z" fill="#1b5faa"/><path d="M4.6 7.2 V11 q5.2 3.4 10.4 0 V7.2 L9.8 9.6Z" fill="#1b5faa"/><path d="M2 5.4 V14.6" stroke="#1b5faa" stroke-width="1.5"/></svg>
<svg style="left:855px;top:10px" width="20" height="20" viewBox="0 0 20 20"><circle cx="10" cy="10" r="8.6" fill="#fff" stroke="#2d2d2d" stroke-width="1.6"/>
<path d="M5.2 3.4 q2.4-1.6 5-1.4 l1.4 1.6 -1.8 1.2 -0.4 1.8 -2.2 0.6 -0.6 2 1.8 1 2.2 0.4 0.8 2.2 -1.2 2.6 -1.6 1.6 -0.8-3.4 -2.4-2 -1.6-3.2 0.6-2.8z M13.6 6.2 l2.4-0.8 1.8 3.4 -0.4 3.2 -2 -1.4 -1.6-2.2z" fill="#2d2d2d"/></svg>
<svg style="left:884px;top:11px" width="19" height="18" viewBox="0 0 19 18" fill="none" stroke="#2d2d2d" stroke-width="1.7" stroke-linejoin="round"><path d="M4.6 3 H1.6 V15.6 H6"/><path d="M4.6 1.4 h6.6 v2.4 h-6.6z" /><path d="M6.6 5.6 h7 l3.6 3.6 v7.6 h-10.6z" fill="#eaeaea"/><path d="M13.4 5.8 v3.6 h3.6"/></svg>
<span class="t" style="left:909.00px;top:14.00px;font-size:14.6px;transform:scaleX(0.9647);">441</span>
<svg style="left:951px;top:10px" width="10" height="20" viewBox="0 0 10 20" fill="#2d2d2d"><circle cx="5" cy="10" r="2.9"/><rect x="4.1" y="0.8" width="1.8" height="2.2"/><rect x="4.1" y="4.2" width="1.8" height="2.2"/><rect x="4.1" y="13.6" width="1.8" height="2.2"/><rect x="4.1" y="17" width="1.8" height="2.2"/></svg>
<span class="t" style="left:972.00px;top:14.00px;font-size:14.6px;transform:scaleX(0.9852);">4008</span>
<svg style="left:1016px;top:10px" width="21" height="20" viewBox="0 0 21 20" fill="none" stroke="#2d2d2d" stroke-width="1.7" stroke-linejoin="round"><path d="M1.4 9 h3.8 v9 h-3.8z"/><path d="M5.2 9.4 L9.4 3.6 q0.6-2.4 2.2-2.2 q1.8 0.6 1 3.4 l-0.8 2.8 h6 q1.8 0.4 1.4 2.2 l-1.8 7 q-0.6 1.4-2 1.4 h-10.2"/></svg>
<span class="t" style="left:1043.00px;top:14.00px;font-size:14.6px;transform:scaleX(0.9852);">3</span>
<span class="t" style="left:1514.50px;top:10.50px;font-size:20px;font-weight:700;transform:scaleX(0.8351);">{</span>
<span class="t" style="left:1528.50px;top:10.50px;font-size:20px;font-weight:700;transform:scaleX(0.8351);">}</span>
<svg style="left:1519px;top:15px" width="11" height="11" viewBox="0 0 11 11" fill="none" stroke="#2d2d2d" stroke-width="2"><path d="M1.2 5.6 L4.2 8.6 L9.8 1.8"/></svg>
<svg style="left:1548px;top:11px" width="18" height="20" viewBox="0 0 18 20" fill="#2d2d2d"><path d="M9 1.2 q1.2 0 1.2 1.2 q4 1.2 4 6.2 q0 4.2 2.6 6.2 v1.2 h-15.6 v-1.2 q2.6-2 2.6-6.2 q0-5 4-6.2 q0-1.2 1.2-1.2z"/><path d="M6.6 17 h4.8 q-0.4 2.2-2.4 2.2 q-2 0-2.400-2.200z"/></svg>
<div class="abs" style="left:1557px;top:6px;width:16px;height:16px;background:#1b5faa;border-radius:2.5px"></div>
<span class="t" style="left:1559.00px;top:9.50px;font-size:11.5px;font-weight:700;color:#fff;transform:scaleX(0.9534);">9+</span>
<svg style="left:1581px;top:13px" width="17" height="18" viewBox="0 0 17 18" fill="none" stroke="#2d2d2d"><rect x="0.9" y="0.9" width="15.2" height="16.2" rx="2" stroke-width="1.6"/><path d="M3.2 4.8 l1.2 1.2 2-2.400 M3.2 9.2 l1.2 1.2 2-2.400 M3.2 13.400 l1.2 1.2 2-2.400" stroke-width="1.2"/><path d="M8.2 5 h5.600 M8.2 9.2 h5.600 M8.2 13.600 h5.600" stroke-width="1.6"/></svg>
<svg style="left:1612px;top:12px" width="19" height="19" viewBox="0 0 19 19" fill="none" stroke="#2d2d2d" stroke-width="1.8"><rect x="1" y="1.6" width="6" height="6"/><rect x="1" y="11.4" width="6" height="6"/><rect x="10.8" y="11.4" width="6" height="6"/><path d="M13.800 0.4 v8.400 M9.600 4.600 h8.400" stroke-width="2"/></svg>
<svg style="left:1644px;top:12px" width="18" height="19" viewBox="0 0 18 19"><path d="M8.400 0.600 q7.200 0 8.200 6.600 q0.400 4-2.600 6.600 v4.600 h-8.200 v-3 h-2 q-1.200 0-1.200-1.400 v-2.400 l-1.800-0.600 2-3.600 q0.400-6.600 5.600-6.800z" fill="#2d2d2d"/><circle cx="9.6" cy="6.400" r="2.300" fill="none" stroke="#eaeaea" stroke-width="1.400" stroke-dasharray="1.2 0.800"/><circle cx="6" cy="10.200" r="1.500" fill="none" stroke="#eaeaea" stroke-width="1.100" stroke-dasharray="0.900 0.600"/></svg>
<div class="abs" style="left:1673px;top:3px;width:60px;height:33px;background:#1a55b3;border-radius:5px"></div>
<span class="t" style="left:1685.00px;top:12.00px;font-size:15px;font-weight:700;color:#fff;transform:scaleX(0.8755);">Share</span>
<div class="abs" style="left:1743px;top:12px;width:19px;height:19px;border-radius:10px;background:#2d2d2d"></div>
<span class="t" style="left:1748.00px;top:14.00px;font-size:15px;font-weight:700;color:#eaeaea;transform:scaleX(0.9822);">?</span>
<svg style="left:1769px;top:19px" width="9" height="5" viewBox="0 0 9 5"><path d="M0.400 0.200 h8.200 l-4.100 4.600z" fill="#2d2d2d"/></svg>
<svg style="left:1789px;top:10px" width="25" height="24" viewBox="0 0 25 24"><rect width="25" height="24" rx="2" fill="#0c0c0c"/><path d="M12.500 2.600 L20.600 7.300 V16.700 L12.500 21.400 L4.400 16.700 V7.300Z" fill="none" stroke="#1aa6b7" stroke-width="2.200"/><path d="M16.400 8.200 L12.500 6 L8.400 8.400 V11 L16.600 13.400 V16 L12.500 18.200 L8.600 16" fill="none" stroke="#1aa6b7" stroke-width="2"/></svg>
<span class="t" style="left:1819.00px;top:14.00px;font-size:14.6px;transform:scaleX(0.9448);">Andrew Card</span>
<svg style="left:1906px;top:18px" width="9" height="5" viewBox="0 0 9 5"><path d="M0.400 0.200 h8.200 l-4.100 4.600z" fill="#2d2d2d"/></svg>
</div>
<div id="leftbar">
<div class="abs" style="left:39px;top:0;width:1px;height:1039px;background:#e4e4e4"></div>
<div class="abs" style="left:0;top:210.5px;width:40px;height:1px;background:#d0d0d0"></div>
<svg style="left:6.0px;top:4.0px" width="28" height="28" viewBox="-14.0 -14.0 28 28" ><circle cx="-6.400" cy="-5.400" r="2.700" fill="none" stroke="#2d2d2d" stroke-width="1.700"/><path d="M-6.400 -2.600 V6" stroke="#2d2d2d" stroke-width="1.700"/><circle cx="-6.400" cy="6.600" r="1.700" fill="#2d2d2d"/><path d="M-6.400 4.800 Q-6 1.400 -1.600 0.600" fill="none" stroke="#2d2d2d" stroke-width="1.600"/><circle cx="-1" cy="0.400" r="1.700" fill="#2d2d2d"/><path d="M-0.600 -7 h10.400 M2.200 -2.400 h7.600 M2.200 2.200 h7.600 M0 7 h9.800" stroke="#2d2d2d" stroke-width="1.700"/></svg>
<svg style="left:6.0px;top:39.0px" width="28" height="28" viewBox="-14.0 -14.0 28 28" ><circle cx="-4" cy="-0.400" r="3.100" fill="#2d2d2d"/><path d="M-4 -9.600 v2 M-4 -6.400 v2 M-4 3.800 v2 M-4 7 v2" stroke="#2d2d2d" stroke-width="1.700"/><path d="M5 0.800 v7.600 M1.200 4.600 h7.600" stroke="#1b5faa" stroke-width="2"/></svg>
<svg style="left:6.0px;top:73.0px" width="28" height="28" viewBox="-14.0 -14.0 28 28" ><ellipse cx="0" cy="-1.600" rx="9.800" ry="6.600" fill="#2d2d2d"/><path d="M-4 3 L-7.600 8 L1 4.400Z" fill="#2d2d2d"/></svg>
<svg style="left:6.0px;top:108.5px" width="28" height="28" viewBox="-14.0 -14.0 28 28" ><rect x="-7.400" y="-7.800" width="13.400" height="15.600" rx="1.800" fill="none" stroke="#2d2d2d" stroke-width="1.700"/><path d="M-4.400 -4 h7.400 M-4.400 -0.600 h5 M-4.400 2.800 h3.400" stroke="#2d2d2d" stroke-width="1.600"/><path d="M8.400 -5.200 L1.600 3.600 L0.800 6.400 L3.600 5.200 L10.200 -3.600Z" fill="#2d2d2d" stroke="#fafafa" stroke-width="0.800"/></svg>
<svg style="left:6.0px;top:144.0px" width="28" height="28" viewBox="-14.0 -14.0 28 28" ><circle cx="1.600" cy="1.200" r="7" fill="none" stroke="#2d2d2d" stroke-width="1.700"/><path d="M-0.600 -8.600 h4.400 M1.600 -8.600 v2.800 M7 -5.200 l1.400 1.200 M1.600 1.200 L4.800 -2.600" stroke="#2d2d2d" stroke-width="1.600"/><path d="M-9.400 -2.200 h4.400 M-10.400 1.200 h4.400 M-9.400 4.600 h4.400" stroke="#2d2d2d" stroke-width="1.300"/></svg>
<svg style="left:6.0px;top:179.0px" width="28" height="28" viewBox="-14.0 -14.0 28 28" ><circle cx="-0.400" cy="-0.600" r="9.400" fill="#2d2d2d"/><path d="M5 6 L9 10.400 L8.600 3Z" fill="#2d2d2d"/><path d="M-0.400 -6.600 L4.800 -3.600 V2.400 L-0.400 5.400 L-5.600 2.400 V-3.600Z" fill="none" stroke="#fafafa" stroke-width="1.500"/><path d="M-0.400 -3.400 L2.200 -2 V1 L-0.400 2.400 L-3 1 V-2Z" fill="none" stroke="#bbb" stroke-width="1"/></svg>
<svg style="left:6.0px;top:215.0px" width="28" height="28" viewBox="-14.0 -14.0 28 28" ><rect x="-7.400" y="-8.400" width="14.800" height="16.800" rx="2" fill="none" stroke="#2d2d2d" stroke-width="1.700"/><path d="M-5 -4.800 l1.200 1.200 2 -2.400 M-5 -0.400 l1.200 1.200 2 -2.400 M-5 4 l1.200 1.200 2 -2.400" fill="none" stroke="#2d2d2d" stroke-width="1.100"/><path d="M0 -4.400 h5 M0 0 h5 M0 4.400 h5" stroke="#2d2d2d" stroke-width="1.600"/></svg>
<svg style="left:6.0px;top:1011.5px" width="28" height="28" viewBox="-14.0 -14.0 28 28" ><path d="M-8 -5.600 h14 v5 h-3 v3 h-11z" fill="#2d2d2d"/><circle cx="1.800" cy="0.600" r="4" fill="#fafafa" stroke="#2d2d2d" stroke-width="1.700"/><path d="M4.600 3.600 L8.600 7.800" stroke="#2d2d2d" stroke-width="2.200"/></svg>
</div>
<div id="toolbar">
<div class="sep" style="left:70px"></div>
<div class="sep" style="left:108px"></div>
<div class="sep" style="left:190px"></div>
<div class="sep" style="left:228px"></div>
<div class="sep" style="left:504px"></div>
<div class="sep" style="left:576px"></div>
<div class="sep" style="left:852px"></div>
<div class="sep" style="left:992px"></div>
<div class="sep" style="left:1064px"></div>
<svg style="left:5.0px;top:6.0px" width="24" height="24" viewBox="-12.0 -12.0 24 24" ><path d="M-1.5 -8 L-7.5 -2.6 L-1.5 2.8 V-0.6 Q4.5 -0.8 5.2 6.6 Q8 -4.6 -1.5 -5Z" fill="#2d2d2d"/></svg>
<svg style="left:39.0px;top:6.0px" width="24" height="24" viewBox="-12.0 -12.0 24 24" ><path d="M1.5 -8 L7.5 -2.6 L1.5 2.8 V-0.6 Q-4.5 -0.8 -5.2 6.6 Q-8 -4.6 1.5 -5Z" fill="#8a8a8a"/></svg>
<svg style="left:77.5px;top:6.0px" width="24" height="24" viewBox="-12.0 -12.0 24 24" ><circle r="10" fill="#6f9fd0"/><path d="M5.4 1.6 A5.6 5.6 0 1 0 1 5.5" fill="none" stroke="#fff" stroke-width="2"/><path d="M1.2 2.6 L6.2 7.4 L6.6 1.6Z" fill="#fff"/></svg>
<svg style="left:115.0px;top:6.0px" width="24" height="24" viewBox="-12.0 -12.0 24 24" ><path d="M-2 -5.4 H-6.4 V6.4 H-1.6" fill="none" stroke="#2d2d2d" stroke-width="1.2"/><path d="M-3.6 -1.4 V7.4 H6.6 V-3.2 L3.4 -6 H1.6" fill="#fff" stroke="#2d2d2d" stroke-width="1.2" stroke-linejoin="round"/><path d="M-5.2 -7.4 Q1 -8 1 -2.4" fill="none" stroke="#2d2d2d" stroke-width="1.6"/><path d="M-2.2 -2.8 L4.2 -2.8 L1 1.4Z" fill="#2d2d2d"/></svg>
<span class="t" style="left:142.00px;top:11.00px;font-size:15px;transform:scaleX(0.9463);">Insert</span>
<svg style="left:198.0px;top:6.0px" width="24" height="24" viewBox="-12.0 -12.0 24 24" ><circle r="9" fill="#fff" stroke="#2d2d2d" stroke-width="1.4"/><circle r="6.6" fill="#fff" stroke="#2d2d2d" stroke-width="1.2"/><path d="M0 -6.6 A6.6 6.6 0 0 1 6.6 0 H0Z" fill="#e4e4e4"/><path d="M0 -6.6 V0 H6.6" fill="none" stroke="#2d2d2d" stroke-width="1.4"/></svg>
<svg style="left:236.0px;top:6.0px" width="24" height="24" viewBox="-12.0 -12.0 24 24" ><path d="M-6.4 -5 V4.8 a6.4 2.8 0 0 0 12.8 0 V-5" fill="#8a8a8a" stroke="#2d2d2d" stroke-width="1.2"/><path d="M-6.4 -5 V0 h3.4 v2.6 q3 1.6 6 0 V0 h3.400 V-5" fill="#fff" stroke="#2d2d2d" stroke-width="1.2"/><ellipse cx="0" cy="-5" rx="6.4" ry="2.8" fill="#fff" stroke="#2d2d2d" stroke-width="1.200"/></svg>
<svg style="left:270.0px;top:6.0px" width="24" height="24" viewBox="-12.0 -12.0 24 24" ><path d="M-6 -5.9 v10.8 a6.0 2.6 0 0 0 12 0 v-10.8" fill="#fff" stroke="#555" stroke-width="1"/><ellipse cx="0.0" cy="-5.9" rx="6.0" ry="2.6" fill="#fff" stroke="#555" stroke-width="1"/><path d="M-9 -2.600 q-1.200 2.800 3 3.600 M9 -2.600 q1.200 2.800 -3 3.600" fill="none" stroke="#2d2d2d" stroke-width="1.600"/><path d="M-2.600 1.600 L-6.400 -1 L-6.200 3.800Z M2.600 1.600 L6.400 -1 L6.200 3.800Z" fill="#2d2d2d"/></svg>
<svg style="left:303.5px;top:6.0px" width="24" height="24" viewBox="-12.0 -12.0 24 24" ><path d="M-6 -4.4 v10.3 a6.0 2.6 0 0 0 12 0 v-10.3" fill="#fff" stroke="#555" stroke-width="1"/><ellipse cx="0.0" cy="-4.4" rx="6.0" ry="2.6" fill="#fff" stroke="#555" stroke-width="1"/><path d="M0.00 -2.00 L0.00 -5.08" stroke="#2d2d2d" stroke-width="2" fill="none"/><path d="M0.00 -9.50 L3.54 -5.08 L-3.54 -5.08Z" fill="#2d2d2d"/><path d="M-9.600 -4 v9.400 M9.600 -4 v9.400" stroke="#2d2d2d" stroke-width="1.800"/></svg>
<svg style="left:338.0px;top:6.0px" width="24" height="24" viewBox="-12.0 -12.0 24 24" ><rect x="-7.600" y="-7.600" width="15.200" height="15.200" fill="#fff" stroke="#555" stroke-width="1"/><path d="M0.00 0.00 L0.00 -4.30" stroke="#2d2d2d" stroke-width="1.8" fill="none"/><path d="M0.00 -8.20 L3.12 -4.30 L-3.12 -4.30Z" fill="#2d2d2d"/><path d="M0.00 0.00 L0.00 4.30" stroke="#2d2d2d" stroke-width="1.8" fill="none"/><path d="M0.00 8.20 L-3.12 4.30 L3.12 4.30Z" fill="#2d2d2d"/><path d="M0.00 0.00 L-4.30 0.00" stroke="#2d2d2d" stroke-width="1.8" fill="none"/><path d="M-8.20 0.00 L-4.30 -3.12 L-4.30 3.12Z" fill="#2d2d2d"/><path d="M0.00 0.00 L4.30 0.00" stroke="#2d2d2d" stroke-width="1.8" fill="none"/><path d="M8.20 0.00 L4.30 3.12 L4.30 -3.12Z" fill="#2d2d2d"/></svg>
<svg style="left:372.0px;top:6.0px" width="24" height="24" viewBox="-12.0 -12.0 24 24" ><path d="M-5.6 -3.6 v9.2 a5.6 2.4 0 0 0 11.2 0 v-9.2" fill="#fff" stroke="#555" stroke-width="1"/><ellipse cx="0.0" cy="-3.6" rx="5.6" ry="2.4" fill="#fff" stroke="#555" stroke-width="1"/><path d="M0.00 -2.00 L0.00 -5.34" stroke="#2d2d2d" stroke-width="1.8" fill="none"/><path d="M0.00 -9.50 L3.33 -5.34 L-3.33 -5.34Z" fill="#2d2d2d"/><path d="M-9 -1 q-1.200 2.800 3 3.600 M9 -1 q1.200 2.800 -3 3.600" fill="none" stroke="#2d2d2d" stroke-width="1.600"/><path d="M-2.600 3.200 L-6.400 0.600 L-6.200 5.400Z M2.600 3.200 L6.400 0.600 L6.200 5.400Z" fill="#2d2d2d"/></svg>
<svg style="left:406.0px;top:6.0px" width="24" height="24" viewBox="-12.0 -12.0 24 24" ><path d="M-3.200 -5.400 v9.600 h-4 q-1.600 0.200 -1.600 2 q0 1.800 1.600 2 h14.400 q1.600 -0.200 1.600 -2 q0 -1.800 -1.600 -2 h-4 v-9.600" fill="#fff" stroke="#555" stroke-width="1"/><ellipse cx="0" cy="-5.600" rx="3.200" ry="1.600" fill="#fff" stroke="#555" stroke-width="1"/><path d="M0.00 -1.40 L-4.70 -1.40" stroke="#2d2d2d" stroke-width="1.8" fill="none"/><path d="M-8.60 -1.40 L-4.70 -4.52 L-4.70 1.72Z" fill="#2d2d2d"/><path d="M0.00 -1.40 L4.70 -1.40" stroke="#2d2d2d" stroke-width="1.8" fill="none"/><path d="M8.60 -1.40 L4.70 1.72 L4.70 -4.52Z" fill="#2d2d2d"/></svg>
<svg style="left:440.0px;top:6.0px" width="24" height="24" viewBox="-12.0 -12.0 24 24" ><circle r="7.600" fill="#fff" stroke="#555" stroke-width="1"/><path d="M0.00 0.00 L0.00 -5.50" stroke="#2d2d2d" stroke-width="1.8" fill="none"/><path d="M0.00 -9.40 L3.12 -5.50 L-3.12 -5.50Z" fill="#2d2d2d"/><path d="M0.00 0.00 L0.00 5.50" stroke="#2d2d2d" stroke-width="1.8" fill="none"/><path d="M0.00 9.40 L-3.12 5.50 L3.12 5.50Z" fill="#2d2d2d"/><path d="M0.00 0.00 L-5.50 0.00" stroke="#2d2d2d" stroke-width="1.8" fill="none"/><path d="M-9.40 0.00 L-5.50 -3.12 L-5.50 3.12Z" fill="#2d2d2d"/><path d="M0.00 0.00 L5.50 0.00" stroke="#2d2d2d" stroke-width="1.8" fill="none"/><path d="M9.40 0.00 L5.50 3.12 L5.50 -3.12Z" fill="#2d2d2d"/></svg>
<svg style="left:474.0px;top:6.0px" width="24" height="24" viewBox="-12.0 -12.0 24 24" ><path d="M-9 -3 L-4.400 -8.400 V3 L-9 8.400Z M4.400 -3 L9 -8.400 V3 L4.400 8.400Z" fill="#fff" stroke="#666" stroke-width="1"/><path d="M0.00 0.00 L-1.96 0.00" stroke="#2d2d2d" stroke-width="1.8" fill="none"/><path d="M-5.60 0.00 L-1.96 -2.91 L-1.96 2.91Z" fill="#2d2d2d"/><path d="M0.00 0.00 L1.96 0.00" stroke="#2d2d2d" stroke-width="1.8" fill="none"/><path d="M5.60 0.00 L1.96 2.91 L1.96 -2.91Z" fill="#2d2d2d"/></svg>
<svg style="left:512.0px;top:6.0px" width="24" height="24" viewBox="-12.0 -12.0 24 24" ><circle cx="2" cy="-1.600" r="5.600" fill="none" stroke="#666" stroke-width="1"/><path d="M-8 -0.800 q5.600 0.400 8 9" fill="none" stroke="#666" stroke-width="1"/><path d="M0.00 -3.40 L-4.17 -6.22" stroke="#2d2d2d" stroke-width="1.6" fill="none"/><path d="M-7.40 -8.40 L-2.42 -8.80 L-5.92 -3.63Z" fill="#2d2d2d"/><path d="M0.00 -3.40 L4.29 4.51" stroke="#2d2d2d" stroke-width="1.8" fill="none"/><path d="M6.40 8.40 L1.18 6.20 L7.40 2.83Z" fill="#2d2d2d"/></svg>
<svg style="left:545.5px;top:6.0px" width="24" height="24" viewBox="-12.0 -12.0 24 24" ><rect x="-5.200" y="-5.600" width="10.400" height="11.600" rx="1.400" fill="#fff" stroke="#888" stroke-width="1.200"/><path d="M-5.200 -2.600 h10.400 M-5.200 3.600 h10.400" stroke="#888" stroke-width="1"/><path d="M-9.800 -8 v16 M9.800 -8 v16" stroke="#2d2d2d" stroke-width="1.800"/><path d="M-8.60 0.60 L-4.64 0.60" stroke="#2d2d2d" stroke-width="1.6" fill="none"/><path d="M-1.00 0.60 L-4.64 3.51 L-4.64 -2.31Z" fill="#2d2d2d"/><path d="M8.60 0.60 L4.64 0.60" stroke="#2d2d2d" stroke-width="1.6" fill="none"/><path d="M1.00 0.60 L4.64 -2.31 L4.64 3.51Z" fill="#2d2d2d"/></svg>
<svg style="left:584.0px;top:6.0px" width="24" height="24" viewBox="-12.0 -12.0 24 24" ><rect x="-7.600" y="-7.600" width="15.200" height="15.200" fill="none" stroke="#2d2d2d" stroke-width="1.400" stroke-dasharray="3 2"/><rect x="-4.600" y="-4.800" width="6.200" height="6.200" fill="#fff" stroke="#2d2d2d" stroke-width="1.200"/><rect x="-1.400" y="-1.600" width="6.200" height="6.200" fill="#fff" stroke="#2d2d2d" stroke-width="1.200"/><rect x="-9.1" y="-9.1" width="3" height="3" fill="#fff" stroke="#2d2d2d" stroke-width="1"/><rect x="-9.1" y="6.1" width="3" height="3" fill="#fff" stroke="#2d2d2d" stroke-width="1"/><rect x="6.1" y="-9.1" width="3" height="3" fill="#fff" stroke="#2d2d2d" stroke-width="1"/><rect x="6.1" y="6.1" width="3" height="3" fill="#fff" stroke="#2d2d2d" stroke-width="1"/></svg>
<svg style="left:618.5px;top:6.0px" width="24" height="24" viewBox="-12.0 -12.0 24 24" ><path d="M-4.2 -2.8 v8.9 a6.5 2.8 0 0 0 13 0 v-8.9" fill="#fff" stroke="#2d2d2d" stroke-width="1.1"/><ellipse cx="2.3" cy="-2.8" rx="6.5" ry="2.8" fill="#fff" stroke="#2d2d2d" stroke-width="1.1"/><path d="M-0.600 3.200 q2.400 2 5 0 v-2.600 M2 -2.600 q1.200 -1.200 2.800 -0.800" fill="none" stroke="#2d2d2d" stroke-width="1.100"/><path d="M-3.800 -10 L-2 -5.600 L2.600 -5.200 L-0.900 -2.200 L0.200 2.400 L-3.800 0 L-7.800 2.400 L-6.700 -2.200 L-10.200 -5.200 L-5.600 -5.600Z" fill="#2d2d2d"/></svg>
<svg style="left:651.5px;top:6.0px" width="24" height="24" viewBox="-12.0 -12.0 24 24" ><path d="M-7.6 -5.8 v11.000000000000002 a6.8 2.8 0 0 0 13.6 0 v-11.000000000000002" fill="#fff" stroke="#2d2d2d" stroke-width="1.2"/><ellipse cx="-0.7999999999999998" cy="-5.8" rx="6.8" ry="2.8" fill="#fff" stroke="#2d2d2d" stroke-width="1.2"/><path d="M-7.600 -1.800 a6.800 2.800 0 0 0 13.600 0" fill="none" stroke="#2d2d2d" stroke-width="1.200"/><path d="M-3.200 4.400 q2.400 1.200 4.400 0.200" fill="none" stroke="#2d2d2d" stroke-width="1.100"/><path d="M2.800 -0.800 L3.200 8.800 L5.400 6.800 L7.200 10 L8.800 9.200 L7 6 L9.800 5.600Z" fill="#2d2d2d" stroke="#fff" stroke-width="0.500"/></svg>
<svg style="left:686.0px;top:6.0px" width="24" height="24" viewBox="-12.0 -12.0 24 24" ><path d="M-8.600 0.400 V6.600 L-6.600 8.600 H8.400 V1.400 L6.400 -0.600 H-6.600Z" fill="#fff" stroke="#2d2d2d" stroke-width="1.200" stroke-linejoin="round"/><path d="M-8.600 0.400 L-6.600 2.400 H8.400 M-6.600 2.400 V8.600" fill="none" stroke="#2d2d2d" stroke-width="1"/><path d="M-6.4 -2.3 v2.4 a2.8 1.3 0 0 0 5.6 0 v-2.4" fill="#fff" stroke="#2d2d2d" stroke-width="1"/><ellipse cx="-3.6000000000000005" cy="-2.3" rx="2.8" ry="1.3" fill="#fff" stroke="#2d2d2d" stroke-width="1"/><path d="M1.2 -8.3 v2.5999999999999996 a3.2 1.5 0 0 0 6.4 0 v-2.5999999999999996" fill="#fff" stroke="#666" stroke-width="1"/><ellipse cx="4.4" cy="-8.3" rx="3.2" ry="1.5" fill="#fff" stroke="#666" stroke-width="1"/><path d="M4.400 -4.200 v2.400" stroke="#2d2d2d" stroke-width="1"/><path d="M2.600 -2.200 h3.600 l-1.800 2.200z" fill="#2d2d2d"/><ellipse cx="4.400" cy="1.200" rx="2.800" ry="1.200" fill="#fff" stroke="#2d2d2d" stroke-width="0.900"/></svg>
<svg style="left:720.0px;top:6.0px" width="24" height="24" viewBox="-12.0 -12.0 24 24" ><path d="M-3.8 -9.4 h4.600 l1.600 1.400 v3.400 l-4 2.200 h-4.600 l-1.600 -1.400 v-2.400 h3 z" fill="#fff" stroke="#2d2d2d" stroke-width="1.100" stroke-linejoin="round"/><path d="M-7.8 -4.800000000000001 l1.600 1.200 h3.400 l2.400 -1.600 v-3.800" fill="none" stroke="#2d2d2d" stroke-width="0.900"/><path d="M4.8 0.2 h4.600 l1.600 1.400 v3.400 l-4 2.200 h-4.600 l-1.600 -1.400 v-2.400 h3 z" fill="#fff" stroke="#2d2d2d" stroke-width="1.100" stroke-linejoin="round"/><path d="M0.7999999999999998 4.8 l1.600 1.200 h3.400 l2.400 -1.600 v-3.800" fill="none" stroke="#2d2d2d" stroke-width="0.900"/><path d="M-7.400 -1.800 v4.400 q0 1.400 1.400 1.400 h3" fill="none" stroke="#2d2d2d" stroke-width="1.100"/><path d="M-3.400 2 l3 2 -3 2z" fill="#2d2d2d"/></svg>
<svg style="left:754.0px;top:6.0px" width="24" height="24" viewBox="-12.0 -12.0 24 24" ><rect x="-8.400" y="-8.400" width="16.800" height="16.800" rx="1.400" fill="#8c8c8c" stroke="#2d2d2d" stroke-width="1.600"/><rect x="-7" y="-7" width="6.400" height="6.600" fill="#fff"/><path d="M0 -8.400 v16.800 M-8.400 0 h16.800" stroke="#2d2d2d" stroke-width="1.600"/></svg>
<svg style="left:788.0px;top:6.0px" width="24" height="24" viewBox="-12.0 -12.0 24 24" ><circle cx="-2" cy="-6.4" r="2.700" fill="#fff" stroke="#2d2d2d" stroke-width="0.900" stroke-dasharray="none"/><circle cx="2.4" cy="-4.4" r="2.700" fill="#fff" stroke="#2d2d2d" stroke-width="0.900" stroke-dasharray="1.200 0.800"/><circle cx="-5.6" cy="0" r="2.700" fill="#999" stroke="#2d2d2d" stroke-width="0.900" stroke-dasharray="none"/><circle cx="-1.4" cy="1.2" r="2.700" fill="#999" stroke="#2d2d2d" stroke-width="0.900" stroke-dasharray="1.200 0.800"/><circle cx="6" cy="-2.4" r="2.700" fill="#999" stroke="#2d2d2d" stroke-width="0.900" stroke-dasharray="none"/><circle cx="4.4" cy="1.8" r="2.700" fill="#999" stroke="#2d2d2d" stroke-width="0.900" stroke-dasharray="1.200 0.800"/><circle cx="1.4" cy="5.2" r="2.700" fill="#999" stroke="#2d2d2d" stroke-width="0.900" stroke-dasharray="none"/><circle cx="3.8" cy="6" r="2.700" fill="#999" stroke="#2d2d2d" stroke-width="0.900" stroke-dasharray="1.200 0.800"/></svg>
<svg style="left:822.0px;top:6.0px" width="24" height="24" viewBox="-12.0 -12.0 24 24" ><path d="M-9 -7.400 L-6.400 -9 H-4 L-1.400 -6.400 V5.400 L1 7.400 V8.600 H-6.400 L-9 6.600Z" fill="#fff" stroke="#2d2d2d" stroke-width="1.200" stroke-linejoin="round"/><path d="M-6.400 -9 V-7 L-5.600 -6.400 V5.800 L-1.400 8.400" fill="none" stroke="#2d2d2d" stroke-width="0.900"/><path d="M0.400 -7.400 L3 -9 H6 L8.600 -6.400 V8.600 H2.600 V-5Z" fill="#9a9a9a" stroke="#2d2d2d" stroke-width="1.200" stroke-linejoin="round"/><path d="M-1.400 -6.400 L0.400 -4.400 V5" fill="#ccc" stroke="#999" stroke-width="0.600"/></svg>
<svg style="left:860.0px;top:6.0px" width="24" height="24" viewBox="-12.0 -12.0 24 24" ><path d="M0.14 -5.90 L0.14 -4.50 L-1.04 -4.43 L-1.42 -3.51 L-0.63 -2.62 L-1.62 -1.63 L-2.51 -2.42 L-3.43 -2.04 L-3.50 -0.86 L-4.90 -0.86 L-4.97 -2.04 L-5.89 -2.42 L-6.78 -1.63 L-7.77 -2.62 L-6.98 -3.51 L-7.36 -4.43 L-8.54 -4.50 L-8.54 -5.90 L-7.36 -5.97 L-6.98 -6.89 L-7.77 -7.78 L-6.78 -8.77 L-5.89 -7.98 L-4.97 -8.36 L-4.90 -9.54 L-3.50 -9.54 L-3.43 -8.36 L-2.51 -7.98 L-1.62 -8.77 L-0.63 -7.78 L-1.42 -6.89 L-1.04 -5.97Z" fill="#2d2d2d"/><circle cx="-4.2" cy="-5.2" r="1.7" fill="#fff"/><path d="M9.52 1.75 L9.52 3.85 L7.74 3.96 L7.18 5.33 L8.35 6.66 L6.86 8.15 L5.53 6.98 L4.16 7.54 L4.05 9.32 L1.95 9.32 L1.84 7.54 L0.47 6.98 L-0.86 8.15 L-2.35 6.66 L-1.18 5.33 L-1.74 3.96 L-3.52 3.85 L-3.52 1.75 L-1.74 1.64 L-1.18 0.27 L-2.35 -1.06 L-0.86 -2.55 L0.47 -1.38 L1.84 -1.94 L1.95 -3.72 L4.05 -3.72 L4.16 -1.94 L5.53 -1.38 L6.86 -2.55 L8.35 -1.06 L7.18 0.27 L7.74 1.64Z" fill="#2d2d2d"/><circle cx="3" cy="2.8" r="2.7" fill="#fff"/></svg>
<svg style="left:894.0px;top:6.0px" width="24" height="24" viewBox="-12.0 -12.0 24 24" ><path d="M8.10 -2.91 L8.10 -0.29 L5.89 -0.16 L5.19 1.55 L6.65 3.20 L4.80 5.05 L3.15 3.59 L1.44 4.29 L1.31 6.50 L-1.31 6.50 L-1.44 4.29 L-3.15 3.59 L-4.80 5.05 L-6.65 3.20 L-5.19 1.55 L-5.89 -0.16 L-8.10 -0.29 L-8.10 -2.91 L-5.89 -3.04 L-5.19 -4.75 L-6.65 -6.40 L-4.80 -8.25 L-3.15 -6.79 L-1.44 -7.49 L-1.31 -9.70 L1.31 -9.70 L1.44 -7.49 L3.15 -6.79 L4.80 -8.25 L6.65 -6.40 L5.19 -4.75 L5.89 -3.04Z" fill="#2d2d2d"/><circle cx="0" cy="-1.6" r="3.2" fill="#fff"/><path d="M-9 8.200 h18" stroke="#2d2d2d" stroke-width="1.800"/><path d="M-7.600 7.400 l1.400 -2.600 h1.400 l1.400 2.600 M-1.800 7.400 l1.400 -2.200 h0.800 l1.400 2.200 M4 7.400 l1.400 -2.600 h1.400 l1.400 2.600" fill="#2d2d2d"/></svg>
<svg style="left:928.0px;top:6.0px" width="24" height="24" viewBox="-12.0 -12.0 24 24" ><path d="M-6.4 -9 L-5.2 3.400" stroke="#2d2d2d" stroke-width="1.700"/><path d="M-3 -9 L-1.8 3.400" stroke="#2d2d2d" stroke-width="1.700"/><path d="M0.4 -9 L1.6 3.400" stroke="#2d2d2d" stroke-width="1.700"/><path d="M3.8 -9 L5.0 3.400" stroke="#2d2d2d" stroke-width="1.700"/><path d="M7.2 -9 L8.4 3.400" stroke="#2d2d2d" stroke-width="1.700"/><path d="M-8.800 -6 h17 q1 4 0 8 h-17 z" fill="none" stroke="#2d2d2d" stroke-width="1.200"/><path d="M-7.00 7.60 L2.90 7.60" stroke="#2d2d2d" stroke-width="1.7" fill="none"/><path d="M6.80 7.60 L2.90 10.72 L2.90 4.48Z" fill="#2d2d2d"/></svg>
<svg style="left:961.0px;top:6.0px" width="24" height="24" viewBox="-12.0 -12.0 24 24" ><rect x="-7" y="-9" width="15.600" height="7" rx="3.500" fill="#fff" stroke="#888" stroke-width="1"/><rect x="-7" y="1.4" width="15.600" height="7" rx="3.500" fill="#fff" stroke="#888" stroke-width="1"/><ellipse cx="-3.600" cy="-5.500" rx="2.200" ry="3.500" fill="#fff" stroke="#888" stroke-width="1"/><ellipse cx="5" cy="4.900" rx="2.200" ry="3.500" fill="#fff" stroke="#888" stroke-width="1"/><path d="M-3.00 -5.50 L-5.76 -5.50" stroke="#2d2d2d" stroke-width="1.6" fill="none"/><path d="M-9.40 -5.50 L-5.76 -8.41 L-5.76 -2.59Z" fill="#2d2d2d"/><path d="M3.40 4.90 L6.16 4.90" stroke="#2d2d2d" stroke-width="1.6" fill="none"/><path d="M9.80 4.90 L6.16 7.81 L6.16 1.99Z" fill="#2d2d2d"/></svg>
<svg style="left:1000.0px;top:6.0px" width="24" height="24" viewBox="-12.0 -12.0 24 24" ><path d="M-3 7 H-8 V-8.600 H5 V-1" fill="#fff" stroke="#2d2d2d" stroke-width="1.200"/><path d="M-5.600 -5.600 h1.200 M-3.400 -5.600 h6 M-5.600 -3 h1.200 M-3.400 -3 h6 M-5.600 -0.400 h1.200 M-3.400 -0.400 h6" stroke="#2d2d2d" stroke-width="1.200"/><path d="M-3.600 4.600 q5.400 -6 11.400 0 q-6 6 -11.400 0z" fill="#fff" stroke="#2d2d2d" stroke-width="1.100"/><circle cx="2.200" cy="4.600" r="1.800" fill="none" stroke="#2d2d2d" stroke-width="1"/><path d="M-2.600 9 L7.400 0.200" stroke="#2d2d2d" stroke-width="1.300"/></svg>
<svg style="left:1034.0px;top:6.0px" width="24" height="24" viewBox="-12.0 -12.0 24 24" ><path d="M-7.600 -1.400 V7.400 L-5.600 8.800 H-1.400 V0.200 L-3.400 -1.400Z" fill="#fff" stroke="#2d2d2d" stroke-width="1.100" stroke-linejoin="round"/><path d="M-7.600 -1.400 L-5.600 0.200 H-1.400 M-5.600 0.200 V8.800" fill="none" stroke="#2d2d2d" stroke-width="0.900"/><path d="M0.400 -7.600 L2.600 -9.200 H6.200 L8.200 -7.600 V8.800 H2.400 L0.400 7.400Z" fill="#fff" stroke="#2d2d2d" stroke-width="1.100" stroke-linejoin="round"/><path d="M0.400 -7.600 L2.400 -6 H8.200 M2.400 -6 V8.800" fill="none" stroke="#2d2d2d" stroke-width="0.900"/><path d="M-4.800 -9.600 v8 M-8.800 -5.600 h8" stroke="#1b5faa" stroke-width="2"/></svg>
<svg style="left:1072.0px;top:6.0px" width="24" height="24" viewBox="-12.0 -12.0 24 24" ><ellipse cx="2.600" cy="0" rx="4.800" ry="8" fill="none" stroke="#2d2d2d" stroke-width="1.700" transform="rotate(12 2.600 0)"/><path d="M4.00 -2.20 L-4.91 4.73" stroke="#1b5faa" stroke-width="2" fill="none"/><path d="M-8.60 7.60 L-7.20 1.77 L-2.61 7.68Z" fill="#1b5faa"/></svg>
<svg style="left:1106.0px;top:6.0px" width="24" height="24" viewBox="-12.0 -12.0 24 24" ><ellipse cx="0" cy="0.400" rx="8" ry="4.800" fill="none" stroke="#2d2d2d" stroke-width="1.700"/><path d="M-6.400 -6.600 q6 -3 13.200 -0.400 M6.400 7.400 q-6 3 -13.200 0.400" fill="none" stroke="#1b5faa" stroke-width="1.200"/><path d="M-8.200 -5.800 l3.400 -2.600 v3.600z M8.200 6.600 l-3.400 2.600 v-3.600z" fill="#1b5faa"/></svg>
<svg style="left:1140.0px;top:6.0px" width="24" height="24" viewBox="-12.0 -12.0 24 24" ><ellipse cx="0" cy="-2.400" rx="8" ry="4.800" fill="none" stroke="#2d2d2d" stroke-width="1.700"/><path d="M-7.60 3.00 L-7.60 5.74" stroke="#1b5faa" stroke-width="1.2" fill="none"/><path d="M-7.60 8.60 L-9.89 5.74 L-5.31 5.74Z" fill="#1b5faa"/><path d="M-2.60 4.40 L-2.60 5.74" stroke="#1b5faa" stroke-width="1.2" fill="none"/><path d="M-2.60 8.60 L-4.89 5.74 L-0.31 5.74Z" fill="#1b5faa"/><path d="M2.60 4.40 L2.60 5.74" stroke="#1b5faa" stroke-width="1.2" fill="none"/><path d="M2.60 8.60 L0.31 5.74 L4.89 5.74Z" fill="#1b5faa"/><path d="M7.60 3.00 L7.60 5.74" stroke="#1b5faa" stroke-width="1.2" fill="none"/><path d="M7.60 8.60 L5.31 5.74 L9.89 5.74Z" fill="#1b5faa"/></svg>
<svg style="left:1174.0px;top:6.0px" width="24" height="24" viewBox="-12.0 -12.0 24 24" ><ellipse cx="0" cy="0" rx="7.600" ry="4.800" fill="none" stroke="#2d2d2d" stroke-width="1.700"/><path d="M-9.20 -9.00 L-7.41 -7.21" stroke="#1b5faa" stroke-width="1.2" fill="none"/><path d="M-5.20 -5.00 L-9.17 -5.44 L-5.64 -8.97Z" fill="#1b5faa"/><path d="M9.20 -9.00 L7.41 -7.21" stroke="#1b5faa" stroke-width="1.2" fill="none"/><path d="M5.20 -5.00 L5.64 -8.97 L9.17 -5.44Z" fill="#1b5faa"/><path d="M-9.20 9.00 L-7.41 7.21" stroke="#1b5faa" stroke-width="1.2" fill="none"/><path d="M-5.20 5.00 L-5.64 8.97 L-9.17 5.44Z" fill="#1b5faa"/><path d="M9.20 9.00 L7.41 7.21" stroke="#1b5faa" stroke-width="1.2" fill="none"/><path d="M5.20 5.00 L9.17 5.44 L5.64 8.97Z" fill="#1b5faa"/></svg>
<svg style="left:1208.0px;top:6.0px" width="24" height="24" viewBox="-12.0 -12.0 24 24" ><ellipse cx="0" cy="-1" rx="8" ry="4.600" fill="none" stroke="#2d2d2d" stroke-width="1.700"/><path d="M-7 -9.400 v2.400 M-2.400 -10 v2.400 M2.400 -10 v2.400 M7 -9.400 v2.400" stroke="#1b5faa" stroke-width="1.200"/><path d="M0.00 0.00 L0.00 5.70" stroke="#1b5faa" stroke-width="1.4" fill="none"/><path d="M0.00 9.60 L-3.12 5.70 L3.12 5.70Z" fill="#1b5faa"/></svg>
<div class="abs" style="left:1249px;top:3px;width:160px;height:31px;background:#f0f0f0;border-radius:4px"></div>
<span class="t" style="left:1258.00px;top:10.00px;font-size:15.2px;transform:scaleX(0.8851);">Search tools...</span>
<div class="abs" style="left:1348px;top:9px;width:33px;height:19px;background:#f7f7f7;border:1px solid #bdbdbd;border-radius:2px"></div>
<div class="abs" style="left:1382px;top:9px;width:17px;height:19px;background:#f7f7f7;border:1px solid #bdbdbd;border-radius:2px"></div>
<span class="t" style="left:1351.50px;top:14.00px;font-size:11.5px;transform:scaleX(1.0756);">alt/</span>
<svg style="left:1368.5px;top:15px" width="10" height="7" viewBox="0 0 10 7" fill="none" stroke="#2d2d2d" stroke-width="1"><path d="M0.500 1 h2.600 l3 5 h3.400 M6.400 1 h3"/></svg>
<span class="t" style="left:1387.50px;top:13.00px;font-size:12px;transform:scaleX(1.0000);">c</span>
</div>
<div id="panel">
<div class="abs" style="left:0;top:0;width:206px;height:1px;background:#ccc"></div>
<svg style="left:8.5px;top:14.0px" width="20" height="20" viewBox="-10.0 -10.0 20 20" ><path d="M-7.400 -6.600 H7.400 L1.400 0.600 V6.400 L-1.400 4.400 V0.600Z" fill="none" stroke="#2d2d2d" stroke-width="1.400" stroke-linejoin="round"/></svg>
<div class="abs" style="left:39px;top:8px;width:122px;height:30px;border:1px solid #b8b8b8;border-radius:4px;background:#fff"></div>
<span class="t" style="left:46.00px;top:17.40px;font-size:13.8px;font-style:italic;color:#8a8a8a;transform:scaleX(0.9265);">Filter by name</span>
<svg style="left:172.0px;top:13.0px" width="20" height="20" viewBox="-10.0 -10.0 20 20" ><path d="M-4.200 -5.400 h11 M-4.200 -1.800 h11 M-4.200 1.800 h11 M-4.200 5.400 h11" stroke="#2d2d2d" stroke-width="1.800"/><path d="M-7 -5.400 h1.800 M-7 -1.800 h1.800 M-7 1.800 h1.800 M-7 5.400 h1.800" stroke="#2d2d2d" stroke-width="1.800"/></svg>
<span class="t" style="left:4.40px;top:47.90px;font-size:13.4px;font-weight:700;transform:scaleX(0.9421);">Instances (26)</span>
<svg style="left:175.0px;top:44.0px" width="20" height="20" viewBox="-10.0 -10.0 20 20" ><path d="M-8.400 -2 V-6.400 h6 l1.600 1.800 h9.400 v11 H-3" fill="#fff" stroke="#2d2d2d" stroke-width="1.100" stroke-linejoin="round"/><path d="M-8.400 3.400 v3 h2.400" fill="none" stroke="#2d2d2d" stroke-width="1.100" stroke-dasharray="1.600 1.200"/><path d="M-4.600 -2.600 v8 M-8.600 1.400 h8" stroke="#1b5faa" stroke-width="2"/></svg>
<div class="abs" style="left:0;top:67px;width:205px;height:907px;overflow:hidden">
<svg style="left:23.5px;top:-12.5px" width="20" height="20" viewBox="-10.0 -10.0 20 20" ><path d="M-7 1.400 V5.400 L-4.600 7.400 H6.800 V-5.400 L4.600 -7.400 H-1.400 V-0.400 L-4.800 -0.600Z" fill="#fff" stroke="#3a3a3a" stroke-width="1.150" stroke-linejoin="round"/><path d="M-7 1.400 L-4.600 3.200 H2.600 V-5.600 L-1.400 -5.800 M2.600 -5.600 H6.600 M-4.600 3.200 V7.400 M2.600 3.200 L4.400 1.400" fill="none" stroke="#3a3a3a" stroke-width="0.900"/></svg>
<span class="t" style="left:46.30px;top:-9.00px;font-size:14px;transform:scaleX(0.8988);">Motor Mount Plate &lt;1&gt;</span>
<svg style="left:0.0px;top:14.0px" width="20" height="20" viewBox="-10.0 -10.0 20 20" ><path d="M-2.600 -5.200 L2.600 0 L-2.600 5.200" fill="none" stroke="#505050" stroke-width="2"/></svg>
<svg style="left:23.5px;top:13.5px" width="20" height="20" viewBox="-10.0 -10.0 20 20" ><path d="M-7 1.400 V5.400 L-4.600 7.400 H6.800 V-5.400 L4.600 -7.400 H-1.400 V-0.400 L-4.800 -0.600Z" fill="#fff" stroke="#3a3a3a" stroke-width="1.150" stroke-linejoin="round"/><path d="M-7 1.400 L-4.600 3.200 H2.600 V-5.600 L-1.400 -5.800 M2.600 -5.600 H6.600 M-4.600 3.200 V7.400 M2.600 3.200 L4.400 1.400" fill="none" stroke="#3a3a3a" stroke-width="0.900"/></svg>
<span class="t" style="left:46.30px;top:17.00px;font-size:14px;transform:scaleX(0.9004);">Origin Cube &lt;1&gt;</span>
<svg style="left:23.5px;top:39.5px" width="20" height="20" viewBox="-10.0 -10.0 20 20" ><path d="M-7 1.400 V5.400 L-4.600 7.400 H6.800 V-5.400 L4.600 -7.400 H-1.400 V-0.400 L-4.800 -0.600Z" fill="#fff" stroke="#3a3a3a" stroke-width="1.150" stroke-linejoin="round"/><path d="M-7 1.400 L-4.600 3.200 H2.600 V-5.600 L-1.400 -5.800 M2.600 -5.600 H6.600 M-4.600 3.200 V7.400 M2.600 3.200 L4.400 1.400" fill="none" stroke="#3a3a3a" stroke-width="0.900"/></svg>
<span class="t" style="left:46.30px;top:43.00px;font-size:14px;transform:scaleX(0.9359);">Small Plate &lt;1&gt;</span>
<svg style="left:0.0px;top:66.0px" width="20" height="20" viewBox="-10.0 -10.0 20 20" ><path d="M-2.600 -5.200 L2.600 0 L-2.600 5.200" fill="none" stroke="#505050" stroke-width="2"/></svg>
<svg style="left:23.5px;top:65.5px" width="20" height="20" viewBox="-10.0 -10.0 20 20" ><path d="M-7.400 1.400 V5.600 L-5.600 7.200 H7.400 V2.400 L5.600 0.800 H-5.600Z" fill="#fff" stroke="#3a3a3a" stroke-width="1.100" stroke-linejoin="round"/><path d="M-7.400 1.400 L-5.600 3.200 H7.400 M-5.600 3.200 V7.200" fill="none" stroke="#3a3a3a" stroke-width="0.900"/><path d="M-5.600 -0.800 v2.400 a2.200 1 0 0 0 4.400 0 v-2.400" fill="#fff" stroke="#3a3a3a" stroke-width="0.900"/><ellipse cx="-3.400" cy="-0.800" rx="2.200" ry="1" fill="#fff" stroke="#3a3a3a" stroke-width="0.900"/><path d="M1.200 -6.800 v2.800 a2.600 1.100 0 0 0 5.200 0 v-2.800" fill="#fff" stroke="#3a3a3a" stroke-width="0.900"/><ellipse cx="3.800" cy="-6.800" rx="2.600" ry="1.100" fill="#fff" stroke="#3a3a3a" stroke-width="0.900"/><path d="M3.800 -2.800 v2" stroke="#3a3a3a" stroke-width="0.900"/><ellipse cx="3.800" cy="0.800" rx="2.200" ry="1" fill="#fff" stroke="#3a3a3a" stroke-width="0.900"/></svg>
<span class="t" style="left:46.30px;top:69.00px;font-size:14px;transform:scaleX(0.9137);">Replicate 1</span>
<svg style="left:0.0px;top:92.0px" width="20" height="20" viewBox="-10.0 -10.0 20 20" ><path d="M-2.600 -5.200 L2.600 0 L-2.600 5.200" fill="none" stroke="#505050" stroke-width="2"/></svg>
<svg style="left:23.5px;top:91.5px" width="20" height="20" viewBox="-10.0 -10.0 20 20" ><path d="M-5.400 0.800 V5.400 L-3.400 7.400 H7.200 V-4 Q7.200 -6.600 4.600 -6.600 H0.400 V0.400 L-3.200 0.600Z" fill="#fff" stroke="#3a3a3a" stroke-width="1.150" stroke-linejoin="round"/><path d="M-5.400 1.200 L-3.400 3.200 H3.600 V-4.600 H0.600 M-3.400 3.200 V7.400" fill="none" stroke="#3a3a3a" stroke-width="0.900"/><rect x="-8" y="-8" width="7.600" height="6.600" fill="#2f6fbd"/><path d="M-5.500 -8 v6.600 M-3 -8 v6.600 M-8 -5.800 h7.600 M-8 -3.600 h7.600" stroke="#cfe0f4" stroke-width="0.700"/></svg>
<span class="t" style="left:46.30px;top:95.00px;font-size:14px;transform:scaleX(0.8908);">1/2&quot; Rou...</span>
<svg style="left:110.0px;top:92.0px" width="20" height="20" viewBox="-10.0 -10.0 20 20" ><circle r="2.900" fill="#2d2d2d"/><path d="M0 -9 v2 M0 -5.800 v1.800 M0 4 v1.800 M0 7 v2" stroke="#2d2d2d" stroke-width="1.700"/></svg>
<svg style="left:0.0px;top:118.0px" width="20" height="20" viewBox="-10.0 -10.0 20 20" ><path d="M-2.600 -5.200 L2.600 0 L-2.600 5.200" fill="none" stroke="#505050" stroke-width="2"/></svg>
<svg style="left:23.5px;top:117.5px" width="20" height="20" viewBox="-10.0 -10.0 20 20" ><rect x="-5.600" y="-4.600" width="12.600" height="12" fill="none" stroke="#3a3a3a" stroke-width="1.100" stroke-dasharray="2.400 1.600"/><rect x="-2.600" y="-2.400" width="5" height="5" fill="#fff" stroke="#3a3a3a" stroke-width="1"/><rect x="-0.400" y="-0.200" width="5" height="5" fill="#fff" stroke="#3a3a3a" stroke-width="1"/><rect x="5.400" y="-6" width="2.600" height="2.600" fill="#fff" stroke="#3a3a3a" stroke-width="0.800"/><rect x="5.400" y="6" width="2.600" height="2.600" fill="#fff" stroke="#3a3a3a" stroke-width="0.800"/><rect x="-7" y="6" width="2.600" height="2.600" fill="#fff" stroke="#3a3a3a" stroke-width="0.800"/><rect x="-8" y="-8" width="7.600" height="6.600" fill="#2f6fbd"/><path d="M-5.500 -8 v6.600 M-3 -8 v6.600 M-8 -5.800 h7.600 M-8 -3.600 h7.600" stroke="#cfe0f4" stroke-width="0.700"/></svg>
<span class="t" style="left:46.30px;top:121.00px;font-size:14px;transform:scaleX(0.8929);">Kraken ...</span>
<svg style="left:110.0px;top:118.0px" width="20" height="20" viewBox="-10.0 -10.0 20 20" ><circle r="8" fill="#6f9fd0"/><circle r="2.900" fill="#fff"/><path d="M0 -8 v4 M0 4 v4" stroke="#fff" stroke-width="1.700"/></svg>
<svg style="left:0.0px;top:144.0px" width="20" height="20" viewBox="-10.0 -10.0 20 20" ><path d="M-2.600 -5.200 L2.600 0 L-2.600 5.200" fill="none" stroke="#505050" stroke-width="2"/></svg>
<svg style="left:23.5px;top:143.5px" width="20" height="20" viewBox="-10.0 -10.0 20 20" ><path d="M-5.400 0.800 V5.400 L-3.400 7.400 H7.200 V-4 Q7.200 -6.600 4.600 -6.600 H0.400 V0.400 L-3.200 0.600Z" fill="#fff" stroke="#3a3a3a" stroke-width="1.150" stroke-linejoin="round"/><path d="M-5.400 1.200 L-3.400 3.200 H3.600 V-4.600 H0.600 M-3.400 3.200 V7.400" fill="none" stroke="#3a3a3a" stroke-width="0.900"/><rect x="-8" y="-8" width="7.600" height="6.600" fill="#2f6fbd"/><path d="M-5.500 -8 v6.600 M-3 -8 v6.600 M-8 -5.800 h7.600 M-8 -3.600 h7.600" stroke="#cfe0f4" stroke-width="0.700"/></svg>
<span class="t" style="left:46.30px;top:147.00px;font-size:14px;transform:scaleX(0.8917);">2&quot; Flex ...</span>
<svg style="left:110.0px;top:144.0px" width="20" height="20" viewBox="-10.0 -10.0 20 20" ><circle r="2.900" fill="#2d2d2d"/><path d="M0 -9 v2 M0 -5.800 v1.800 M0 4 v1.800 M0 7 v2" stroke="#2d2d2d" stroke-width="1.700"/></svg>
<svg style="left:0.0px;top:170.0px" width="20" height="20" viewBox="-10.0 -10.0 20 20" ><path d="M-2.600 -5.200 L2.600 0 L-2.600 5.200" fill="none" stroke="#505050" stroke-width="2"/></svg>
<svg style="left:23.5px;top:169.5px" width="20" height="20" viewBox="-10.0 -10.0 20 20" ><path d="M-7.400 1.400 V5.600 L-5.600 7.200 H7.400 V2.400 L5.600 0.800 H-5.600Z" fill="#fff" stroke="#3a3a3a" stroke-width="1.100" stroke-linejoin="round"/><path d="M-7.400 1.400 L-5.600 3.200 H7.400 M-5.600 3.200 V7.200" fill="none" stroke="#3a3a3a" stroke-width="0.900"/><path d="M-5.600 -0.800 v2.400 a2.200 1 0 0 0 4.400 0 v-2.400" fill="#fff" stroke="#3a3a3a" stroke-width="0.900"/><ellipse cx="-3.400" cy="-0.800" rx="2.200" ry="1" fill="#fff" stroke="#3a3a3a" stroke-width="0.900"/><path d="M1.200 -6.800 v2.800 a2.600 1.100 0 0 0 5.200 0 v-2.800" fill="#fff" stroke="#3a3a3a" stroke-width="0.900"/><ellipse cx="3.800" cy="-6.800" rx="2.600" ry="1.100" fill="#fff" stroke="#3a3a3a" stroke-width="0.900"/><path d="M3.800 -2.800 v2" stroke="#3a3a3a" stroke-width="0.900"/><ellipse cx="3.800" cy="0.800" rx="2.200" ry="1" fill="#fff" stroke="#3a3a3a" stroke-width="0.900"/></svg>
<span class="t" style="left:46.30px;top:173.00px;font-size:14px;transform:scaleX(0.9209);">Replicate 2</span>
<div class="abs" style="left:0;top:194px;width:200px;height:24px;background:#b3dbf3"></div>
<svg style="left:0.0px;top:196.0px" width="20" height="20" viewBox="-10.0 -10.0 20 20" ><path d="M-2.600 -5.200 L2.600 0 L-2.600 5.200" fill="none" stroke="#505050" stroke-width="2"/></svg>
<svg style="left:23.5px;top:195.5px" width="20" height="20" viewBox="-10.0 -10.0 20 20" ><path d="M-5.400 0.800 V5.400 L-3.400 7.400 H7.200 V-4 Q7.200 -6.600 4.600 -6.600 H0.400 V0.400 L-3.200 0.600Z" fill="#fff" stroke="#3a3a3a" stroke-width="1.150" stroke-linejoin="round"/><path d="M-5.400 1.200 L-3.400 3.200 H3.600 V-4.600 H0.600 M-3.400 3.200 V7.400" fill="none" stroke="#3a3a3a" stroke-width="0.900"/><rect x="-8" y="-8" width="7.600" height="6.600" fill="#2f6fbd"/><path d="M-5.500 -8 v6.600 M-3 -8 v6.600 M-8 -5.800 h7.600 M-8 -3.600 h7.600" stroke="#cfe0f4" stroke-width="0.700"/></svg>
<span class="t" style="left:46.30px;top:199.00px;font-size:14px;transform:scaleX(0.9251);">12t Alu...</span>
<svg style="left:110.0px;top:196.0px" width="20" height="20" viewBox="-10.0 -10.0 20 20" ><circle r="2.900" fill="#2d2d2d"/><path d="M0 -9 v2 M0 -5.800 v1.800 M0 4 v1.800 M0 7 v2" stroke="#2d2d2d" stroke-width="1.700"/></svg>
<div class="abs" style="left:0;top:220px;width:200px;height:24px;background:#b3dbf3"></div>
<svg style="left:23.5px;top:221.5px" width="20" height="20" viewBox="-10.0 -10.0 20 20" ><path d="M-5.400 0.800 V5.400 L-3.400 7.400 H7.200 V-4 Q7.200 -6.600 4.600 -6.600 H0.400 V0.400 L-3.200 0.600Z" fill="#fff" stroke="#3a3a3a" stroke-width="1.150" stroke-linejoin="round"/><path d="M-5.400 1.200 L-3.400 3.200 H3.600 V-4.600 H0.600 M-3.400 3.200 V7.400" fill="none" stroke="#3a3a3a" stroke-width="0.900"/><rect x="-8" y="-8" width="7.600" height="6.600" fill="#2f6fbd"/><path d="M-5.500 -8 v6.600 M-3 -8 v6.600 M-8 -5.800 h7.600 M-8 -3.600 h7.600" stroke="#cfe0f4" stroke-width="0.700"/></svg>
<span class="t" style="left:46.30px;top:225.00px;font-size:14px;transform:scaleX(0.9268);">3D-Print...</span>
<svg style="left:110.0px;top:222.0px" width="20" height="20" viewBox="-10.0 -10.0 20 20" ><circle r="2.900" fill="#2d2d2d"/><path d="M0 -9 v2 M0 -5.800 v1.800 M0 4 v1.800 M0 7 v2" stroke="#2d2d2d" stroke-width="1.700"/></svg>
<div class="abs" style="left:0;top:246px;width:200px;height:24px;background:#b3dbf3"></div>
<svg style="left:23.5px;top:247.5px" width="20" height="20" viewBox="-10.0 -10.0 20 20" ><path d="M-5.400 0.800 V5.400 L-3.400 7.400 H7.200 V-4 Q7.200 -6.600 4.600 -6.600 H0.400 V0.400 L-3.200 0.600Z" fill="#fff" stroke="#3a3a3a" stroke-width="1.150" stroke-linejoin="round"/><path d="M-5.400 1.200 L-3.400 3.200 H3.600 V-4.600 H0.600 M-3.400 3.200 V7.400" fill="none" stroke="#3a3a3a" stroke-width="0.900"/><rect x="-8" y="-8" width="7.600" height="6.600" fill="#2f6fbd"/><path d="M-5.500 -8 v6.600 M-3 -8 v6.600 M-8 -5.800 h7.600 M-8 -3.600 h7.600" stroke="#cfe0f4" stroke-width="0.700"/></svg>
<span class="t" style="left:46.30px;top:251.00px;font-size:14px;transform:scaleX(0.9000);">1/2&quot; Hex...</span>
<svg style="left:110.0px;top:248.0px" width="20" height="20" viewBox="-10.0 -10.0 20 20" ><circle r="2.900" fill="#2d2d2d"/><path d="M0 -9 v2 M0 -5.800 v1.800 M0 4 v1.800 M0 7 v2" stroke="#2d2d2d" stroke-width="1.700"/></svg>
<div class="abs" style="left:0;top:272px;width:200px;height:24px;background:#b3dbf3"></div>
<svg style="left:0.0px;top:274.0px" width="20" height="20" viewBox="-10.0 -10.0 20 20" ><path d="M-2.600 -5.200 L2.600 0 L-2.600 5.200" fill="none" stroke="#505050" stroke-width="2"/></svg>
<svg style="left:23.5px;top:273.5px" width="20" height="20" viewBox="-10.0 -10.0 20 20" ><path d="M-5.400 0.800 V5.400 L-3.400 7.400 H7.200 V-4 Q7.200 -6.600 4.600 -6.600 H0.400 V0.400 L-3.200 0.600Z" fill="#fff" stroke="#3a3a3a" stroke-width="1.150" stroke-linejoin="round"/><path d="M-5.400 1.200 L-3.400 3.200 H3.600 V-4.600 H0.600 M-3.400 3.200 V7.400" fill="none" stroke="#3a3a3a" stroke-width="0.900"/><rect x="-8" y="-8" width="7.600" height="6.600" fill="#2f6fbd"/><path d="M-5.500 -8 v6.600 M-3 -8 v6.600 M-8 -5.800 h7.600 M-8 -3.600 h7.600" stroke="#cfe0f4" stroke-width="0.700"/></svg>
<span class="t" style="left:46.30px;top:277.00px;font-size:14px;transform:scaleX(0.9153);">36t Cust...</span>
<svg style="left:110.0px;top:274.0px" width="20" height="20" viewBox="-10.0 -10.0 20 20" ><circle r="2.900" fill="#2d2d2d"/><path d="M0 -9 v2 M0 -5.800 v1.800 M0 4 v1.800 M0 7 v2" stroke="#2d2d2d" stroke-width="1.700"/></svg>
<div class="abs" style="left:0;top:298px;width:200px;height:24px;background:#b3dbf3"></div>
<svg style="left:23.5px;top:299.5px" width="20" height="20" viewBox="-10.0 -10.0 20 20" ><path d="M-5.400 0.800 V5.400 L-3.400 7.400 H7.200 V-4 Q7.200 -6.600 4.600 -6.600 H0.400 V0.400 L-3.200 0.600Z" fill="#fff" stroke="#3a3a3a" stroke-width="1.150" stroke-linejoin="round"/><path d="M-5.400 1.200 L-3.400 3.200 H3.600 V-4.600 H0.600 M-3.400 3.200 V7.400" fill="none" stroke="#3a3a3a" stroke-width="0.900"/><rect x="-8" y="-8" width="7.600" height="6.600" fill="#2f6fbd"/><path d="M-5.500 -8 v6.600 M-3 -8 v6.600 M-8 -5.800 h7.600 M-8 -3.600 h7.600" stroke="#cfe0f4" stroke-width="0.700"/></svg>
<span class="t" style="left:46.30px;top:303.00px;font-size:14px;transform:scaleX(0.9361);">30t Alu...</span>
<svg style="left:110.0px;top:300.0px" width="20" height="20" viewBox="-10.0 -10.0 20 20" ><circle r="2.900" fill="#2d2d2d"/><path d="M0 -9 v2 M0 -5.800 v1.800 M0 4 v1.800 M0 7 v2" stroke="#2d2d2d" stroke-width="1.700"/></svg>
<div class="abs" style="left:0;top:324px;width:200px;height:24px;background:#b3dbf3"></div>
<svg style="left:23.5px;top:325.5px" width="20" height="20" viewBox="-10.0 -10.0 20 20" ><path d="M-5.400 0.800 V5.400 L-3.400 7.400 H7.200 V-4 Q7.200 -6.600 4.600 -6.600 H0.400 V0.400 L-3.200 0.600Z" fill="#fff" stroke="#3a3a3a" stroke-width="1.150" stroke-linejoin="round"/><path d="M-5.400 1.200 L-3.400 3.200 H3.600 V-4.600 H0.600 M-3.400 3.200 V7.400" fill="none" stroke="#3a3a3a" stroke-width="0.900"/><rect x="-8" y="-8" width="7.600" height="6.600" fill="#2f6fbd"/><path d="M-5.500 -8 v6.600 M-3 -8 v6.600 M-8 -5.800 h7.600 M-8 -3.600 h7.600" stroke="#cfe0f4" stroke-width="0.700"/></svg>
<span class="t" style="left:46.30px;top:329.00px;font-size:14px;transform:scaleX(0.9000);">1/2&quot; Hex...</span>
<svg style="left:110.0px;top:326.0px" width="20" height="20" viewBox="-10.0 -10.0 20 20" ><circle r="2.900" fill="#2d2d2d"/><path d="M0 -9 v2 M0 -5.800 v1.800 M0 4 v1.800 M0 7 v2" stroke="#2d2d2d" stroke-width="1.700"/></svg>
<div class="abs" style="left:0;top:350px;width:200px;height:24px;background:#b3dbf3"></div>
<svg style="left:0.0px;top:352.0px" width="20" height="20" viewBox="-10.0 -10.0 20 20" ><path d="M-2.600 -5.200 L2.600 0 L-2.600 5.200" fill="none" stroke="#505050" stroke-width="2"/></svg>
<svg style="left:23.5px;top:351.5px" width="20" height="20" viewBox="-10.0 -10.0 20 20" ><path d="M-5.400 0.800 V5.400 L-3.400 7.400 H7.200 V-4 Q7.200 -6.600 4.600 -6.600 H0.400 V0.400 L-3.200 0.600Z" fill="#fff" stroke="#3a3a3a" stroke-width="1.150" stroke-linejoin="round"/><path d="M-5.400 1.200 L-3.400 3.200 H3.600 V-4.600 H0.600 M-3.400 3.200 V7.400" fill="none" stroke="#3a3a3a" stroke-width="0.900"/><rect x="-8" y="-8" width="7.600" height="6.600" fill="#2f6fbd"/><path d="M-5.500 -8 v6.600 M-3 -8 v6.600 M-8 -5.800 h7.600 M-8 -3.600 h7.600" stroke="#cfe0f4" stroke-width="0.700"/></svg>
<span class="t" style="left:46.30px;top:355.00px;font-size:14px;transform:scaleX(0.9153);">24t Cust...</span>
<svg style="left:110.0px;top:352.0px" width="20" height="20" viewBox="-10.0 -10.0 20 20" ><circle r="2.900" fill="#2d2d2d"/><path d="M0 -9 v2 M0 -5.800 v1.800 M0 4 v1.800 M0 7 v2" stroke="#2d2d2d" stroke-width="1.700"/></svg>
<div class="abs" style="left:0;top:376px;width:200px;height:24px;background:#b3dbf3"></div>
<svg style="left:23.5px;top:377.5px" width="20" height="20" viewBox="-10.0 -10.0 20 20" ><path d="M-5.400 0.800 V5.400 L-3.400 7.400 H7.200 V-4 Q7.200 -6.600 4.600 -6.600 H0.400 V0.400 L-3.200 0.600Z" fill="#fff" stroke="#3a3a3a" stroke-width="1.150" stroke-linejoin="round"/><path d="M-5.400 1.200 L-3.400 3.200 H3.600 V-4.600 H0.600 M-3.400 3.200 V7.400" fill="none" stroke="#3a3a3a" stroke-width="0.900"/><rect x="-8" y="-8" width="7.600" height="6.600" fill="#2f6fbd"/><path d="M-5.500 -8 v6.600 M-3 -8 v6.600 M-8 -5.800 h7.600 M-8 -3.600 h7.600" stroke="#cfe0f4" stroke-width="0.700"/></svg>
<span class="t" style="left:46.30px;top:381.00px;font-size:14px;transform:scaleX(0.9268);">3D-Print...</span>
<svg style="left:110.0px;top:378.0px" width="20" height="20" viewBox="-10.0 -10.0 20 20" ><circle r="2.900" fill="#2d2d2d"/><path d="M0 -9 v2 M0 -5.800 v1.800 M0 4 v1.800 M0 7 v2" stroke="#2d2d2d" stroke-width="1.700"/></svg>
<div class="abs" style="left:0;top:402px;width:200px;height:24px;background:#b3dbf3"></div>
<svg style="left:23.5px;top:403.5px" width="20" height="20" viewBox="-10.0 -10.0 20 20" ><path d="M-5.400 0.800 V5.400 L-3.400 7.400 H7.200 V-4 Q7.200 -6.600 4.600 -6.600 H0.400 V0.400 L-3.200 0.600Z" fill="#fff" stroke="#3a3a3a" stroke-width="1.150" stroke-linejoin="round"/><path d="M-5.400 1.200 L-3.400 3.200 H3.600 V-4.600 H0.600 M-3.400 3.200 V7.400" fill="none" stroke="#3a3a3a" stroke-width="0.900"/><rect x="-8" y="-8" width="7.600" height="6.600" fill="#2f6fbd"/><path d="M-5.500 -8 v6.600 M-3 -8 v6.600 M-8 -5.800 h7.600 M-8 -3.600 h7.600" stroke="#cfe0f4" stroke-width="0.700"/></svg>
<span class="t" style="left:46.30px;top:407.00px;font-size:14px;transform:scaleX(0.9361);">30t Alu...</span>
<svg style="left:110.0px;top:404.0px" width="20" height="20" viewBox="-10.0 -10.0 20 20" ><circle r="2.900" fill="#2d2d2d"/><path d="M0 -9 v2 M0 -5.800 v1.800 M0 4 v1.800 M0 7 v2" stroke="#2d2d2d" stroke-width="1.700"/></svg>
<div class="abs" style="left:0;top:428px;width:200px;height:24px;background:#b3dbf3"></div>
<svg style="left:23.5px;top:429.5px" width="20" height="20" viewBox="-10.0 -10.0 20 20" ><path d="M-5.400 0.800 V5.400 L-3.400 7.400 H7.200 V-4 Q7.200 -6.600 4.600 -6.600 H0.400 V0.400 L-3.200 0.600Z" fill="#fff" stroke="#3a3a3a" stroke-width="1.150" stroke-linejoin="round"/><path d="M-5.400 1.200 L-3.400 3.200 H3.600 V-4.600 H0.600 M-3.400 3.200 V7.400" fill="none" stroke="#3a3a3a" stroke-width="0.900"/><rect x="-8" y="-8" width="7.600" height="6.600" fill="#2f6fbd"/><path d="M-5.500 -8 v6.600 M-3 -8 v6.600 M-8 -5.800 h7.600 M-8 -3.600 h7.600" stroke="#cfe0f4" stroke-width="0.700"/></svg>
<span class="t" style="left:46.30px;top:433.00px;font-size:14px;transform:scaleX(0.9000);">1/2&quot; Hex...</span>
<svg style="left:110.0px;top:430.0px" width="20" height="20" viewBox="-10.0 -10.0 20 20" ><circle r="2.900" fill="#2d2d2d"/><path d="M0 -9 v2 M0 -5.800 v1.800 M0 4 v1.800 M0 7 v2" stroke="#2d2d2d" stroke-width="1.700"/></svg>
<div class="abs" style="left:0;top:454px;width:200px;height:24px;background:#b3dbf3"></div>
<svg style="left:0.0px;top:456.0px" width="20" height="20" viewBox="-10.0 -10.0 20 20" ><path d="M-2.600 -5.200 L2.600 0 L-2.600 5.200" fill="none" stroke="#505050" stroke-width="2"/></svg>
<svg style="left:23.5px;top:455.5px" width="20" height="20" viewBox="-10.0 -10.0 20 20" ><path d="M-5.400 0.800 V5.400 L-3.400 7.400 H7.200 V-4 Q7.200 -6.600 4.600 -6.600 H0.400 V0.400 L-3.200 0.600Z" fill="#fff" stroke="#3a3a3a" stroke-width="1.150" stroke-linejoin="round"/><path d="M-5.400 1.200 L-3.400 3.200 H3.600 V-4.600 H0.600 M-3.400 3.200 V7.400" fill="none" stroke="#3a3a3a" stroke-width="0.900"/><rect x="-8" y="-8" width="7.600" height="6.600" fill="#2f6fbd"/><path d="M-5.500 -8 v6.600 M-3 -8 v6.600 M-8 -5.800 h7.600 M-8 -3.600 h7.600" stroke="#cfe0f4" stroke-width="0.700"/></svg>
<span class="t" style="left:46.30px;top:459.00px;font-size:14px;transform:scaleX(0.9153);">24t Cust...</span>
<svg style="left:110.0px;top:456.0px" width="20" height="20" viewBox="-10.0 -10.0 20 20" ><circle r="2.900" fill="#2d2d2d"/><path d="M0 -9 v2 M0 -5.800 v1.800 M0 4 v1.800 M0 7 v2" stroke="#2d2d2d" stroke-width="1.700"/></svg>
<div class="abs" style="left:0;top:480px;width:200px;height:24px;background:#b3dbf3"></div>
<svg style="left:23.5px;top:481.5px" width="20" height="20" viewBox="-10.0 -10.0 20 20" ><path d="M-5.400 0.800 V5.400 L-3.400 7.400 H7.200 V-4 Q7.200 -6.600 4.600 -6.600 H0.400 V0.400 L-3.200 0.600Z" fill="#fff" stroke="#3a3a3a" stroke-width="1.150" stroke-linejoin="round"/><path d="M-5.400 1.200 L-3.400 3.200 H3.600 V-4.600 H0.600 M-3.400 3.200 V7.400" fill="none" stroke="#3a3a3a" stroke-width="0.900"/><rect x="-8" y="-8" width="7.600" height="6.600" fill="#2f6fbd"/><path d="M-5.500 -8 v6.600 M-3 -8 v6.600 M-8 -5.800 h7.600 M-8 -3.600 h7.600" stroke="#cfe0f4" stroke-width="0.700"/></svg>
<span class="t" style="left:46.30px;top:485.00px;font-size:14px;transform:scaleX(0.9268);">3D-Print...</span>
<svg style="left:110.0px;top:482.0px" width="20" height="20" viewBox="-10.0 -10.0 20 20" ><circle r="2.900" fill="#2d2d2d"/><path d="M0 -9 v2 M0 -5.800 v1.800 M0 4 v1.800 M0 7 v2" stroke="#2d2d2d" stroke-width="1.700"/></svg>
<svg style="left:0.0px;top:508.0px" width="20" height="20" viewBox="-10.0 -10.0 20 20" ><path d="M-5.400 -2.600 L0 2.800 L5.400 -2.600" fill="none" stroke="#505050" stroke-width="2"/></svg>
<span class="t" style="left:23.00px;top:511.00px;font-size:14px;transform:scaleX(0.9361);">Items (0)</span>
<svg style="left:0.0px;top:534.0px" width="20" height="20" viewBox="-10.0 -10.0 20 20" ><path d="M-5.400 -2.600 L0 2.800 L5.400 -2.600" fill="none" stroke="#505050" stroke-width="2"/></svg>
<span class="t" style="left:23.00px;top:537.00px;font-size:14px;transform:scaleX(0.9164);">Loads (0)</span>
<svg style="left:0.0px;top:560.0px" width="20" height="20" viewBox="-10.0 -10.0 20 20" ><path d="M-5.400 -2.600 L0 2.800 L5.400 -2.600" fill="none" stroke="#505050" stroke-width="2"/></svg>
<span class="t" style="left:23.00px;top:563.00px;font-size:14px;transform:scaleX(0.9240);">Mate Features (18)</span>
<div class="abs" style="left:9.5px;top:583px;width:1px;height:330px;background:#d4d4d4"></div>
<svg style="left:42.0px;top:586.0px" width="20" height="20" viewBox="-10.0 -10.0 20 20" ><rect x="-6.600" y="-6.600" width="13.200" height="13.200" fill="none" stroke="#aaa" stroke-width="1.200" stroke-dasharray="2.600 1.800"/><rect x="-3.600" y="-3.800" width="5" height="5" fill="#fff" stroke="#aaa" stroke-width="1"/><rect x="-1.200" y="-1.400" width="5" height="5" fill="#fff" stroke="#aaa" stroke-width="1"/></svg>
<span class="t" style="left:65.00px;top:589.00px;font-size:14px;color:#9a9a9a;transform:scaleX(0.8836);">Group 1</span>
<svg style="left:19.0px;top:612.0px" width="20" height="20" viewBox="-10.0 -10.0 20 20" ><path d="M-2.600 -5.200 L2.600 0 L-2.600 5.200" fill="none" stroke="#505050" stroke-width="2"/></svg>
<svg style="left:42.0px;top:612.0px" width="20" height="20" viewBox="-10.0 -10.0 20 20" ><path d="M0 8 Q-5.600 1 -5.600 -2.600 A5.600 5.600 0 0 1 5.600 -2.600 Q5.600 1 0 8Z" fill="#fff" stroke="#b4b4b4" stroke-width="1.100"/><circle cy="-2.600" r="2.600" fill="none" stroke="#b4b4b4" stroke-width="1"/><circle cy="-2.600" r="0.900" fill="#b4b4b4"/></svg>
<span class="t" style="left:65.00px;top:615.00px;font-size:14px;color:#9a9a9a;transform:scaleX(0.9108);">Fastened 1</span>
<svg style="left:19.0px;top:638.0px" width="20" height="20" viewBox="-10.0 -10.0 20 20" ><path d="M-2.600 -5.200 L2.600 0 L-2.600 5.200" fill="none" stroke="#505050" stroke-width="2"/></svg>
<svg style="left:42.0px;top:638.0px" width="20" height="20" viewBox="-10.0 -10.0 20 20" ><path d="M-5.600 -4 V3.600 a5.600 2.400 0 0 0 11.200 0 V-4" fill="#d8d8d8" stroke="#b4b4b4" stroke-width="1.100"/><path d="M-5.600 -4 V0 h3 v2.200 q2.600 1.400 5.200 0 V0 h3 V-4" fill="#fff" stroke="#b4b4b4" stroke-width="1.100"/><ellipse cx="0" cy="-4" rx="5.600" ry="2.400" fill="#fff" stroke="#b4b4b4" stroke-width="1.100"/></svg>
<span class="t" style="left:65.00px;top:641.00px;font-size:14px;color:#9a9a9a;transform:scaleX(0.9108);">Fastened 2</span>
<svg style="left:19.0px;top:664.0px" width="20" height="20" viewBox="-10.0 -10.0 20 20" ><path d="M-2.600 -5.200 L2.600 0 L-2.600 5.200" fill="none" stroke="#505050" stroke-width="2"/></svg>
<svg style="left:42.0px;top:664.0px" width="20" height="20" viewBox="-10.0 -10.0 20 20" ><path d="M-5.600 -4 V3.600 a5.600 2.400 0 0 0 11.200 0 V-4" fill="#d8d8d8" stroke="#b4b4b4" stroke-width="1.100"/><path d="M-5.600 -4 V0 h3 v2.200 q2.600 1.400 5.200 0 V0 h3 V-4" fill="#fff" stroke="#b4b4b4" stroke-width="1.100"/><ellipse cx="0" cy="-4" rx="5.600" ry="2.400" fill="#fff" stroke="#b4b4b4" stroke-width="1.100"/></svg>
<span class="t" style="left:65.00px;top:667.00px;font-size:14px;color:#9a9a9a;transform:scaleX(0.9108);">Fastened 3</span>
<svg style="left:19.0px;top:690.0px" width="20" height="20" viewBox="-10.0 -10.0 20 20" ><path d="M-2.600 -5.200 L2.600 0 L-2.600 5.200" fill="none" stroke="#505050" stroke-width="2"/></svg>
<svg style="left:42.0px;top:690.0px" width="20" height="20" viewBox="-10.0 -10.0 20 20" ><path d="M-5.600 -4 V3.600 a5.600 2.400 0 0 0 11.200 0 V-4" fill="#d8d8d8" stroke="#b4b4b4" stroke-width="1.100"/><path d="M-5.600 -4 V0 h3 v2.200 q2.600 1.400 5.200 0 V0 h3 V-4" fill="#fff" stroke="#b4b4b4" stroke-width="1.100"/><ellipse cx="0" cy="-4" rx="5.600" ry="2.400" fill="#fff" stroke="#b4b4b4" stroke-width="1.100"/></svg>
<span class="t" style="left:65.00px;top:693.00px;font-size:14px;color:#9a9a9a;transform:scaleX(0.9165);">Fastened 4</span>
<svg style="left:19.0px;top:716.0px" width="20" height="20" viewBox="-10.0 -10.0 20 20" ><path d="M-2.600 -5.200 L2.600 0 L-2.600 5.200" fill="none" stroke="#505050" stroke-width="2"/></svg>
<svg style="left:42.0px;top:716.0px" width="20" height="20" viewBox="-10.0 -10.0 20 20" ><path d="M-5.600 -4 V3.600 a5.600 2.400 0 0 0 11.200 0 V-4" fill="#d8d8d8" stroke="#b4b4b4" stroke-width="1.100"/><path d="M-5.600 -4 V0 h3 v2.200 q2.600 1.400 5.200 0 V0 h3 V-4" fill="#fff" stroke="#b4b4b4" stroke-width="1.100"/><ellipse cx="0" cy="-4" rx="5.600" ry="2.400" fill="#fff" stroke="#b4b4b4" stroke-width="1.100"/></svg>
<span class="t" style="left:65.00px;top:719.00px;font-size:14px;color:#9a9a9a;transform:scaleX(0.9108);">Fastened 5</span>
<svg style="left:19.0px;top:742.0px" width="20" height="20" viewBox="-10.0 -10.0 20 20" ><path d="M-2.600 -5.200 L2.600 0 L-2.600 5.200" fill="none" stroke="#505050" stroke-width="2"/></svg>
<svg style="left:42.0px;top:742.0px" width="20" height="20" viewBox="-10.0 -10.0 20 20" ><path d="M-5.600 -4 V3.600 a5.600 2.400 0 0 0 11.200 0 V-4" fill="#d8d8d8" stroke="#b4b4b4" stroke-width="1.100"/><path d="M-5.600 -4 V0 h3 v2.200 q2.600 1.400 5.200 0 V0 h3 V-4" fill="#fff" stroke="#b4b4b4" stroke-width="1.100"/><ellipse cx="0" cy="-4" rx="5.600" ry="2.400" fill="#fff" stroke="#b4b4b4" stroke-width="1.100"/></svg>
<span class="t" style="left:65.00px;top:745.00px;font-size:14px;color:#9a9a9a;transform:scaleX(0.9005);">Fastened 13 (1)</span>
<svg style="left:19.0px;top:768.0px" width="20" height="20" viewBox="-10.0 -10.0 20 20" ><path d="M-2.600 -5.200 L2.600 0 L-2.600 5.200" fill="none" stroke="#505050" stroke-width="2"/></svg>
<svg style="left:42.0px;top:768.0px" width="20" height="20" viewBox="-10.0 -10.0 20 20" ><path d="M-5.600 -4 V3.600 a5.600 2.400 0 0 0 11.200 0 V-4" fill="#d8d8d8" stroke="#b4b4b4" stroke-width="1.100"/><path d="M-5.600 -4 V0 h3 v2.200 q2.600 1.400 5.200 0 V0 h3 V-4" fill="#fff" stroke="#b4b4b4" stroke-width="1.100"/><ellipse cx="0" cy="-4" rx="5.600" ry="2.400" fill="#fff" stroke="#b4b4b4" stroke-width="1.100"/></svg>
<span class="t" style="left:65.00px;top:771.00px;font-size:14px;color:#9a9a9a;transform:scaleX(0.9056);">Fastened 23 (1)</span>
<svg style="left:19.0px;top:794.0px" width="20" height="20" viewBox="-10.0 -10.0 20 20" ><path d="M-2.600 -5.200 L2.600 0 L-2.600 5.200" fill="none" stroke="#505050" stroke-width="2"/></svg>
<svg style="left:42.0px;top:794.0px" width="20" height="20" viewBox="-10.0 -10.0 20 20" ><path d="M-5.600 -4 V3.600 a5.600 2.400 0 0 0 11.200 0 V-4" fill="#d8d8d8" stroke="#b4b4b4" stroke-width="1.100"/><path d="M-5.600 -4 V0 h3 v2.200 q2.600 1.400 5.200 0 V0 h3 V-4" fill="#fff" stroke="#b4b4b4" stroke-width="1.100"/><ellipse cx="0" cy="-4" rx="5.600" ry="2.400" fill="#fff" stroke="#b4b4b4" stroke-width="1.100"/></svg>
<span class="t" style="left:65.00px;top:797.00px;font-size:14px;color:#9a9a9a;transform:scaleX(0.9061);">Fastened 4 (1)</span>
<svg style="left:19.0px;top:820.0px" width="20" height="20" viewBox="-10.0 -10.0 20 20" ><path d="M-2.600 -5.200 L2.600 0 L-2.600 5.200" fill="none" stroke="#505050" stroke-width="2"/></svg>
<svg style="left:42.0px;top:820.0px" width="20" height="20" viewBox="-10.0 -10.0 20 20" ><path d="M-5.600 -4 V3.600 a5.600 2.400 0 0 0 11.200 0 V-4" fill="#d8d8d8" stroke="#b4b4b4" stroke-width="1.100"/><path d="M-5.600 -4 V0 h3 v2.200 q2.600 1.400 5.200 0 V0 h3 V-4" fill="#fff" stroke="#b4b4b4" stroke-width="1.100"/><ellipse cx="0" cy="-4" rx="5.600" ry="2.400" fill="#fff" stroke="#b4b4b4" stroke-width="1.100"/></svg>
<span class="t" style="left:65.00px;top:823.00px;font-size:14px;color:#9a9a9a;transform:scaleX(0.9108);">Fastened 6</span>
<svg style="left:19.0px;top:846.0px" width="20" height="20" viewBox="-10.0 -10.0 20 20" ><path d="M-2.600 -5.200 L2.600 0 L-2.600 5.200" fill="none" stroke="#505050" stroke-width="2"/></svg>
<svg style="left:42.0px;top:846.0px" width="20" height="20" viewBox="-10.0 -10.0 20 20" ><path d="M-5.600 -4 V3.600 a5.600 2.400 0 0 0 11.200 0 V-4" fill="#d8d8d8" stroke="#b4b4b4" stroke-width="1.100"/><path d="M-5.600 -4 V0 h3 v2.200 q2.600 1.400 5.200 0 V0 h3 V-4" fill="#fff" stroke="#b4b4b4" stroke-width="1.100"/><ellipse cx="0" cy="-4" rx="5.600" ry="2.400" fill="#fff" stroke="#b4b4b4" stroke-width="1.100"/></svg>
<span class="t" style="left:65.00px;top:849.00px;font-size:14px;color:#9a9a9a;transform:scaleX(0.9051);">Fastened 7</span>
<svg style="left:19.0px;top:872.0px" width="20" height="20" viewBox="-10.0 -10.0 20 20" ><path d="M-2.600 -5.200 L2.600 0 L-2.600 5.200" fill="none" stroke="#505050" stroke-width="2"/></svg>
<svg style="left:42.0px;top:872.0px" width="20" height="20" viewBox="-10.0 -10.0 20 20" ><path d="M-5.600 -4 V3.600 a5.600 2.400 0 0 0 11.200 0 V-4" fill="#d8d8d8" stroke="#b4b4b4" stroke-width="1.100"/><path d="M-5.600 -4 V0 h3 v2.200 q2.600 1.400 5.200 0 V0 h3 V-4" fill="#fff" stroke="#b4b4b4" stroke-width="1.100"/><ellipse cx="0" cy="-4" rx="5.600" ry="2.400" fill="#fff" stroke="#b4b4b4" stroke-width="1.100"/></svg>
<span class="t" style="left:65.00px;top:875.00px;font-size:14px;color:#9a9a9a;transform:scaleX(0.9006);">Fastened 7 (1)</span>
<svg style="left:19.0px;top:898.0px" width="20" height="20" viewBox="-10.0 -10.0 20 20" ><path d="M-2.600 -5.200 L2.600 0 L-2.600 5.200" fill="none" stroke="#505050" stroke-width="2"/></svg>
<svg style="left:42.0px;top:898.0px" width="20" height="20" viewBox="-10.0 -10.0 20 20" ><path d="M-5.600 -4 V3.600 a5.600 2.400 0 0 0 11.200 0 V-4" fill="#d8d8d8" stroke="#b4b4b4" stroke-width="1.100"/><path d="M-5.600 -4 V0 h3 v2.200 q2.600 1.400 5.200 0 V0 h3 V-4" fill="#fff" stroke="#b4b4b4" stroke-width="1.100"/><ellipse cx="0" cy="-4" rx="5.600" ry="2.400" fill="#fff" stroke="#b4b4b4" stroke-width="1.100"/></svg>
<span class="t" style="left:65.00px;top:901.00px;font-size:14px;color:#9a9a9a;transform:scaleX(0.9108);">Fastened 8</span>
</div>
<div class="abs" style="left:195.5px;top:242px;width:2px;height:611px;background:#6a6a6a"></div>
</div>
<div id="tabs">
<div class="abs" style="left:0;top:0;width:1879px;height:1px;background:#c8c8c8"></div>
<div class="abs" style="left:0;top:0;width:33px;height:29px;background:#cfcfcf"></div>
<svg style="left:4.0px;top:2.0px" width="24" height="24" viewBox="-12.0 -12.0 24 24" ><path d="M0 -7.400 v14.800 M-7.400 0 h14.800" stroke="#4a4a4a" stroke-width="2.600"/></svg>
<svg style="left:33px;top:0" width="175" height="29" viewBox="73 1050 175 29"><path d="M73.500 1050.500 H107.500 L116 1064 L107.500 1077.500 H75.500 Q73.500 1077.500 73.500 1075.500Z" fill="#e9e9e9" stroke="#c4c4c4" stroke-width="1"/><path d="M108.500 1050.500 H238.500 L245.400 1064 L238.500 1077.500 H108.500 L117 1064Z" fill="#fff" stroke="#c4c4c4" stroke-width="1"/></svg>
<svg style="left:40.0px;top:0.0px" width="24" height="24" viewBox="-12.0 -12.0 24 24" ><path d="M0 -8.600 L-9.400 0.400 H-7 V8.400 H-2.200 V2.200 H2.200 V8.400 H7 V0.400 H9.400 L6.200 -2.600 V-7.400 H3.400 V-5.400Z" fill="#4a4a4a"/></svg>
<span class="t" style="left:90.00px;top:6.50px;font-size:14.6px;color:#555;transform:scaleX(0.9521);">Exercise 6 - Dir</span>
<div class="abs" style="left:179px;top:3px;width:18px;height:23px;background:linear-gradient(90deg,rgba(255,255,255,0),#fff 60%)"></div>
<div class="abs" style="left:207px;top:1px;width:198px;height:27px;background:#ebebeb;border:1px solid #d0d0d0;border-top:none;border-radius:0 0 4px 4px"></div>
<svg style="left:215.0px;top:1.0px" width="24" height="24" viewBox="-12.0 -12.0 24 24" ><circle r="6.800" fill="#6f9fd0"/><circle r="2.500" fill="#fff"/><path d="M0 -6.800 v3.600 M0 3.200 v3.600" stroke="#fff" stroke-width="1.500"/></svg>
<svg style="left:235.0px;top:1.0px" width="24" height="24" viewBox="-12.0 -12.0 24 24" ><path d="M-8.400 -5.600 L-5 -8.400 H8.400 V5 L5 8.400 H-8.400Z" fill="#fff" stroke="#2d2d2d" stroke-width="1.200" stroke-linejoin="round"/><rect x="-6.200" y="-4" width="10" height="10.400" fill="#8c8c8c" stroke="#2d2d2d" stroke-width="1"/><path d="M3.800 -4 L7.200 -7" stroke="#2d2d2d" stroke-width="1"/></svg>
<span class="t" style="left:260.60px;top:6.00px;font-size:15px;color:#555;transform:scaleX(0.9213);">Exercise 6 Assembly</span>
<div class="abs" style="left:409px;top:0;width:200px;height:28px;background:#fff;border-bottom:2.500px solid #1b5faa;border-radius:0 0 4px 4px"></div>
<svg style="left:417.0px;top:1.0px" width="24" height="24" viewBox="-12.0 -12.0 24 24" ><circle r="6.800" fill="#6f9fd0"/><circle r="2.500" fill="#fff"/><path d="M0 -6.800 v3.600 M0 3.200 v3.600" stroke="#fff" stroke-width="1.500"/></svg>
<svg style="left:437.0px;top:1.0px" width="24" height="24" viewBox="-12.0 -12.0 24 24" ><path d="M-8.400 -5.600 L-5 -8.400 H8.400 V5 L5 8.400 H-8.400Z" fill="#fff" stroke="#2d2d2d" stroke-width="1.200" stroke-linejoin="round"/><rect x="-6.200" y="-4" width="10" height="10.400" fill="#8c8c8c" stroke="#2d2d2d" stroke-width="1"/><path d="M3.800 -4 L7.200 -7" stroke="#2d2d2d" stroke-width="1"/></svg>
<span class="t" style="left:462.00px;top:6.00px;font-size:15px;color:#2d2d2d;transform:scaleX(0.9287);">Assembly 2</span>
<div class="abs" style="left:611px;top:1px;width:200px;height:27px;background:#ebebeb;border:1px solid #d0d0d0;border-top:none;border-radius:0 0 4px 4px"></div>
<svg style="left:620.0px;top:1.0px" width="24" height="24" viewBox="-12.0 -12.0 24 24" ><path d="M-8.400 -1.400 V6.400 L-6.600 8 H-1.800 V0.200 L-3.600 -1.400Z" fill="#fff" stroke="#3a3a3a" stroke-width="1.100" stroke-linejoin="round"/><path d="M-8.400 -1.400 L-6.600 0.200 H-1.800 M-6.600 0.200 V8" fill="none" stroke="#3a3a3a" stroke-width="0.900"/><path d="M-0.600 -6.800 L1.400 -8.400 H6.400 L8.400 -6.800 V8 H1.400 L-0.600 6.400Z" fill="#fff" stroke="#3a3a3a" stroke-width="1.100" stroke-linejoin="round"/><path d="M-0.600 -6.800 L1.400 -5.200 H8.400 M1.400 -5.200 V8" fill="none" stroke="#3a3a3a" stroke-width="0.900"/></svg>
<span class="t" style="left:644.40px;top:6.00px;font-size:15px;color:#555;transform:scaleX(0.9097);">Exercise 6 Part Studio</span>
</div>
<div class="abs" style="left:245px;top:538px;width:33px;height:35px;background:#fff;border:1px solid #cfcfcf;border-left:none"></div>
<svg style="left:250.0px;top:543.5px" width="24" height="24" viewBox="-12.0 -12.0 24 24" ><path d="M-2.600 -5.400 h8.600 M-2.600 -1.800 h8.600 M-2.600 1.800 h8.600 M-2.600 5.400 h8.600" stroke="#555" stroke-width="1.300"/><path d="M-5.800 -6.400 v12.600" stroke="#555" stroke-width="1.300"/><path d="M-8.200 -7.400 l2.400 2.400 2.400 -2.400" fill="none" stroke="#555" stroke-width="1.200"/></svg>
<svg style="left:1740px;top:80px" width="179" height="175" viewBox="1740 80 179 175">
<polygon points="1830.2,91.3 1822.8,100.6 1837.7,100.6" fill="#9b9b9b"/><polygon points="1822.8,231.2 1837.7,231.2 1830.2,240.5" fill="#9b9b9b"/>
<polygon points="1755.2,166 1764.5,158.9 1764.5,172.8" fill="#9b9b9b"/><polygon points="1904.9,166 1895.1,158.9 1895.1,172.8" fill="#9b9b9b"/>
<path d="M1809 102.400 Q1792 108 1782.500 120" fill="none" stroke="#9b9b9b" stroke-width="4.200"/><polygon points="1776.200,124.600 1777.400,113.800 1788,122.800" fill="#9b9b9b"/>
<path d="M1851.600 102.400 Q1868.600 108 1878 120" fill="none" stroke="#9b9b9b" stroke-width="4.200"/><polygon points="1884.400,124.600 1883.200,113.800 1872.600,122.800" fill="#9b9b9b"/>
<polygon points="1795,136 1826,125 1866,136 1869,142 1869,190 1864,196 1842,207 1835,207 1796,196 1791.500,190 1791.500,142" fill="#eef1f3" stroke="#dfe5e8" stroke-width="1.200"/>
<polygon points="1800,137 1827,128.500 1861,138 1836,150" fill="#fafbfb" stroke="#e3e8eb" stroke-width="1"/>
<polygon points="1794.500,147 1834,157 1834,202 1794.500,189" fill="#fafbfb" stroke="#e3e8eb" stroke-width="1"/>
<polygon points="1841,157 1866.500,144 1866.500,187 1841,202" fill="#f6f8f9" stroke="#e3e8eb" stroke-width="1"/>
<path d="M1788.600 147.400 V197.800" stroke="#3a3ad0" stroke-width="1.600"/><path d="M1788.600 197.800 L1838.600 212.700" stroke="#d82a2a" stroke-width="1.600"/><path d="M1788.600 197.800 L1818 173" stroke="#35b04a" stroke-width="0.900"/>
</svg>
<span class="t" style="left:1784.00px;top:132.00px;font-size:11.5px;color:#6a6ae0;transform:scaleX(1.2100);">Z</span>
<span class="t" style="left:1843.50px;top:209.00px;font-size:12px;font-weight:700;color:#dc3232;transform:scaleX(1.1244);">X</span>
<span class="t" style="left:1819.00px;top:162.00px;font-size:10px;color:#b9dcc0;transform:scaleX(1.1244);">Y</span>
<span class="t" style="left:1802px;top:171px;font-size:12.500px;color:#2a2a2a;transform:rotate(11deg) scaleX(0.9);transform-origin:0 50%">Front</span>
<span class="t" style="left:1821px;top:133px;font-size:9px;font-style:italic;color:#2a2a2a;transform:rotate(18deg) scaleX(0.95);transform-origin:0 50%">Top</span>
<span class="t" style="left:1851.500px;top:178px;font-size:9px;font-style:italic;color:#2a2a2a;transform:rotate(-62deg) scaleX(0.95);transform-origin:0 50%">Right</span>
<svg style="left:1863.3px;top:219.5px" width="24" height="24" viewBox="-12.0 -12.0 24 24" ><polygon points="0,-9 8,-6 8,4.500 0,8.500 -8,4.500 -8,-6" fill="#e9e9e9" stroke="#3a3a3a" stroke-width="1.100" stroke-linejoin="round"/><polygon points="-8,-6 0,-3 0,8.500 -8,4.500" fill="#9a9a9a" stroke="#3a3a3a" stroke-width="0.900"/><polygon points="0,-3 8,-6 8,4.500 0,8.500" fill="#d0d0d0" stroke="#3a3a3a" stroke-width="0.900"/></svg>
<svg style="left:1892px;top:229.500px" width="9" height="5" viewBox="0 0 9 5"><path d="M0.400 0.200 h8.200 l-4.100 4.600z" fill="#2d2d2d"/></svg>
<div class="abs" style="left:1887px;top:367px;width:34px;height:199px;background:#fff;border:1px solid #bdbdbd"></div>
<div class="abs" style="left:1888px;top:400px;width:31px;height:1px;background:#bdbdbd"></div>
<div class="abs" style="left:1888px;top:433px;width:31px;height:1px;background:#bdbdbd"></div>
<div class="abs" style="left:1888px;top:466px;width:31px;height:1px;background:#bdbdbd"></div>
<div class="abs" style="left:1888px;top:499px;width:31px;height:1px;background:#bdbdbd"></div>
<div class="abs" style="left:1888px;top:532px;width:31px;height:1px;background:#bdbdbd"></div>
<svg style="left:1893.0px;top:372.5px" width="24" height="24" viewBox="-12.0 -12.0 24 24" ><rect x="-8.600" y="-8.200" width="17.200" height="16.400" rx="2.400" fill="none" stroke="#2d2d2d" stroke-width="1.300"/><path d="M-5.600 -4.600 h11 M-3.400 -1.600 h8.800 M-3.400 1.600 h8.800 M-3.400 4.600 h8.800" stroke="#2d2d2d" stroke-width="1.600"/></svg>
<svg style="left:1893.0px;top:405.5px" width="24" height="24" viewBox="-12.0 -12.0 24 24" ><polygon points="2,-5.400 9,-2.800 9,5 2,8.400 -4.400,5 -4.400,-2.600" fill="#fff" stroke="#2d2d2d" stroke-width="1.200" stroke-linejoin="round"/><path d="M-4.400 -2.600 L2 0.200 L9 -2.800 M2 0.200 V8.400" fill="none" stroke="#2d2d2d" stroke-width="1.100"/><rect x="-9.400" y="-9" width="8.600" height="7.400" fill="#2f6fbd"/><path d="M-6.600 -9 v7.400 M-3.700 -9 v7.400 M-9.400 -6.600 h8.600 M-9.400 -4.100 h8.600" stroke="#d5e3f5" stroke-width="0.700"/></svg>
<svg style="left:1893.0px;top:438.5px" width="24" height="24" viewBox="-12.0 -12.0 24 24" ><rect x="-9" y="-9" width="4.800" height="4.800" fill="#bbb" stroke="#2d2d2d" stroke-width="0.900"/><path d="M-6 -3.400 v2.600 h4.600" fill="none" stroke="#1b5faa" stroke-width="1.200" stroke-dasharray="1.600 1"/><path d="M-2.400 1 V6 L-0.600 8 H8.400 V-2 L6.600 -4 H1.800 V1.200Z" fill="#fff" stroke="#2d2d2d" stroke-width="1" stroke-linejoin="round"/><path d="M-2.400 1.200 L-0.600 3.200 H4.600 V-2 H1.800 M-0.600 3.200 V8" fill="none" stroke="#2d2d2d" stroke-width="0.800"/></svg>
<svg style="left:1893.0px;top:471.5px" width="24" height="24" viewBox="-12.0 -12.0 24 24" ><rect x="1.200" y="-9" width="7.200" height="12" fill="none" stroke="#1b5faa" stroke-width="1.200" stroke-dasharray="1.800 1.200"/><rect x="-9" y="1.200" width="17.400" height="6.800" fill="#fff" stroke="#2d2d2d" stroke-width="1.200"/><circle cx="4.800" cy="4.600" r="2.600" fill="#fff" stroke="#2d2d2d" stroke-width="1"/><circle cx="4.800" cy="4.600" r="1" fill="#1b5faa"/></svg>
<svg style="left:1893.0px;top:504.5px" width="24" height="24" viewBox="-12.0 -12.0 24 24" ><polygon points="0,-9 7,-3.600 5.600,5.600 0,9 -6.600,5 -7.400,-3" fill="#dfe9f4"/><polygon points="0,-9 7,-3.600 0,0" fill="#b8dbe8"/><polygon points="0,-9 -7.400,-3 0,0" fill="#8fb7e6"/><polygon points="-7.400,-3 -6.600,5 0,0" fill="#1b5faa"/><polygon points="-6.600,5 0,9 0,0" fill="#2c6fc0"/><polygon points="0,9 5.600,5.600 0,0" fill="#9a9a9a"/><polygon points="5.600,5.600 7,-3.600 0,0" fill="#c9c9c9"/></svg>
<svg style="left:1890px;top:536px" width="28" height="26" viewBox="1890 536 28 26"><rect x="1895" y="540.200" width="9.800" height="7.400" fill="#2d2d2d"/><rect x="1895.90" y="541.20" width="2.1" height="1.25" fill="#9a9a9a"/><rect x="1898.95" y="541.20" width="2.1" height="1.25" fill="#9a9a9a"/><rect x="1902.00" y="541.20" width="2.1" height="1.25" fill="#9a9a9a"/><rect x="1895.90" y="543.35" width="2.1" height="1.25" fill="#fff"/><rect x="1898.95" y="543.35" width="2.1" height="1.25" fill="#fff"/><rect x="1902.00" y="543.35" width="2.1" height="1.25" fill="#fff"/><rect x="1895.90" y="545.50" width="2.1" height="1.25" fill="#fff"/><rect x="1898.95" y="545.50" width="2.1" height="1.25" fill="#fff"/><rect x="1902.00" y="545.50" width="2.1" height="1.25" fill="#fff"/><path d="M1896 547 Q1895.200 553 1897.600 557.600" fill="none" stroke="#2d2d2d" stroke-width="1.700"/><path d="M1912.400 542.600 Q1917.200 550 1912.400 557.600" fill="none" stroke="#2d2d2d" stroke-width="1.700"/></svg>
<span class="t" style="left:1899.00px;top:542.50px;font-size:16px;font-weight:700;font-style:italic;transform:scaleX(1.2362);font-family:'Liberation Serif',serif;">x</span>
<div class="abs" style="left:1887px;top:576px;width:34px;height:166px;background:#fff;border:1px solid #bdbdbd"></div>
<div class="abs" style="left:1888px;top:609px;width:31px;height:1px;background:#bdbdbd"></div>
<div class="abs" style="left:1888px;top:642px;width:31px;height:1px;background:#bdbdbd"></div>
<div class="abs" style="left:1888px;top:675px;width:31px;height:1px;background:#bdbdbd"></div>
<div class="abs" style="left:1888px;top:708px;width:31px;height:1px;background:#bdbdbd"></div>
<div class="abs" style="left:1893px;top:582px;width:23px;height:22px;background:#ddd;border-radius:2px"></div><div class="abs" style="left:1894.500px;top:583.500px;width:20px;height:19px;background:#1b58c8;border:1px solid #111"></div>
<span class="t" style="left:1896.00px;top:586.50px;font-size:15.5px;font-weight:700;color:#fff;transform:scaleX(0.7052);font-family:'Liberation Serif',serif;">MK</span>
<div class="abs" style="left:1893px;top:615px;width:23px;height:23px;background:#d8d8d8;border-radius:3px"></div>
<svg style="left:1892.5px;top:614.5px" width="24" height="24" viewBox="-12.0 -12.0 24 24" ><path d="M0 1 Q-2 -5 -9 -7 Q-8 0 -3.400 1.600 Q-7 3.600 -5 7.600 Q-1.600 6 0 2 Q1.600 6 5 7.600 Q7 3.600 3.400 1.600 Q8 0 9 -7 Q2 -5 0 1Z" fill="#0a0a0a"/></svg>
<div class="abs" style="left:1893px;top:648px;width:23px;height:23px;background:#d8d8d8;border-radius:3px"></div>
<svg style="left:1892.5px;top:648.0px" width="24" height="24" viewBox="-12.0 -12.0 24 24" ><rect x="-8.600" y="-4.600" width="17.200" height="11" rx="2" fill="#2a2a2a" transform="rotate(-6)"/><circle cx="-3.400" cy="0.600" r="2.700" fill="#fff" stroke="#2f7fd6" stroke-width="1.100"/><circle cx="3.800" cy="-0.200" r="2.700" fill="#fff" stroke="#2f7fd6" stroke-width="1.100"/><path d="M-0.400 -5 v-3.400" stroke="#2a2a2a" stroke-width="1.200"/><path d="M-5.600 -8.400 h3.400 M1.400 -8.800 h3.600" stroke="#3b7fd0" stroke-width="1.600" stroke-dasharray="1.200 0.700"/><path d="M-0.600 4 q2 1 3.600 -0.600" stroke="#fff" stroke-width="0.900" fill="none"/></svg>
<div class="abs" style="left:1893px;top:681px;width:23px;height:23px;background:#cfe8c9;border-radius:3px"></div><div class="abs" style="left:1894.500px;top:682.500px;width:20px;height:20px;background:#58b04e"></div>
<svg style="left:1892.5px;top:680.5px" width="24" height="24" viewBox="-12.0 -12.0 24 24" ><path d="M-0.700 -5 Q-4 -6.600 -7.400 -5 V5.400 Q-4 4 -0.700 5.400Z M0.700 -5 Q4 -6.600 7.400 -5 V5.400 Q4 4 0.700 5.400Z" fill="#fff"/></svg>
<div class="abs" style="left:1893px;top:714px;width:23px;height:23px;background:#ddd;border-radius:3px"></div><div class="abs" style="left:1894.500px;top:715.500px;width:20px;height:20px;background:#1b58c8;border:1px solid #111"></div>
<svg style="left:1892.5px;top:713.5px" width="24" height="24" viewBox="-12.0 -12.0 24 24" ><path d="M-0.700 -5 Q-4 -6.600 -7.400 -5 V5.400 Q-4 4 -0.700 5.400Z M0.700 -5 Q4 -6.600 7.400 -5 V5.400 Q4 4 0.700 5.400Z" fill="#fff"/><path d="M0 -5 V6" stroke="#555" stroke-width="1"/></svg>
<svg style="left:1818.0px;top:1024.0px" width="24" height="24" viewBox="-12.0 -12.0 24 24" ><path d="M-8 0.600 H2 V6 H-8Z" fill="#fff" stroke="#2d2d2d" stroke-width="1.200"/><path d="M-5.600 3.600 v2.400 M-3.200 3.600 v2.400 M-0.800 3.600 v2.400" stroke="#2d2d2d" stroke-width="0.800"/><path d="M-3.400 0.600 V-2.400 a5.700 3 0 0 1 11.400 0 V3 a5.700 3 0 0 1 -6 3" fill="none" stroke="#2d2d2d" stroke-width="1.200"/><ellipse cx="2.300" cy="-2.400" rx="5.700" ry="3" fill="#fff" stroke="#2d2d2d" stroke-width="1.200"/><ellipse cx="2.300" cy="-2.400" rx="2.600" ry="1.200" fill="none" stroke="#2d2d2d" stroke-width="1"/></svg>
<svg style="left:1853.0px;top:1024.0px" width="24" height="24" viewBox="-12.0 -12.0 24 24" ><path d="M-10 6.400 A10 11.600 0 0 1 10 6.400Z" fill="#fff" stroke="#2d2d2d" stroke-width="1.300" stroke-linejoin="round"/><path d="M-7.600 5.200 A7.600 9 0 0 1 7.600 5.200" fill="none" stroke="#2d2d2d" stroke-width="0.700" stroke-dasharray="0.800 0.800"/><path d="M-5.200 4.400 A5.200 5.600 0 0 1 5.200 4.400 L2.200 4.400 A2.200 2.400 0 0 0 -2.200 4.400Z" fill="#fff" stroke="#2d2d2d" stroke-width="1.200" stroke-linejoin="round"/></svg>
<svg style="left:1888.0px;top:1024.0px" width="24" height="24" viewBox="-12.0 -12.0 24 24" ><path d="M-5 -6.400 h10" stroke="#2d2d2d" stroke-width="1.300"/><path d="M0 -6.400 V6" stroke="#666" stroke-width="1.600"/><path d="M-7 7.200 h14" stroke="#2d2d2d" stroke-width="1.700"/><path d="M-4.600 -6 L-6.800 2.600 M-4.600 -6 L-2.400 2.600 M4.600 -6 L2.400 2.600 M4.600 -6 L6.800 2.600" stroke="#2d2d2d" stroke-width="0.800"/><path d="M-7 2.600 h4.800 v1.200 h-4.800z M2.200 2.600 h4.800 v1.200 h-4.800z" fill="#2d2d2d" stroke="#2d2d2d" stroke-width="0.800"/></svg>
</body>
</html>
